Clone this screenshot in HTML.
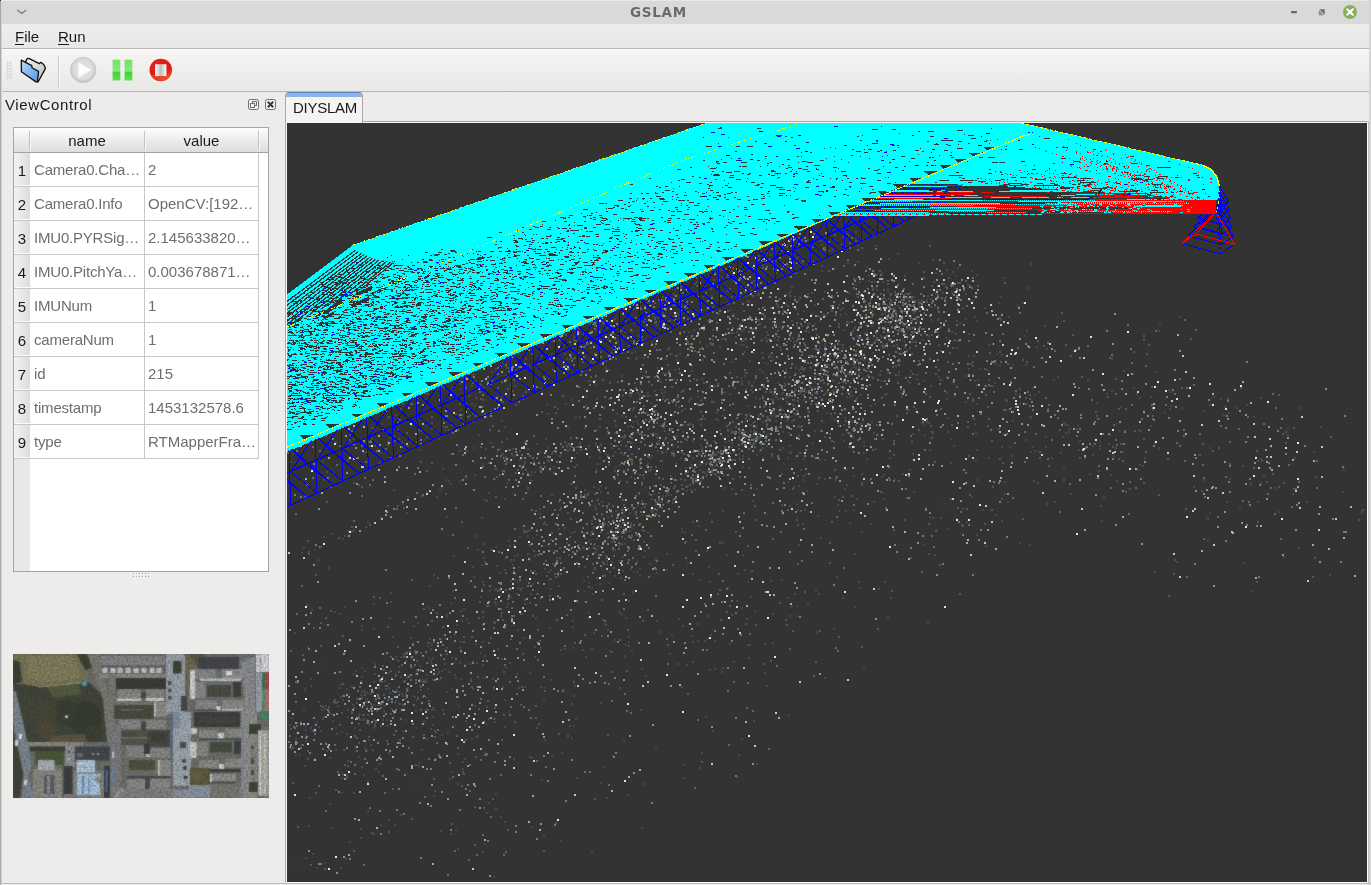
<!DOCTYPE html>
<html lang="en"><head><meta charset="utf-8"><title>GSLAM</title>
<style>
html,body{margin:0;padding:0}
body{width:1371px;height:885px;overflow:hidden;position:relative;background:#edeceb;font-family:"Liberation Sans","DejaVu Sans",sans-serif;font-size:15px;color:#1a1a1a}
.abs{position:absolute}
#titlebar,#title,#menubar,#docktitle,#tbl,#tabtxt{will-change:transform}
#titlebar{left:0;top:0;width:1371px;height:24px;background:#d9d9d9;border-top:1px solid #e9e9e9;box-sizing:border-box}
#title{left:0;width:1317px;top:3px;text-align:center;font-family:"DejaVu Sans","Liberation Sans",sans-serif;font-weight:bold;font-size:13.5px;letter-spacing:.7px;line-height:18px;color:#6a6a6a}
#lborder{left:0;top:1px;width:2px;height:884px;background:linear-gradient(90deg,#a9a9a9 0,#a9a9a9 50%,#d2d2d2 50%)}
#rborder{left:1369px;top:0;width:2px;height:885px;background:#d4d4d4}
#menubar{left:2px;top:24px;width:1367px;height:24px;background:linear-gradient(#efeeed,#e8e7e5);border-bottom:1px solid #b9b8b6}
.menu{top:1px;line-height:24px;height:24px}
.menu u{text-decoration:none;border-bottom:1px solid #1a1a1a;display:inline-block;line-height:15px}
#toolbar{left:2px;top:49px;width:1367px;height:42px;background:linear-gradient(#f6f5f4,#e9e8e6);border-bottom:1px solid #b9b8b6;border-top:1px solid #fbfbfa;box-sizing:content-box;height:41px}
#docktitle{left:5px;top:95px;line-height:20px;letter-spacing:.6px}
#tbl{left:13px;top:127px;width:254px;height:443px;border:1px solid #a5a4a2;background:#fff}
#tbl .hdr{left:0;top:0;width:254px;height:24px;background:linear-gradient(#fdfdfd,#ecebea 55%,#dedddb);border-bottom:1px solid #a5a4a2}
#tbl .hc{top:0;height:24px;line-height:25px;text-align:center}
#tbl .vs{top:3px;width:1px;height:19px;background:#c2c1bf;box-shadow:1px 0 0 #fafafa}
#tbl .rh{left:0;top:25px;width:16px;height:418px;background:#e9e8e6}
.row{left:0;width:244px;height:33px;border-bottom:1px solid #c9c8c6}
.row .n{left:0;top:0;width:16px;height:33px;background:linear-gradient(90deg,#f4f3f2,#dddcda);text-align:center;line-height:36px;color:#1a1a1a;box-shadow:0 -1px 0 #fbfbfb inset}
.row .a{left:20px;top:0;line-height:34px;color:#6e6e6e;white-space:nowrap;letter-spacing:-.2px}
.row .b{left:134px;top:0;line-height:34px;color:#6e6e6e;white-space:nowrap}
#tbl .cs{top:25px;width:1px;height:306px;background:#c9c8c6}
#tab{left:285px;top:92px;width:78px;height:31px;box-sizing:border-box;border:1px solid #a9a8a6;border-top-color:#5584c0;border-bottom:none;border-radius:4px 4px 0 0;background:#f5f4f3;overflow:hidden}
#tab:before{content:"";position:absolute;left:0;top:0;width:80px;height:3.5px;background:#8db4e3}
#tabtxt{left:292.5px;top:98px;line-height:20px;letter-spacing:-.25px}
#pane{left:285px;top:121px;width:1083px;height:762px;border:1px solid #a9a8a6;border-right-color:#fff;border-bottom-color:#fff;box-sizing:border-box;background:#f5f4f3}
#view{left:287px;top:123px;width:1080px;height:759px;background:#333;overflow:hidden}
#thumb{left:13px;top:654px;width:256px;height:144px;overflow:hidden;background:#6b6f68}
svg{display:block}
</style></head><body>
<div id="titlebar" class="abs"></div>
<div id="title" class="abs">GSLAM</div>
<svg class="abs" style="left:0;top:0" width="1371" height="24" viewBox="0 0 1371 24">
<path d="M17.8 10.4 L21.8 13.4 L25.8 10.4" fill="none" stroke="#8c8c8c" stroke-width="1.7" stroke-linecap="round" stroke-linejoin="round"/><rect x="0" y="0" width="1" height="1" fill="#1a1a6e"/>
<rect x="1291" y="11" width="6" height="2.2" rx="0.6" fill="#6b6b6b"/>
<path d="M1319.3 9.2 h5.4 v5.6 z" fill="#6b6b6b"/><path d="M1318.8 10 v5.3 h5.2 z" fill="#8c8c8c"/>
<circle cx="1350" cy="12" r="7" fill="#85b05b"/>
<path d="M1347.2 9.2 L1352.8 14.8 M1352.8 9.2 L1347.2 14.8" stroke="#fff" stroke-width="2" stroke-linecap="round"/>
</svg>
<div id="menubar" class="abs"><span class="abs menu" style="left:13px"><u>F</u>ile</span><span class="abs menu" style="left:56px"><u>R</u>un</span></div>
<div id="toolbar" class="abs"></div>
<svg class="abs" style="left:0;top:49px" width="200" height="42" viewBox="0 49 200 42">
<defs>
<linearGradient id="gfb" x1="0" y1="0" x2="1" y2="1"><stop offset="0" stop-color="#b4dbfa"/><stop offset="1" stop-color="#4f98e4"/></linearGradient>
<linearGradient id="gfg" x1="0" y1="0" x2="1" y2="1"><stop offset="0" stop-color="#f4f4f4"/><stop offset="1" stop-color="#b9b9b9"/></linearGradient>
<radialGradient id="gpl" cx="0.5" cy="0.4" r="0.6"><stop offset="0" stop-color="#e6e6e6"/><stop offset="0.75" stop-color="#d6d6d6"/><stop offset="1" stop-color="#c2c2c2"/></radialGradient>
<linearGradient id="gpa" x1="0" y1="0" x2="0" y2="1"><stop offset="0" stop-color="#6fe466"/><stop offset="0.55" stop-color="#86e97c"/><stop offset="0.6" stop-color="#3fd535"/><stop offset="1" stop-color="#5be350"/></linearGradient>
<linearGradient id="gst" x1="0" y1="0" x2="1" y2="1"><stop offset="0" stop-color="#e52222"/><stop offset="0.6" stop-color="#de1616"/><stop offset="1" stop-color="#f0521e"/></linearGradient>
<linearGradient id="gsq" x1="0" y1="0" x2="1" y2="0"><stop offset="0" stop-color="#fdfdfd"/><stop offset="0.5" stop-color="#bdbdbd"/><stop offset="1" stop-color="#fafafa"/></linearGradient>
</defs>
<g fill="#fdfdfd" stroke="#c9c8c6" stroke-width="0.5">
<rect x="7" y="62" width="1.4" height="1.4"/><rect x="10" y="62" width="1.4" height="1.4"/>
<rect x="7" y="65" width="1.4" height="1.4"/><rect x="10" y="65" width="1.4" height="1.4"/>
<rect x="7" y="68" width="1.4" height="1.4"/><rect x="10" y="68" width="1.4" height="1.4"/>
<rect x="7" y="71" width="1.4" height="1.4"/><rect x="10" y="71" width="1.4" height="1.4"/>
<rect x="7" y="74" width="1.4" height="1.4"/><rect x="10" y="74" width="1.4" height="1.4"/>
<rect x="7" y="77" width="1.4" height="1.4"/><rect x="10" y="77" width="1.4" height="1.4"/>
</g>
<path d="M25.6 61.6 L27.4 58.3 L29.3 58.6 L39.4 63.7 L40.8 62.3 L43.8 64.5 L45.5 68.4 L38.2 81.8 Z" fill="url(#gfg)" stroke="#111" stroke-width="1.3" stroke-linejoin="round"/>
<path d="M21.3 60.2 L31.8 65.6 L32 67.8 L38.6 71.4 L37.4 82 L36 81.9 L21.4 71.8 Z" fill="url(#gfb)" stroke="#111" stroke-width="1.3" stroke-linejoin="round"/>
<rect x="58" y="56" width="1" height="32" fill="#cdccca"/><rect x="59" y="56" width="1" height="32" fill="#f9f9f8"/>
<circle cx="83.2" cy="70" r="12.6" fill="url(#gpl)" stroke="#c4c4c4" stroke-width="1"/>
<circle cx="83.2" cy="70" r="10.2" fill="#dedede" stroke="#cfcfcf" stroke-width="0.8"/>
<path d="M78.3 62.3 L91.3 70 L78.3 77.7 Z" fill="#fcfcfc"/>
<rect x="112.6" y="59.7" width="7.7" height="20.8" fill="url(#gpa)"/>
<rect x="124.6" y="59.7" width="7.7" height="20.8" fill="url(#gpa)"/>
<circle cx="160.8" cy="70" r="11.3" fill="url(#gst)"/>
<path d="M150.5 74 A11.3 11.3 0 0 0 171.5 73 A22 22 0 0 1 150.5 74Z" fill="#f4602a" opacity="0.55"/>
<rect x="155.1" y="64.2" width="11.3" height="11.9" fill="url(#gsq)"/>
</svg>
<div id="docktitle" class="abs">ViewControl</div>
<svg class="abs" style="left:246px;top:97px" width="32" height="14" viewBox="246 97 32 14">
<rect x="248.5" y="99.5" width="10" height="10" rx="1.8" fill="#f4f3f2" stroke="#6e6e6e" stroke-width="1"/>
<rect x="252.5" y="101.5" width="4" height="4" fill="none" stroke="#6e6e6e" stroke-width="1"/>
<rect x="250.5" y="103.5" width="4" height="4" fill="#f4f3f2" stroke="#6e6e6e" stroke-width="1"/>
<rect x="265.5" y="99.5" width="10" height="10" rx="1.8" fill="#f4f3f2" stroke="#6e6e6e" stroke-width="1"/>
<path d="M267.8 101.8 L273.2 107.2 M273.2 101.8 L267.8 107.2" stroke="#3a3a3a" stroke-width="2" />
</svg>
<div id="tbl" class="abs"><div class="abs rh"></div><div class="abs hdr"></div><div class="abs hc" style="left:16px;width:114px">name</div><div class="abs hc" style="left:131px;width:113px">value</div><div class="abs vs" style="left:15px"></div><div class="abs vs" style="left:130px"></div><div class="abs vs" style="left:244px"></div><div class="abs row" style="top:25px"><div class="abs n">1</div><div class="abs a">Camera0.Cha…</div><div class="abs b">2</div></div><div class="abs row" style="top:59px"><div class="abs n">2</div><div class="abs a">Camera0.Info</div><div class="abs b">OpenCV:[192…</div></div><div class="abs row" style="top:93px"><div class="abs n">3</div><div class="abs a">IMU0.PYRSig…</div><div class="abs b">2.145633820…</div></div><div class="abs row" style="top:127px"><div class="abs n">4</div><div class="abs a">IMU0.PitchYa…</div><div class="abs b">0.003678871…</div></div><div class="abs row" style="top:161px"><div class="abs n">5</div><div class="abs a">IMUNum</div><div class="abs b">1</div></div><div class="abs row" style="top:195px"><div class="abs n">6</div><div class="abs a">cameraNum</div><div class="abs b">1</div></div><div class="abs row" style="top:229px"><div class="abs n">7</div><div class="abs a">id</div><div class="abs b">215</div></div><div class="abs row" style="top:263px"><div class="abs n">8</div><div class="abs a">timestamp</div><div class="abs b">1453132578.6</div></div><div class="abs row" style="top:297px"><div class="abs n">9</div><div class="abs a">type</div><div class="abs b">RTMapperFra…</div></div><div class="abs cs" style="left:130px"></div><div class="abs cs" style="left:244px"></div></div>
<svg class="abs" style="left:130px;top:572px" width="24" height="8" viewBox="130 572 24 8"><rect x="133" y="573" width="1" height="1" fill="#a3a2a0"/><rect x="134" y="574" width="1" height="1" fill="#fbfbfa"/><rect x="133" y="576" width="1" height="1" fill="#a3a2a0"/><rect x="134" y="577" width="1" height="1" fill="#fbfbfa"/><rect x="136" y="573" width="1" height="1" fill="#a3a2a0"/><rect x="137" y="574" width="1" height="1" fill="#fbfbfa"/><rect x="136" y="576" width="1" height="1" fill="#a3a2a0"/><rect x="137" y="577" width="1" height="1" fill="#fbfbfa"/><rect x="139" y="573" width="1" height="1" fill="#a3a2a0"/><rect x="140" y="574" width="1" height="1" fill="#fbfbfa"/><rect x="139" y="576" width="1" height="1" fill="#a3a2a0"/><rect x="140" y="577" width="1" height="1" fill="#fbfbfa"/><rect x="142" y="573" width="1" height="1" fill="#a3a2a0"/><rect x="143" y="574" width="1" height="1" fill="#fbfbfa"/><rect x="142" y="576" width="1" height="1" fill="#a3a2a0"/><rect x="143" y="577" width="1" height="1" fill="#fbfbfa"/><rect x="145" y="573" width="1" height="1" fill="#a3a2a0"/><rect x="146" y="574" width="1" height="1" fill="#fbfbfa"/><rect x="145" y="576" width="1" height="1" fill="#a3a2a0"/><rect x="146" y="577" width="1" height="1" fill="#fbfbfa"/><rect x="148" y="573" width="1" height="1" fill="#a3a2a0"/><rect x="149" y="574" width="1" height="1" fill="#fbfbfa"/><rect x="148" y="576" width="1" height="1" fill="#a3a2a0"/><rect x="149" y="577" width="1" height="1" fill="#fbfbfa"/></svg>
<div id="thumb" class="abs"><svg width="256" height="144" viewBox="0 0 256 144"><defs><filter id="af" x="0" y="0" width="100%" height="100%" color-interpolation-filters="sRGB"><feGaussianBlur in="SourceGraphic" stdDeviation="0.8" result="b0"/><feComposite in="SourceGraphic" in2="b0" operator="arithmetic" k1="0" k2="0.5" k3="0.5" k4="0" result="b"/><feTurbulence type="fractalNoise" baseFrequency="0.45" numOctaves="2" seed="5" result="n"/><feColorMatrix in="n" type="matrix" values="0 0 0 0 0  0 0 0 0 0  0 0 0 0 0  0.42 0.42 0 0 -0.33" result="na"/><feFlood flood-color="#1c1e1a"/><feComposite in2="na" operator="in" result="dk"/><feMerge><feMergeNode in="b"/><feMergeNode in="dk"/></feMerge></filter><clipPath id="ac"><rect width="256" height="144"/></clipPath></defs><g clip-path="url(#ac)"><g filter="url(#af)"><rect x="0" y="0" width="256" height="144" fill="#6d6e6a"/><polygon points="0,0 66,0 75,27 69,29 26,33 9,30 0,30" fill="#787556"/><polygon points="14,2 60,2 68,24 30,28 14,24" fill="#827e5e"/><polygon points="0,6 7,8 9,28 0,30" fill="#3b4036"/><polygon points="64,0 76,0 79,14 72,16" fill="#3d4232"/><polygon points="0,30 9,30 26,33 69,29 76,28 92,44 100,88 12,88" fill="#42453a"/><polygon points="34,33 66,30 68,40 40,44" fill="#555c42"/><polygon points="26,32.4 69,28 69,29.2 26,33.6" fill="#9a9a80"/><circle cx="72" cy="64" r="17" fill="#363c30"/><circle cx="52" cy="58" r="12" fill="#3a3e33"/><circle cx="30" cy="60" r="14" fill="#474738"/><circle cx="80" cy="80" r="9" fill="#3b4032"/><circle cx="34" cy="76" r="9" fill="#4e4a3a"/><polygon points="38,82 72,80 74,88 36,88" fill="#5d5644"/><rect x="69.5" y="28" width="4" height="4" fill="#42a6d6"/><rect x="52" y="61.5" width="3" height="2.5" fill="#c8ccd8"/><polygon points="0,36 3,38 11,72 15,92 19,112 15,122 21,144 9,144 11,120 7,100 2,76 0,70" fill="#7c8692"/><polygon points="0,76 6,100 10,120 7,144 0,144" fill="#3f4339"/><rect x="6" y="80" width="3" height="5" fill="#e4e8ec"/><rect x="2" y="86" width="3" height="6" fill="#dfe3e8"/><rect x="11" y="126" width="3" height="5" fill="#d8dce2"/><polygon points="74,0 86,0 90,18 96,44 100,88 94,88 90,46 80,16" fill="#7c7a74"/><rect x="12" y="88" width="60" height="4.5" fill="#8b8b84"/><rect x="70" y="88" width="62" height="4.5" fill="#6d6f6f"/><rect x="17" y="92.5" width="36" height="5" fill="#3b4034"/><rect x="22" y="97" width="29" height="14" fill="#4a5838"/><rect x="20" y="115" width="29" height="29" fill="#8b8982"/><rect x="25" y="106" width="16.5" height="10" fill="#acb2ba"/><rect x="31" y="121" width="10.5" height="19" fill="#5b5f67"/><rect x="34" y="122" width="3" height="17" fill="#8a8e95"/><rect x="52" y="92" width="9.5" height="21" fill="#8c9094"/><rect x="55" y="97" width="2" height="2" fill="#3a3c3e"/><rect x="55" y="104" width="2.5" height="2" fill="#c8d4e8"/><rect x="50.5" y="112" width="9" height="30" fill="#3b3f41"/><rect x="51" y="140" width="9" height="4" fill="#7e8084"/><rect x="62" y="92.5" width="36" height="14" fill="#43474b"/><rect x="79" y="99" width="2" height="2" fill="#a8a8a6"/><rect x="84" y="99" width="2" height="2" fill="#a8a8a6"/><rect x="64" y="99" width="6" height="4" fill="#6e6c66"/><rect x="60" y="117" width="31" height="27" fill="#84847e"/><rect x="63.5" y="106" width="18.5" height="12.5" fill="#b5c9db"/><rect x="63.5" y="112.6" width="18.5" height="1" fill="#8fa3b7"/><rect x="64" y="120" width="23" height="21" fill="#a9c5e3"/><polygon points="69,122 71.5,122 70.5,140 69,140" fill="#6f87a3"/><polygon points="75,122 77,122 76.5,140 75.5,140" fill="#6f87a3"/><polygon points="81,126 85,122 87,126 87,130" fill="#84847e"/><rect x="75" y="120" width="6" height="5" fill="#9eb6d0"/><rect x="91" y="112" width="7" height="32" fill="#3a3e44"/><rect x="92.5" y="116" width="2" height="22" fill="#5a6e90"/><rect x="88" y="2" width="64" height="11" fill="#858587"/><rect x="89.5" y="13.5" width="5" height="5.5" fill="#c6c9cc"/><rect x="97.5" y="13.5" width="5" height="5.5" fill="#c6c9cc"/><rect x="104.5" y="13.5" width="5" height="5.5" fill="#c6c9cc"/><rect x="112.5" y="13.5" width="5" height="5.5" fill="#c6c9cc"/><rect x="120.5" y="13.5" width="5" height="5.5" fill="#c6c9cc"/><rect x="128.5" y="13.5" width="5" height="5.5" fill="#c6c9cc"/><rect x="136.5" y="13.5" width="5" height="5.5" fill="#c6c9cc"/><rect x="143.5" y="13.5" width="5" height="5.5" fill="#c6c9cc"/><rect x="88" y="11.5" width="64" height="2" fill="#5a5c60"/><rect x="88" y="20" width="66" height="4" fill="#8a8a86"/><rect x="103" y="24" width="50" height="11" fill="#393c34"/><rect x="96" y="20" width="6" height="70" fill="#7a7a76"/><rect x="105" y="35" width="23" height="9" fill="#878785"/><rect x="133" y="35" width="18" height="9" fill="#878785"/><rect x="104" y="44.5" width="24" height="2.5" fill="#d2d2d0"/><rect x="133" y="44" width="18" height="3" fill="#d2d2d0"/><rect x="128" y="38" width="5" height="6" fill="#45474a"/><rect x="100" y="48" width="42" height="3" fill="#77776f"/><rect x="101" y="51" width="40" height="14" fill="#484c40"/><rect x="108" y="55" width="22" height="1.5" fill="#6a6a60"/><rect x="100" y="65" width="42" height="2" fill="#74746c"/><rect x="142" y="48" width="12" height="15" fill="#8c8c89"/><rect x="141" y="48" width="1.5" height="15" fill="#dadada"/><rect x="106" y="66" width="22" height="9" fill="#878785"/><rect x="133" y="66" width="20" height="9" fill="#878785"/><rect x="128" y="68" width="5" height="8" fill="#44464a"/><rect x="153" y="0" width="19" height="60" fill="#9aa2ac"/><rect x="160" y="7" width="8.5" height="12.5" fill="#3b4433"/><rect x="155" y="27" width="3.5" height="4" fill="#4a4e52"/><rect x="155" y="35" width="3.5" height="3.5" fill="#4a4e52"/><rect x="155" y="42" width="3.5" height="3.5" fill="#4a4e52"/><rect x="168" y="42" width="6" height="15" fill="#44484c"/><rect x="172" y="6" width="8" height="36" fill="#6a6b59"/><rect x="172" y="0" width="20" height="13" fill="#6e6850"/><polygon points="176,0 192,0 192,8 184,12" fill="#5a5848"/><rect x="157.5" y="58" width="2" height="50" fill="#5a6f8f"/><rect x="160" y="58" width="18" height="74" fill="#9ea6b0"/><rect x="160" y="58" width="7" height="16" fill="#8190a0"/><circle cx="171" cy="107" r="2" fill="#3a3e3a"/><circle cx="172" cy="114" r="2" fill="#3a3e3a"/><circle cx="172.5" cy="123.5" r="2" fill="#3a3e3a"/><rect x="167" y="88" width="6" height="6" fill="#4a4e50"/><rect x="105" y="76" width="30" height="15" fill="#53564e"/><rect x="134" y="76" width="23" height="17" fill="#484a46"/><rect x="110" y="79" width="14" height="6" fill="#47503e"/><rect x="105" y="83" width="29" height="1.5" fill="#74746e"/><rect x="138" y="79" width="16" height="9" fill="#3e4238"/><rect x="113" y="92" width="18" height="11" fill="#858582"/><rect x="137" y="94" width="20" height="10" fill="#878784"/><rect x="131" y="90" width="6" height="10" fill="#3a3c40"/><rect x="133" y="100" width="4" height="4" fill="#c4c4c4"/><rect x="112" y="103" width="34" height="18" fill="#70706c"/><rect x="116" y="106" width="26" height="10" fill="#4a5240"/><rect x="146" y="106" width="12" height="16" fill="#8c8c89"/><rect x="145" y="106" width="1.5" height="16" fill="#d8d8d8"/><rect x="114" y="124" width="18" height="11" fill="#8a8a86"/><rect x="137" y="124" width="20" height="11" fill="#8a8a86"/><rect x="114" y="122" width="43" height="2.5" fill="#44474c"/><rect x="132" y="124" width="5" height="12" fill="#4a4c50"/><rect x="97" y="72" width="11" height="72" fill="#7a7c7e"/><rect x="98.5" y="112" width="2.5" height="18" fill="#6a82a8"/><rect x="99" y="98" width="2" height="6" fill="#d0d4da"/><rect x="100" y="135" width="92" height="9" fill="#7e8084"/><rect x="160" y="136" width="36" height="8" fill="#8c94a0"/><polygon points="100,144 108,134 112,134 104,144" fill="#9a9a98"/><rect x="185" y="3" width="42" height="12" fill="#44464a"/><rect x="226" y="0" width="14" height="15" fill="#6e7076"/><rect x="182" y="15" width="21" height="9.5" fill="#87878a"/><rect x="209" y="15" width="23" height="10" fill="#8e8e8c"/><rect x="213" y="17" width="6" height="4" fill="#e4e4e4"/><rect x="187" y="24.5" width="41" height="2.5" fill="#c4c8cc"/><rect x="177" y="16" width="5" height="29" fill="#d4d4d2"/><rect x="182" y="28" width="10.5" height="16" fill="#8a8a8c"/><rect x="192.5" y="28" width="27" height="17" fill="#6e7276"/><rect x="194" y="31" width="24" height="12" fill="#494d43"/><rect x="220" y="28" width="8" height="15" fill="#3c4038"/><rect x="183" y="46" width="21" height="9.5" fill="#88888a"/><rect x="203" y="52" width="4.5" height="4.5" fill="#d6d6d6"/><rect x="209" y="46" width="22.5" height="9" fill="#8c8c8a"/><rect x="209" y="55" width="22" height="1.5" fill="#d0d0ce"/><rect x="183" y="55.5" width="21" height="1.5" fill="#4a4c50"/><rect x="181" y="58" width="46" height="15" fill="#3c3e40"/><rect x="185" y="62" width="38" height="8" fill="#42463e"/><rect x="186" y="76" width="19" height="8.5" fill="#8a8a86"/><rect x="205" y="79" width="6" height="6" fill="#d2d2d0"/><rect x="212" y="75" width="19" height="8.5" fill="#8a8a86"/><rect x="186" y="84.5" width="45" height="1.5" fill="#44464a"/><rect x="178" y="74" width="6" height="6" fill="#cfcfcd"/><rect x="177" y="88" width="6.5" height="16" fill="#cdcdcb"/><rect x="184" y="88" width="11" height="14" fill="#878786"/><rect x="195.5" y="86" width="26" height="14.5" fill="#70747a"/><rect x="197" y="88" width="22" height="10.5" fill="#464c3e"/><rect x="221" y="87" width="7.5" height="13" fill="#3e4240"/><rect x="186" y="106" width="20" height="8.5" fill="#8a8a88"/><rect x="206" y="110" width="5" height="5" fill="#d4d4d2"/><rect x="212" y="105" width="18.5" height="8.5" fill="#8b8b88"/><rect x="184" y="115" width="48" height="3" fill="#3c3e40"/><rect x="177" y="114" width="20" height="17" fill="#5d583f"/><circle cx="184" cy="122" r="5" fill="#6a6246"/><rect x="198" y="120" width="25" height="7.5" fill="#8f8f8b"/><rect x="197" y="120" width="2" height="8" fill="#dcdcda"/><rect x="198" y="127.5" width="25" height="2" fill="#4c4e4a"/><rect x="196" y="130" width="36" height="14" fill="#7a7872"/><rect x="176" y="131" width="21" height="13" fill="#8a94a4"/><polygon points="228,8 242,2 242,144 228,144 228,60 232,48" fill="#8a8c90"/><rect x="232" y="56" width="12" height="88" fill="#8e8f90"/><rect x="243" y="0" width="13" height="18" fill="#d6d8da"/><rect x="246" y="2" width="3" height="14" fill="#b4b8c0"/><rect x="243" y="18" width="6" height="40" fill="#9ba1a9"/><rect x="249" y="18" width="3.5" height="17" fill="#3f7258"/><rect x="249" y="35" width="3.5" height="22" fill="#5c8c72"/><rect x="252.5" y="18" width="3.5" height="17" fill="#a84a4a"/><rect x="252.5" y="35" width="3.5" height="22" fill="#bf7272"/><rect x="247" y="57" width="9" height="8" fill="#4a8468"/><rect x="236" y="70" width="12" height="10" fill="#3c4434"/><rect x="236" y="128" width="10" height="10" fill="#3f4636"/><rect x="245" y="76" width="11" height="66" fill="#aaaaa4"/><rect x="246.5" y="78" width="1.5" height="62" fill="#deded8"/><rect x="251" y="80" width="2" height="60" fill="#c4c0b0"/><rect x="237" y="86" width="6" height="42" fill="#86867f"/><rect x="238" y="92" width="3" height="3" fill="#4a4c48"/><rect x="238" y="104" width="3" height="6" fill="#4a4c48"/><rect x="238" y="116" width="3" height="5" fill="#4a4c48"/></g></g></svg></div>
<div id="pane" class="abs"></div>
<div id="tab" class="abs"></div><div id="tabtxt" class="abs">DIYSLAM</div>
<div id="view" class="abs"><svg width="1080" height="759" viewBox="287 123 1080 759" shape-rendering="crispEdges">
<rect x="287" y="123" width="1080" height="759" fill="#333"/>
<g fill="none" stroke-width="2"><!-- 7726 pts --><path stroke="#575550" d="M798 238h2M801 240h2M801 241h2M849 243h2M768 244h2M929 246h2M812 247h2M758 260h2M943 263h2M731 264h2M762 268h2M709 271h2M879 271h2M923 272h2M775 273h2M732 276h2M699 277h2M722 277h2M739 278h2M923 278h2M853 279h2M718 280h2M887 281h2M965 281h2M767 283h2M957 283h2M1004 283h2M887 284h2M941 284h2M943 284h2M696 286h2M977 286h2M679 288h2M763 288h2M729 289h2M672 290h2M872 290h2M883 290h2M894 292h2M858 294h2M880 294h2M691 295h2M785 295h2M937 295h2M903 296h2M857 297h2M883 298h2M958 298h2M870 299h2M881 299h2M658 300h2M901 300h2M969 300h2M926 302h2M654 303h2M776 304h2M663 305h2M645 306h2M787 306h2M869 306h2M639 307h2M777 307h2M875 307h2M930 307h2M686 308h2M899 308h2M922 308h2M795 309h2M894 310h2M743 311h2M783 311h2M831 311h2M871 311h2M907 311h2M885 312h2M894 312h2M760 313h2M923 313h2M797 314h2M662 315h2M823 315h2M764 316h2M817 316h2M891 316h2M866 317h2M871 317h2M887 317h2M890 317h2M654 318h2M999 318h2M654 319h2M687 319h2M737 319h2M901 319h2M644 320h2M650 320h2M758 320h2M791 321h2M1063 321h2M643 322h2M919 322h2M906 323h2M759 324h2M889 324h2M757 325h2M703 326h2M858 327h2M854 328h2M887 328h2M939 328h2M727 329h2M743 329h2M781 329h2M894 329h2M900 329h2M907 329h2M914 329h2M921 329h2M948 329h2M751 331h2M777 331h2M805 331h2M852 331h2M898 331h2M625 332h2M936 332h2M875 333h2M679 334h2M767 335h2M816 335h2M931 335h2M1072 335h2M893 336h2M1143 336h2M778 337h2M811 337h2M876 338h2M888 339h2M1190 339h2M761 340h2M822 340h2M876 340h2M954 340h2M1143 340h2M686 341h2M741 341h2M766 341h2M796 341h2M1037 341h2M687 342h2M699 342h2M786 342h2M915 342h2M873 343h2M874 343h2M712 344h2M804 345h2M868 345h2M938 345h2M1065 345h2M869 346h2M881 346h2M893 346h2M1043 346h2M849 347h2M870 347h2M668 348h2M701 348h2M952 348h2M694 351h2M855 351h2M940 351h2M600 352h2M999 352h2M1133 352h2M577 353h2M989 353h2M594 354h2M899 354h2M901 354h2M1146 354h2M540 356h2M824 356h2M811 357h2M812 357h2M574 358h2M661 358h2M762 358h2M1109 358h2M572 359h2M615 359h2M929 359h2M803 360h2M856 360h2M1022 360h2M947 362h2M972 362h2M1000 362h2M1026 362h2M589 363h2M816 363h2M818 363h2M868 363h2M778 364h2M825 365h2M872 365h2M481 367h2M801 367h2M892 367h2M833 368h2M842 368h2M678 369h2M837 369h2M984 369h2M803 370h2M821 370h2M840 370h2M850 370h2M938 370h2M825 371h2M605 372h2M746 373h2M912 374h2M935 374h2M832 375h2M895 375h2M648 377h2M654 377h2M784 377h2M1081 377h2M872 378h2M1115 379h2M602 380h2M665 380h2M696 380h2M970 380h2M809 381h2M487 382h2M501 382h2M617 382h2M734 382h2M952 382h2M472 383h2M634 383h2M703 383h2M823 383h2M838 383h2M845 383h2M897 383h2M741 384h2M763 385h2M442 387h2M577 387h2M817 387h2M840 387h2M956 387h2M1151 387h2M465 388h2M497 388h2M635 388h2M507 389h2M540 389h2M900 389h2M1019 389h2M745 390h2M782 390h2M801 391h2M765 392h2M847 392h2M721 394h2M773 394h2M969 394h2M823 395h2M985 395h2M1278 395h2M522 396h2M562 396h2M775 397h2M929 397h2M881 398h2M1025 398h2M459 399h2M1029 399h2M1227 399h2M821 400h2M671 401h2M678 401h2M763 401h2M502 402h2M923 402h2M402 404h2M459 404h2M810 404h2M515 405h2M656 405h2M792 405h2M798 405h2M913 407h2M987 407h2M633 408h2M832 408h2M940 409h2M1047 409h2M1118 409h2M1125 409h2M936 410h2M1005 410h2M817 411h2M700 412h2M769 412h2M808 412h2M1095 412h2M555 413h2M834 413h2M906 413h2M1143 413h2M484 414h2M784 414h2M794 414h2M830 414h2M788 415h2M475 416h2M702 416h2M1152 416h2M431 417h2M467 417h2M485 417h2M635 417h2M789 417h2M460 418h2M745 418h2M767 418h2M397 419h2M787 419h2M973 419h2M988 419h2M399 420h2M768 420h2M793 420h2M614 421h2M821 421h2M664 422h2M754 422h2M967 422h2M656 423h2M837 423h2M737 424h2M766 424h2M860 424h2M687 425h2M728 425h2M460 426h2M492 426h2M663 426h2M755 426h2M786 426h2M801 426h2M930 426h2M987 426h2M632 427h2M652 427h2M692 427h2M753 427h2M779 427h2M967 427h2M372 428h2M1293 428h2M998 429h2M859 430h2M918 430h2M1059 430h2M1124 431h2M1134 431h2M755 432h2M1285 432h2M730 433h2M743 434h2M1282 434h2M624 435h2M325 436h2M621 437h2M624 437h2M1330 437h2M931 438h2M739 439h2M755 439h2M779 439h2M686 440h2M754 440h2M831 441h2M893 441h2M991 441h2M335 442h2M368 442h2M416 442h2M501 442h2M629 442h2M300 443h2M401 443h2M1285 443h2M568 444h2M595 444h2M658 444h2M741 444h2M753 444h2M1120 444h2M1202 444h2M298 445h2M387 445h2M600 445h2M752 445h2M569 446h2M625 446h2M661 446h2M672 446h2M708 446h2M480 447h2M571 447h2M655 447h2M754 447h2M724 448h2M1115 448h2M1218 448h2M597 449h2M618 449h2M724 449h2M1082 449h2M580 450h2M698 451h2M712 451h2M1212 451h2M1256 451h2M599 452h2M692 452h2M717 452h2M1039 452h2M620 453h2M729 453h2M799 453h2M511 454h2M683 454h2M771 454h2M547 456h2M559 456h2M612 456h2M710 456h2M968 456h2M532 458h2M711 458h2M1039 458h2M1084 458h2M347 460h2M712 460h2M661 461h2M1257 461h2M631 462h2M934 462h2M379 463h2M705 464h2M710 464h2M1229 464h2M544 467h2M650 467h2M655 467h2M539 468h2M1253 468h2M495 469h2M517 470h2M525 470h2M426 471h2M623 471h2M714 474h2M1272 474h2M499 475h2M797 476h2M690 477h2M739 477h2M690 478h2M634 479h2M684 480h2M898 481h2M626 482h2M1266 482h2M572 483h2M670 483h2M861 483h2M1143 483h2M358 485h2M750 485h2M992 487h2M1278 487h2M527 488h2M575 488h2M673 488h2M682 489h2M792 489h2M1201 491h2M1125 492h2M658 493h2M594 494h2M587 495h2M969 495h2M1158 495h2M421 496h2M851 496h2M304 497h2M495 497h2M950 499h2M838 500h2M645 504h2M387 506h2M612 506h2M754 506h2M644 507h2M403 508h2M560 508h2M606 508h2M626 509h2M627 509h2M966 509h2M1185 509h2M656 510h2M787 510h2M991 510h2M1362 510h2M800 511h2M611 516h2M658 516h2M617 517h2M539 518h2M540 518h2M621 519h2M1022 519h2M904 520h2M461 522h2M1257 522h2M369 525h2M797 525h2M961 525h2M962 526h2M602 527h2M617 528h2M610 530h2M893 530h2M527 531h2M591 532h2M551 533h2M636 535h2M569 537h2M621 537h2M338 538h2M772 539h2M604 542h2M684 543h2M719 543h2M829 543h2M621 544h2M595 549h2M491 550h2M533 551h2M695 551h2M308 554h2M587 556h2M1314 558h2M602 562h2M592 564h2M672 565h2M939 565h2M594 568h2M613 568h2M921 572h2M535 574h2M1173 574h2M546 576h2M555 577h2M587 577h2M1312 577h2M550 579h2M411 580h2M1256 582h2M588 587h2M719 590h2M497 591h2M891 591h2M804 592h2M623 594h2M717 594h2M959 594h2M549 596h2M373 597h2M601 600h2M779 603h2M486 606h2M729 606h2M647 610h2M330 611h2M452 611h2M482 612h2M501 613h2M520 614h2M500 616h2M532 616h2M325 618h2M478 618h2M502 620h2M720 620h2M785 620h2M431 621h2M493 622h2M494 623h2M482 625h2M755 625h2M387 627h2M313 628h2M877 629h2M537 630h2M627 630h2M792 631h2M819 631h2M454 634h2M342 636h2M601 636h2M471 637h2M510 639h2M619 640h2M433 642h2M463 642h2M320 646h2M789 649h2M290 651h2M414 651h2M403 654h2M446 654h2M537 660h2M472 662h2M427 663h2M763 664h2M401 665h2M382 666h2M383 670h2M398 672h2M395 676h2M477 677h2M440 678h2M404 681h2M470 681h2M403 682h2M420 687h2M493 687h2M544 691h2M405 694h2M687 694h2M364 695h2M422 697h2M417 698h2M387 700h2M487 701h2M337 702h2M391 702h2M335 703h2M402 705h2M535 706h2M328 707h2M353 708h2M432 708h2M494 708h2M478 709h2M420 710h2M427 710h2M393 713h2M443 714h2M363 715h2M377 720h2M296 723h2M538 724h2M339 725h2M290 729h2M359 730h2M314 731h2M393 735h2M607 735h2M354 736h2M456 736h2M412 737h2M434 737h2M476 737h2M501 740h2M358 743h2M292 748h2M343 750h2M307 751h2M612 756h2M440 758h2M701 762h2M449 763h2M347 766h2M346 776h2M346 778h2M433 779h2M292 783h2M335 790h2M474 807h2M411 819h2M297 827h2M507 830h2M388 832h2M353 851h2M543 851h2M310 865h2M324 869h2"/><path stroke="#4a4946" d="M855 232h2M847 234h2M788 235h2M848 236h2M873 236h2M842 237h2M857 238h2M820 241h2M821 245h2M790 246h2M875 246h2M786 247h2M833 248h2M774 249h2M843 249h2M831 250h2M760 251h2M766 253h2M897 254h2M770 255h2M788 256h2M742 257h2M796 258h2M888 259h2M932 260h2M762 261h2M763 262h2M857 262h2M782 263h2M847 263h2M801 264h2M1030 264h2M762 265h2M821 266h2M787 267h2M786 268h2M957 268h2M946 270h2M731 271h2M761 271h2M821 271h2M971 271h2M741 272h2M952 272h2M935 273h2M868 275h2M872 275h2M690 277h2M695 278h2M882 279h2M713 280h2M936 280h2M753 281h2M868 281h2M892 281h2M696 282h2M874 282h2M882 282h2M933 282h2M694 284h2M684 285h2M704 285h2M855 285h2M967 285h2M680 286h2M754 286h2M969 286h2M791 287h2M675 288h2M710 288h2M872 288h2M963 288h2M1028 288h2M669 289h2M710 289h2M778 289h2M854 289h2M887 289h2M673 290h2M876 290h2M750 291h2M744 292h2M748 292h2M863 292h2M865 292h2M887 292h2M901 292h2M770 293h2M811 293h2M935 293h2M942 293h2M945 293h2M673 294h2M758 294h2M807 294h2M904 294h2M952 294h2M965 294h2M757 295h2M890 295h2M711 296h2M745 296h2M876 296h2M927 296h2M957 296h2M662 297h2M702 297h2M724 297h2M731 297h2M794 297h2M860 297h2M832 298h2M902 298h2M907 298h2M910 298h2M957 298h2M888 299h2M902 299h2M911 299h2M930 299h2M662 300h2M798 300h2M870 300h2M926 300h2M635 301h2M679 301h2M747 301h2M882 301h2M972 301h2M648 302h2M748 302h2M891 302h2M899 302h2M918 302h2M923 302h2M646 303h2M700 303h2M894 303h2M902 303h2M1022 303h2M726 304h2M728 304h2M918 304h2M945 304h2M650 305h2M675 305h2M865 305h2M876 305h2M886 305h2M906 305h2M913 305h2M684 306h2M777 306h2M897 306h2M909 306h2M934 306h2M712 307h2M780 307h2M864 307h2M874 307h2M887 307h2M888 307h2M889 307h2M906 307h2M937 307h2M685 308h2M962 308h2M623 309h2M830 309h2M868 309h2M869 309h2M891 309h2M730 310h2M840 310h2M868 310h2M900 310h2M937 310h2M803 311h2M862 311h2M911 311h2M700 312h2M783 312h2M884 312h2M662 313h2M665 313h2M675 313h2M774 313h2M648 314h2M718 314h2M733 314h2M811 314h2M881 314h2M882 314h2M840 315h2M907 315h2M605 316h2M612 316h2M652 316h2M665 316h2M673 316h2M763 316h2M825 316h2M885 316h2M910 316h2M728 317h2M819 317h2M895 317h2M1008 317h2M1179 317h2M657 318h2M750 318h2M891 318h2M915 318h2M922 318h2M614 319h2M769 319h2M895 319h2M600 320h2M613 320h2M877 320h2M916 320h2M930 320h2M937 320h2M1000 320h2M604 321h2M659 321h2M668 321h2M669 321h2M707 321h2M742 321h2M757 321h2M819 321h2M894 321h2M896 321h2M907 321h2M956 321h2M594 322h2M708 322h2M901 322h2M910 322h2M589 323h2M593 323h2M634 323h2M654 323h2M858 323h2M872 323h2M959 323h2M1159 323h2M602 324h2M677 324h2M889 324h2M656 325h2M782 326h2M783 326h2M796 326h2M801 326h2M846 326h2M1044 326h2M578 327h2M779 327h2M782 327h2M879 327h2M940 327h2M748 328h2M891 328h2M906 328h2M660 329h2M752 329h2M907 329h2M693 330h2M712 330h2M812 330h2M843 330h2M896 330h2M904 330h2M599 331h2M624 331h2M631 331h2M741 331h2M1026 331h2M624 332h2M688 332h2M736 332h2M766 332h2M787 332h2M808 332h2M889 332h2M892 332h2M951 332h2M578 333h2M585 333h2M866 333h2M912 333h2M918 333h2M582 334h2M752 334h2M798 334h2M955 334h2M968 334h2M576 335h2M617 335h2M724 335h2M789 335h2M560 336h2M623 336h2M776 336h2M827 336h2M856 336h2M880 336h2M928 336h2M1023 336h2M573 337h2M735 337h2M789 337h2M883 337h2M884 337h2M690 338h2M765 338h2M860 338h2M881 338h2M907 338h2M946 338h2M614 339h2M721 339h2M573 340h2M599 340h2M642 340h2M686 340h2M725 340h2M743 340h2M824 340h2M922 340h2M927 340h2M592 341h2M742 341h2M760 341h2M790 341h2M821 341h2M874 341h2M892 341h2M903 341h2M569 342h2M651 343h2M709 343h2M909 343h2M687 344h2M689 344h2M824 344h2M711 345h2M740 345h2M743 345h2M834 345h2M841 345h2M842 345h2M896 345h2M584 346h2M597 346h2M628 346h2M853 346h2M859 346h2M779 347h2M805 347h2M870 347h2M1036 347h2M527 348h2M590 348h2M629 348h2M815 348h2M882 348h2M956 348h2M850 349h2M613 350h2M667 350h2M689 350h2M780 350h2M521 351h2M824 351h2M696 352h2M744 352h2M824 352h2M611 353h2M619 353h2M631 353h2M753 353h2M837 353h2M848 353h2M898 353h2M564 354h2M669 354h2M671 354h2M996 354h2M513 355h2M1001 355h2M814 356h2M861 356h2M968 356h2M973 356h2M837 357h2M628 358h2M636 358h2M643 358h2M861 358h2M865 358h2M1111 358h2M525 359h2M553 359h2M569 359h2M611 359h2M635 359h2M828 359h2M860 359h2M1111 359h2M801 360h2M849 360h2M863 360h2M869 360h2M887 360h2M493 361h2M605 361h2M605 361h2M749 361h2M838 361h2M845 361h2M897 361h2M923 361h2M542 362h2M678 362h2M870 362h2M893 362h2M592 363h2M764 363h2M562 364h2M832 364h2M834 365h2M1012 365h2M523 366h2M533 366h2M867 366h2M972 366h2M999 366h2M809 367h2M853 367h2M506 368h2M508 368h2M605 368h2M804 368h2M810 368h2M829 368h2M855 368h2M495 369h2M800 369h2M886 369h2M968 369h2M479 370h2M515 370h2M552 370h2M608 370h2M759 370h2M798 370h2M841 370h2M986 370h2M508 371h2M691 371h2M777 371h2M868 371h2M880 371h2M910 371h2M1123 371h2M491 372h2M640 372h2M762 372h2M855 372h2M898 372h2M1155 372h2M563 373h2M662 373h2M795 373h2M800 373h2M847 373h2M852 373h2M860 373h2M887 373h2M473 374h2M814 374h2M820 374h2M689 375h2M832 375h2M850 375h2M867 375h2M879 375h2M898 375h2M916 375h2M972 375h2M472 376h2M621 376h2M643 376h2M669 376h2M839 376h2M965 376h2M645 377h2M789 377h2M814 377h2M836 377h2M946 377h2M1057 377h2M456 378h2M465 378h2M740 378h2M845 378h2M863 378h2M673 379h2M701 379h2M816 379h2M843 379h2M471 380h2M492 380h2M939 380h2M941 380h2M977 380h2M988 380h2M1087 380h2M474 381h2M588 381h2M907 381h2M974 381h2M1010 381h2M609 382h2M639 382h2M660 382h2M731 382h2M748 382h2M609 383h2M850 383h2M510 384h2M594 384h2M748 384h2M784 384h2M480 385h2M976 385h2M464 386h2M471 386h2M510 386h2M514 386h2M709 386h2M714 386h2M784 386h2M930 386h2M984 386h2M992 386h2M483 387h2M712 387h2M763 387h2M798 387h2M809 387h2M443 388h2M709 388h2M811 388h2M853 388h2M1032 388h2M1133 388h2M755 389h2M451 390h2M640 390h2M750 390h2M769 390h2M1168 390h2M654 391h2M773 391h2M791 391h2M832 391h2M1111 391h2M680 392h2M752 392h2M805 392h2M826 392h2M1038 392h2M1170 392h2M629 393h2M661 393h2M793 393h2M800 393h2M814 393h2M946 393h2M427 394h2M729 394h2M781 394h2M798 394h2M1015 394h2M1106 394h2M1136 394h2M803 395h2M860 395h2M884 395h2M1019 395h2M630 396h2M648 396h2M663 396h2M762 396h2M788 396h2M836 396h2M851 396h2M954 396h2M642 397h2M814 397h2M819 397h2M849 397h2M901 397h2M1150 397h2M1213 397h2M458 398h2M475 398h2M690 398h2M780 398h2M785 398h2M856 398h2M1139 398h2M1260 398h2M522 399h2M596 399h2M608 399h2M662 399h2M675 399h2M759 399h2M770 399h2M777 399h2M821 399h2M830 399h2M946 399h2M482 400h2M667 400h2M689 400h2M701 400h2M922 400h2M700 401h2M772 401h2M812 401h2M855 401h2M1006 401h2M713 402h2M713 402h2M765 402h2M786 402h2M410 404h2M466 404h2M471 404h2M856 404h2M874 404h2M976 404h2M1019 404h2M1246 405h2M474 406h2M585 406h2M653 406h2M759 406h2M838 406h2M1017 406h2M1170 406h2M769 407h2M1224 407h2M780 408h2M822 408h2M1010 408h2M1181 408h2M1236 408h2M1298 408h2M400 409h2M557 409h2M643 409h2M832 409h2M853 409h2M915 409h2M1169 409h2M460 410h2M632 410h2M778 410h2M781 410h2M787 410h2M807 410h2M908 410h2M1152 410h2M642 411h2M655 411h2M681 411h2M772 411h2M773 411h2M773 411h2M797 411h2M1203 411h2M654 412h2M796 412h2M645 413h2M716 413h2M826 413h2M917 413h2M1228 413h2M455 414h2M547 414h2M740 414h2M748 414h2M773 414h2M781 414h2M395 415h2M649 415h2M672 415h2M770 415h2M782 415h2M795 415h2M1223 415h2M482 416h2M621 416h2M660 416h2M722 416h2M746 416h2M758 416h2M441 417h2M766 417h2M767 417h2M852 417h2M1029 417h2M844 418h2M947 418h2M1030 418h2M700 419h2M704 419h2M715 419h2M749 419h2M780 419h2M857 419h2M1098 419h2M698 420h2M717 420h2M849 420h2M501 421h2M636 421h2M649 421h2M769 421h2M775 421h2M786 421h2M1012 421h2M472 422h2M632 422h2M762 422h2M752 423h2M928 423h2M1063 423h2M340 424h2M859 424h2M922 424h2M974 424h2M1116 424h2M700 425h2M780 425h2M843 425h2M848 425h2M855 425h2M1065 425h2M615 426h2M630 426h2M666 426h2M679 426h2M1077 426h2M1150 426h2M444 427h2M567 427h2M599 427h2M755 427h2M766 427h2M849 427h2M1320 427h2M371 428h2M584 428h2M648 428h2M770 428h2M859 428h2M647 429h2M1069 429h2M1076 429h2M448 430h2M719 430h2M730 430h2M845 430h2M1138 430h2M336 431h2M420 431h2M664 431h2M740 431h2M753 431h2M814 431h2M1119 431h2M1140 431h2M387 432h2M671 432h2M744 432h2M947 432h2M1068 432h2M614 433h2M652 433h2M730 433h2M742 433h2M788 433h2M847 433h2M848 433h2M873 433h2M932 433h2M1065 433h2M325 434h2M607 434h2M650 434h2M655 434h2M912 434h2M741 435h2M744 435h2M766 435h2M798 435h2M842 435h2M1109 435h2M1287 435h2M441 436h2M676 436h2M747 436h2M426 437h2M575 437h2M657 437h2M722 437h2M755 437h2M758 437h2M759 437h2M824 437h2M852 437h2M1045 437h2M1062 437h2M389 438h2M623 438h2M656 438h2M674 438h2M699 438h2M745 438h2M759 438h2M371 439h2M398 439h2M438 439h2M545 439h2M597 439h2M753 439h2M882 439h2M302 440h2M664 440h2M739 440h2M1025 440h2M620 441h2M658 441h2M692 441h2M713 441h2M728 441h2M743 441h2M818 441h2M843 441h2M387 442h2M725 442h2M833 442h2M335 443h2M359 443h2M490 443h2M579 443h2M631 443h2M651 443h2M731 443h2M754 443h2M1154 443h2M536 444h2M610 444h2M731 444h2M764 444h2M566 445h2M595 445h2M620 445h2M700 445h2M707 445h2M750 445h2M407 446h2M588 446h2M616 446h2M766 446h2M789 446h2M863 446h2M1099 446h2M566 447h2M576 447h2M667 447h2M848 447h2M849 447h2M1001 447h2M1045 447h2M1270 447h2M346 448h2M611 448h2M762 448h2M782 448h2M852 448h2M1158 448h2M485 449h2M499 449h2M527 449h2M715 449h2M875 449h2M1099 449h2M507 450h2M693 450h2M929 450h2M976 450h2M1078 450h2M459 451h2M466 451h2M519 451h2M567 451h2M572 451h2M603 451h2M673 451h2M1034 451h2M539 452h2M552 452h2M665 452h2M678 452h2M789 452h2M1313 452h2M363 453h2M576 453h2M662 453h2M719 453h2M725 453h2M790 453h2M863 453h2M1060 453h2M450 454h2M502 454h2M738 454h2M912 454h2M517 455h2M623 455h2M700 455h2M756 455h2M1092 455h2M513 456h2M651 456h2M709 456h2M712 456h2M742 456h2M771 456h2M1011 456h2M1113 456h2M348 457h2M505 457h2M544 457h2M589 457h2M648 457h2M720 457h2M812 457h2M1255 457h2M574 458h2M599 458h2M649 458h2M692 458h2M712 458h2M762 458h2M889 458h2M1144 458h2M1294 458h2M301 459h2M707 459h2M716 459h2M742 459h2M803 459h2M866 459h2M1260 459h2M389 460h2M547 460h2M703 460h2M715 460h2M727 460h2M819 460h2M824 460h2M548 461h2M659 461h2M719 461h2M975 461h2M1266 461h2M290 462h2M524 462h2M533 462h2M639 462h2M294 463h2M524 463h2M702 463h2M706 463h2M950 463h2M482 464h2M596 464h2M647 464h2M700 464h2M349 465h2M523 465h2M534 465h2M576 465h2M608 465h2M619 465h2M699 465h2M1139 465h2M714 466h2M1242 466h2M553 467h2M615 467h2M1063 467h2M685 468h2M748 468h2M442 469h2M721 469h2M725 469h2M731 469h2M542 470h2M549 470h2M596 470h2M618 470h2M648 470h2M650 470h2M699 470h2M800 470h2M845 470h2M909 470h2M1137 470h2M644 471h2M1098 471h2M326 472h2M531 472h2M534 472h2M707 472h2M514 473h2M515 473h2M704 473h2M711 473h2M718 473h2M861 474h2M902 474h2M1089 474h2M474 475h2M530 475h2M706 475h2M715 475h2M723 475h2M883 475h2M1110 475h2M670 476h2M803 476h2M1263 476h2M630 477h2M881 477h2M1315 477h2M465 478h2M643 478h2M494 479h2M824 479h2M323 480h2M676 480h2M802 480h2M1202 480h2M531 481h2M619 481h2M700 481h2M1033 481h2M1116 481h2M697 482h2M1037 483h2M1249 483h2M1260 483h2M450 484h2M570 484h2M816 484h2M689 485h2M861 485h2M653 486h2M687 486h2M593 487h2M685 487h2M793 487h2M1193 487h2M724 488h2M1274 488h2M598 489h2M756 489h2M393 490h2M584 490h2M690 490h2M694 490h2M806 491h2M913 492h2M1342 492h2M488 493h2M587 493h2M882 493h2M638 494h2M648 494h2M1004 494h2M1070 494h2M551 495h2M670 495h2M306 497h2M407 497h2M436 497h2M834 497h2M971 497h2M585 498h2M504 499h2M651 499h2M856 499h2M883 499h2M1001 499h2M484 500h2M658 500h2M661 500h2M672 500h2M486 501h2M641 501h2M752 501h2M558 502h2M601 502h2M661 502h2M873 502h2M1054 502h2M1257 502h2M1306 502h2M943 504h2M1046 504h2M637 505h2M655 505h2M781 505h2M837 505h2M594 506h2M1100 506h2M1239 507h2M539 509h2M652 509h2M962 509h2M632 510h2M650 510h2M797 510h2M853 510h2M652 511h2M722 511h2M609 512h2M623 512h2M651 512h2M1361 512h2M406 513h2M629 513h2M709 513h2M634 514h2M636 515h2M641 515h2M995 515h2M623 516h2M929 517h2M380 518h2M481 518h2M932 518h2M940 518h2M956 519h2M1207 519h2M1001 521h2M544 522h2M692 522h2M966 522h2M630 523h2M849 523h2M627 524h2M546 525h2M626 525h2M599 526h2M607 526h2M623 526h2M365 527h2M593 527h2M620 527h2M564 528h2M558 529h2M601 529h2M681 529h2M353 530h2M523 530h2M536 530h2M603 530h2M610 530h2M641 530h2M352 531h2M623 531h2M523 532h2M574 532h2M861 532h2M571 533h2M607 533h2M331 534h2M536 535h2M615 535h2M976 535h2M344 536h2M474 536h2M519 537h2M638 538h2M342 539h2M596 539h2M624 539h2M589 540h2M508 541h2M515 541h2M1207 541h2M611 542h2M643 542h2M719 542h2M984 542h2M566 543h2M1019 543h2M483 544h2M513 545h2M547 545h2M593 545h2M798 545h2M509 546h2M568 546h2M597 546h2M618 546h2M985 546h2M601 547h2M303 548h2M1298 548h2M637 549h2M477 550h2M579 550h2M612 550h2M614 550h2M576 551h2M706 551h2M593 553h2M575 554h2M854 554h2M928 554h2M517 555h2M568 555h2M598 555h2M934 555h2M453 556h2M514 556h2M605 556h2M643 557h2M1283 557h2M483 558h2M559 558h2M559 559h2M510 560h2M513 560h2M529 560h2M606 561h2M618 561h2M484 562h2M611 562h2M636 562h2M1176 562h2M1243 563h2M552 564h2M649 564h2M481 565h2M472 567h2M578 567h2M584 567h2M708 567h2M328 568h2M544 569h2M630 569h2M639 569h2M666 570h2M548 572h2M633 572h2M1154 572h2M499 573h2M515 574h2M737 574h2M433 575h2M604 575h2M1329 575h2M557 576h2M604 576h2M614 576h2M836 577h2M620 578h2M514 580h2M548 580h2M510 581h2M770 581h2M482 582h2M517 582h2M709 582h2M858 582h2M884 582h2M532 584h2M599 584h2M558 586h2M521 588h2M591 588h2M859 588h2M481 589h2M495 589h2M519 589h2M878 589h2M815 590h2M452 591h2M489 591h2M632 592h2M390 593h2M508 594h2M516 594h2M530 594h2M592 594h2M794 594h2M818 594h2M500 595h2M508 596h2M480 597h2M557 597h2M508 598h2M787 598h2M842 598h2M890 598h2M736 601h2M390 602h2M529 603h2M373 604h2M495 604h2M507 604h2M524 604h2M306 605h2M488 606h2M506 607h2M428 608h2M463 609h2M311 610h2M460 611h2M334 612h2M436 613h2M339 614h2M772 614h2M446 616h2M707 616h2M789 616h2M389 618h2M535 618h2M678 619h2M746 619h2M498 620h2M461 621h2M572 621h2M656 621h2M468 623h2M604 624h2M697 624h2M456 625h2M513 625h2M605 625h2M361 626h2M413 626h2M682 626h2M572 627h2M504 628h2M373 629h2M833 629h2M361 630h2M607 630h2M660 632h2M816 632h2M294 633h2M593 633h2M671 635h2M710 635h2M691 636h2M392 637h2M628 637h2M410 638h2M429 639h2M349 641h2M704 641h2M692 642h2M772 643h2M764 644h2M431 645h2M625 645h2M747 645h2M749 645h2M628 646h2M307 647h2M534 647h2M446 648h2M459 648h2M540 648h2M430 649h2M497 649h2M591 649h2M460 652h2M405 654h2M669 654h2M440 656h2M484 656h2M624 656h2M395 657h2M400 657h2M534 657h2M585 657h2M432 658h2M748 658h2M413 659h2M501 659h2M405 661h2M430 661h2M459 662h2M692 662h2M733 662h2M453 663h2M476 663h2M509 663h2M431 664h2M444 664h2M469 664h2M527 664h2M527 664h2M677 664h2M464 665h2M482 665h2M686 665h2M419 666h2M398 667h2M863 667h2M722 668h2M380 669h2M437 669h2M641 669h2M714 669h2M419 670h2M709 670h2M355 671h2M364 671h2M441 671h2M721 672h2M764 673h2M353 674h2M374 674h2M516 674h2M426 675h2M454 675h2M382 677h2M406 678h2M455 678h2M824 678h2M310 679h2M470 679h2M492 679h2M432 680h2M439 680h2M550 680h2M384 681h2M424 681h2M420 682h2M361 683h2M388 684h2M340 685h2M310 686h2M384 686h2M411 686h2M419 686h2M351 687h2M524 687h2M540 687h2M681 687h2M339 688h2M389 688h2M518 688h2M543 688h2M619 688h2M346 689h2M385 689h2M386 689h2M451 689h2M472 689h2M493 689h2M304 690h2M420 690h2M563 690h2M361 692h2M398 692h2M417 692h2M366 693h2M389 693h2M401 693h2M369 694h2M401 694h2M342 696h2M373 696h2M402 696h2M573 696h2M414 697h2M357 698h2M366 699h2M543 699h2M342 700h2M416 700h2M504 700h2M375 701h2M395 701h2M318 702h2M366 702h2M356 703h2M600 703h2M398 704h2M399 704h2M455 704h2M571 704h2M352 705h2M373 705h2M379 705h2M385 705h2M325 706h2M337 706h2M362 706h2M383 706h2M458 706h2M474 706h2M486 707h2M366 708h2M369 709h2M321 710h2M347 710h2M425 710h2M431 710h2M442 710h2M376 711h2M383 711h2M371 712h2M358 716h2M291 718h2M322 719h2M363 719h2M488 719h2M494 719h2M359 720h2M362 720h2M366 720h2M373 720h2M332 721h2M753 721h2M314 724h2M374 724h2M289 725h2M300 725h2M432 725h2M305 726h2M387 726h2M569 726h2M504 727h2M310 728h2M335 728h2M354 728h2M415 728h2M536 728h2M430 729h2M320 731h2M712 731h2M341 732h2M296 733h2M447 733h2M336 734h2M346 734h2M441 735h2M477 736h2M349 738h2M355 738h2M295 739h2M741 739h2M305 741h2M623 741h2M300 745h2M301 745h2M327 745h2M370 745h2M354 747h2M655 747h2M290 749h2M421 750h2M388 753h2M701 753h2M299 755h2M483 755h2M738 755h2M551 756h2M529 757h2M329 758h2M531 758h2M314 759h2M435 759h2M464 759h2M513 759h2M313 760h2M347 761h2M418 763h2M355 764h2M379 764h2M756 764h2M304 766h2M361 767h2M699 768h2M375 769h2M462 769h2M341 773h2M342 775h2M363 775h2M341 778h2M683 778h2M449 779h2M541 780h2M457 784h2M642 784h2M434 791h2M341 793h2M353 793h2M627 795h2M433 796h2M488 803h2M329 804h2M495 809h2M367 811h2M400 815h2M380 825h2M360 829h2M440 831h2M373 834h2M457 849h2M482 852h2M312 854h2M305 858h2M345 859h2M295 864h2M316 868h2M493 877h2"/><path stroke="#8a6f70" d="M653 427h2M616 433h2M576 438h2M696 456h2M704 456h2M503 458h2M624 462h2M621 463h2M635 471h2M702 478h2M649 488h2M473 490h2M596 493h2M631 505h2M573 511h2M536 531h2M541 537h2M568 545h2M638 546h2M563 552h2M501 553h2"/><path stroke="#aca695" d="M780 250h2M745 256h2M880 259h2M768 260h2M878 262h2M729 267h2M714 274h2M743 277h2M749 277h2M858 277h2M747 279h2M879 279h2M881 279h2M921 279h2M815 280h2M904 280h2M972 281h2M877 282h2M699 283h2M962 286h2M669 287h2M668 288h2M680 290h2M902 291h2M936 292h2M975 293h2M828 296h2M698 297h2M956 297h2M975 297h2M956 300h2M810 301h2M847 301h2M629 302h2M674 302h2M883 302h2M899 302h2M711 303h2M792 304h2M747 305h2M805 305h2M891 305h2M928 305h2M944 305h2M649 306h2M629 307h2M806 307h2M636 308h2M644 308h2M832 308h2M914 308h2M661 309h2M664 309h2M877 309h2M914 309h2M922 309h2M680 310h2M764 310h2M865 310h2M926 310h2M991 311h2M778 312h2M856 315h2M605 316h2M823 317h2M868 317h2M901 317h2M916 317h2M597 318h2M747 319h2M879 319h2M921 319h2M648 320h2M674 320h2M854 320h2M882 320h2M899 320h2M1003 322h2M679 323h2M729 323h2M899 323h2M663 325h2M684 325h2M867 326h2M898 327h2M906 327h2M1056 327h2M750 328h2M798 328h2M739 329h2M731 330h2M857 330h2M935 330h2M887 331h2M918 331h2M825 335h2M903 335h2M1177 335h2M561 336h2M696 336h2M772 336h2M630 337h2M627 338h2M884 338h2M802 339h2M823 339h2M824 341h2M928 341h2M590 343h2M685 344h2M783 344h2M580 347h2M772 347h2M797 347h2M1028 347h2M804 350h2M845 351h2M781 354h2M833 354h2M595 355h2M644 355h2M1006 356h2M612 357h2M820 357h2M799 358h2M660 359h2M725 359h2M699 360h2M804 361h2M554 362h2M1045 362h2M775 363h2M784 363h2M845 363h2M690 365h2M567 367h2M483 369h2M823 370h2M657 373h2M778 373h2M814 373h2M836 373h2M703 374h2M988 374h2M968 376h2M799 377h2M641 378h2M856 378h2M636 379h2M814 379h2M817 379h2M840 379h2M449 380h2M844 380h2M504 381h2M888 381h2M733 382h2M1242 382h2M487 384h2M489 385h2M794 385h2M978 385h2M664 387h2M900 387h2M1034 387h2M478 389h2M636 390h2M784 390h2M837 390h2M1103 390h2M1234 390h2M774 392h2M855 392h2M923 392h2M981 392h2M705 393h2M809 393h2M1024 393h2M776 394h2M833 394h2M1125 394h2M794 395h2M745 398h2M767 399h2M406 400h2M439 400h2M618 400h2M673 400h2M614 403h2M1250 403h2M765 404h2M789 404h2M1023 404h2M1153 404h2M653 406h2M654 406h2M479 407h2M852 407h2M690 409h2M1057 411h2M465 412h2M871 412h2M980 412h2M651 414h2M797 414h2M972 416h2M484 417h2M660 417h2M781 417h2M787 417h2M837 417h2M1050 417h2M724 418h2M664 419h2M1002 419h2M746 421h2M854 421h2M1179 421h2M738 424h2M879 425h2M1041 425h2M565 426h2M839 426h2M640 427h2M788 428h2M869 428h2M860 429h2M383 430h2M669 430h2M691 431h2M672 432h2M857 432h2M861 432h2M686 433h2M826 433h2M1185 434h2M881 435h2M378 436h2M682 436h2M673 437h2M743 437h2M765 437h2M581 439h2M596 439h2M748 440h2M755 441h2M618 442h2M850 443h2M553 444h2M768 444h2M1082 444h2M671 445h2M1063 445h2M1270 446h2M400 447h2M465 447h2M580 447h2M728 447h2M1137 447h2M521 448h2M604 448h2M464 449h2M598 450h2M362 451h2M378 451h2M1109 451h2M677 452h2M464 453h2M702 453h2M644 455h2M708 455h2M1084 456h2M1266 457h2M328 458h2M520 458h2M1026 458h2M510 460h2M1292 460h2M627 461h2M1313 461h2M608 462h2M727 462h2M533 464h2M887 466h2M1278 466h2M522 467h2M647 467h2M1010 467h2M406 468h2M1106 468h2M922 469h2M1106 469h2M1135 469h2M396 470h2M1271 470h2M617 471h2M419 472h2M720 472h2M739 472h2M687 476h2M1046 476h2M613 477h2M789 479h2M1079 480h2M989 481h2M518 482h2M871 483h2M441 486h2M1297 487h2M1211 488h2M321 493h2M620 494h2M803 494h2M567 497h2M619 497h2M407 500h2M625 500h2M801 501h2M550 503h2M806 505h2M406 507h2M641 508h2M574 509h2M663 511h2M534 514h2M738 517h2M1122 517h2M556 518h2M616 521h2M533 524h2M610 524h2M785 524h2M355 527h2M625 529h2M1084 530h2M1232 533h2M638 534h2M612 535h2M1343 538h2M637 540h2M966 543h2M538 544h2M615 545h2M811 545h2M1312 545h2M564 547h2M757 547h2M601 548h2M995 549h2M568 550h2M832 550h2M1201 551h2M698 555h2M690 563h2M621 565h2M606 569h2M663 570h2M513 573h2M618 573h2M1354 576h2M489 578h2M1255 578h2M512 579h2M500 589h2M765 592h2M618 601h2M724 602h2M487 603h2M712 604h2M746 606h2M522 608h2M452 611h2M430 613h2M436 617h2M370 618h2M511 621h2M689 624h2M504 625h2M503 627h2M483 629h2M561 631h2M529 636h2M529 638h2M338 644h2M685 648h2M315 651h2M350 661h2M313 662h2M404 663h2M451 664h2M542 665h2M407 684h2M479 687h2M407 702h2M352 710h2M528 710h2M565 712h2M371 714h2M455 717h2M351 718h2M355 719h2M356 719h2M469 727h2M542 734h2M328 745h2M289 747h2M480 749h2M547 753h2M446 756h2M378 758h2M314 760h2M411 766h2M422 767h2M411 768h2M639 770h2M628 777h2M473 784h2M466 795h2M532 796h2M528 822h2M484 840h2M348 855h2M432 864h2"/><path stroke="#9db0c2" d="M789 262h2M832 269h2M951 284h2M747 285h2M814 290h2M959 290h2M956 291h2M762 293h2M770 293h2M784 296h2M804 296h2M830 297h2M935 299h2M652 301h2M775 301h2M957 304h2M865 307h2M885 308h2M700 310h2M787 310h2M906 313h2M930 315h2M992 315h2M663 316h2M675 316h2M865 318h2M820 319h2M881 319h2M650 321h2M911 321h2M774 322h2M863 322h2M860 324h2M774 325h2M895 327h2M897 327h2M755 328h2M928 329h2M697 333h2M916 333h2M577 334h2M610 335h2M861 340h2M598 341h2M949 341h2M817 342h2M925 344h2M992 344h2M886 346h2M546 349h2M727 349h2M860 353h2M936 353h2M876 358h2M549 359h2M581 359h2M826 361h2M563 362h2M833 362h2M490 366h2M563 367h2M554 371h2M849 372h2M688 376h2M802 376h2M909 377h2M466 379h2M485 379h2M818 379h2M827 380h2M796 381h2M796 383h2M732 384h2M696 385h2M766 389h2M983 389h2M630 390h2M798 391h2M782 393h2M786 394h2M1212 394h2M1188 396h2M682 398h2M500 400h2M873 400h2M829 401h2M805 402h2M769 404h2M788 404h2M572 405h2M1059 406h2M816 407h2M793 409h2M769 410h2M1011 412h2M589 413h2M957 416h2M651 419h2M854 422h2M1139 422h2M624 423h2M422 424h2M353 426h2M1043 426h2M363 427h2M348 429h2M704 430h2M455 431h2M999 432h2M693 433h2M415 434h2M760 435h2M808 436h2M734 438h2M742 438h2M674 439h2M731 440h2M388 443h2M406 444h2M525 444h2M649 446h2M555 448h2M573 450h2M694 451h2M709 451h2M537 454h2M832 458h2M685 459h2M686 460h2M762 460h2M720 466h2M791 469h2M378 470h2M1001 471h2M645 472h2M709 472h2M625 474h2M1321 477h2M1000 478h2M305 479h2M920 479h2M1054 481h2M384 482h2M573 482h2M634 483h2M729 483h2M963 484h2M681 485h2M512 487h2M580 492h2M575 495h2M575 498h2M414 499h2M779 501h2M570 503h2M659 505h2M498 507h2M1319 507h2M1350 507h2M415 509h2M444 509h2M609 510h2M886 510h2M810 512h2M864 516h2M543 517h2M667 517h2M381 519h2M739 522h2M613 523h2M661 526h2M1260 526h2M597 527h2M892 527h2M601 530h2M904 532h2M607 538h2M566 539h2M800 540h2M967 540h2M514 541h2M555 544h2M574 547h2M586 549h2M1328 549h2M737 552h2M586 559h2M908 559h2M620 563h2M546 565h2M778 568h2M525 570h2M566 572h2M532 573h2M462 574h2M448 576h2M625 577h2M751 579h2M500 583h2M612 589h2M455 590h2M595 592h2M773 595h2M541 597h2M422 604h2M790 604h2M476 612h2M651 616h2M561 618h2M523 630h2M449 632h2M455 632h2M511 636h2M349 640h2M475 641h2M440 642h2M648 643h2M437 646h2M493 651h2M406 657h2M435 665h2M386 667h2M743 668h2M380 669h2M417 670h2M433 670h2M422 671h2M385 673h2M416 674h2M356 676h2M295 677h2M436 679h2M360 683h2M679 685h2M410 686h2M456 690h2M456 692h2M482 693h2M396 697h2M511 699h2M368 702h2M363 703h2M445 703h2M361 707h2M469 709h2M403 710h2M394 712h2M425 712h2M292 714h2M327 715h2M468 716h2M778 718h2M745 722h2M303 724h2M307 724h2M297 733h2M463 742h2M497 744h2M327 747h2M356 747h2M392 757h2M338 775h2M458 775h2M385 779h2M611 791h2M359 792h2M427 804h2M358 820h2M376 828h2M539 830h2"/><path stroke="#c9c4b4" d="M792 237h2M792 240h2M788 241h2M784 244h2M784 245h2M787 252h2M763 259h2M753 266h2M790 268h2M777 270h2M931 273h2M739 274h2M891 274h2M695 276h2M873 276h2M943 280h2M827 284h2M876 286h2M764 288h2M686 289h2M777 289h2M745 290h2M831 290h2M754 291h2M844 291h2M868 293h2M946 293h2M896 297h2M760 298h2M950 298h2M862 299h2M879 299h2M968 299h2M681 300h2M845 301h2M912 302h2M668 303h2M894 303h2M751 305h2M958 305h2M990 305h2M794 307h2M875 307h2M906 307h2M637 308h2M772 308h2M883 308h2M973 308h2M908 309h2M916 309h2M884 310h2M888 311h2M906 312h2M759 313h2M773 313h2M870 313h2M920 315h2M899 316h2M905 316h2M909 316h2M787 317h2M755 319h2M774 319h2M744 320h2M881 320h2M868 321h2M870 321h2M880 322h2M860 323h2M870 323h2M1007 323h2M943 325h2M1000 325h2M662 327h2M896 327h2M664 328h2M701 328h2M703 328h2M716 328h2M878 328h2M914 329h2M787 331h2M876 331h2M832 332h2M963 332h2M722 335h2M866 335h2M859 336h2M904 337h2M559 338h2M811 338h2M812 338h2M815 338h2M676 339h2M740 339h2M712 340h2M770 341h2M835 341h2M857 341h2M867 342h2M891 342h2M574 344h2M636 344h2M831 344h2M1049 344h2M1002 345h2M923 347h2M616 349h2M825 349h2M850 349h2M899 349h2M649 351h2M751 352h2M976 352h2M582 353h2M834 353h2M835 354h2M924 354h2M1010 354h2M1014 354h2M855 355h2M1182 356h2M1049 357h2M553 358h2M791 358h2M864 358h2M1083 358h2M816 360h2M890 360h2M854 362h2M758 363h2M892 363h2M689 364h2M862 365h2M868 366h2M844 370h2M606 371h2M1185 372h2M784 373h2M819 374h2M779 375h2M1127 375h2M827 378h2M805 379h2M680 380h2M853 380h2M1174 380h2M797 382h2M854 382h2M1003 384h2M553 385h2M761 385h2M806 385h2M711 386h2M831 386h2M830 387h2M800 388h2M814 389h2M865 389h2M924 389h2M586 391h2M745 392h2M791 392h2M836 392h2M1137 392h2M625 393h2M505 394h2M541 394h2M830 394h2M450 395h2M618 395h2M835 396h2M744 397h2M641 398h2M1171 401h2M923 402h2M596 403h2M694 404h2M498 405h2M595 406h2M839 406h2M817 407h2M906 407h2M1017 407h2M503 408h2M628 410h2M935 411h2M705 412h2M790 412h2M916 412h2M453 413h2M623 413h2M665 413h2M848 413h2M729 415h2M752 417h2M852 417h2M1301 417h2M757 419h2M653 421h2M837 421h2M1218 421h2M643 423h2M1253 424h2M1201 425h2M865 426h2M999 426h2M912 427h2M689 429h2M761 429h2M619 430h2M716 432h2M631 434h2M743 435h2M744 435h2M1004 435h2M755 436h2M850 436h2M1254 437h2M610 438h2M641 438h2M796 438h2M1269 439h2M741 440h2M744 442h2M760 442h2M662 443h2M571 444h2M849 444h2M1068 445h2M300 446h2M744 446h2M523 447h2M716 447h2M1321 447h2M521 448h2M523 448h2M733 450h2M866 450h2M1082 450h2M505 451h2M545 451h2M681 451h2M705 451h2M1114 452h2M1296 452h2M727 453h2M804 453h2M1112 453h2M1167 453h2M648 455h2M918 455h2M1041 455h2M1270 457h2M349 458h2M711 458h2M972 458h2M353 459h2M355 459h2M965 459h2M551 460h2M729 460h2M913 460h2M742 462h2M627 463h2M361 467h2M362 467h2M480 468h2M844 468h2M1258 468h2M561 471h2M766 471h2M721 473h2M502 474h2M555 474h2M908 474h2M905 475h2M1097 476h2M1193 476h2M863 479h2M529 483h2M720 486h2M973 486h2M659 489h2M429 491h2M1295 491h2M1042 493h2M1222 493h2M426 494h2M1207 498h2M952 499h2M657 504h2M985 506h2M564 507h2M624 508h2M1299 508h2M791 509h2M1081 509h2M1194 509h2M385 511h2M578 511h2M1192 511h2M643 512h2M652 515h2M627 518h2M646 519h2M1335 519h2M580 520h2M622 520h2M991 522h2M374 523h2M617 526h2M627 527h2M1318 530h2M610 532h2M1231 532h2M583 536h2M682 539h2M585 543h2M984 543h2M1213 545h2M288 553h2M1173 554h2M970 555h2M303 558h2M522 560h2M464 562h2M574 564h2M578 564h2M734 566h2M560 570h2M618 570h2M1179 577h2M1307 581h2M762 582h2M454 584h2M512 584h2M873 589h2M769 595h2M625 600h2M574 601h2M524 611h2M508 612h2M303 628h2M723 628h2M494 633h2M497 633h2M739 633h2M378 637h2M446 639h2M538 644h2M334 646h2M435 650h2M344 651h2M464 653h2M640 660h2M432 666h2M574 668h2M430 672h2M595 673h2M847 680h2M647 682h2M799 682h2M369 686h2M577 686h2M642 686h2M375 688h2M386 704h2M495 705h2M374 709h2M775 713h2M457 715h2M562 722h2M382 724h2M394 725h2M314 730h2M350 737h2M445 743h2M754 746h2M298 749h2M533 761h2M711 764h2M513 768h2M344 775h2M574 795h2M472 869h2"/><path stroke="#928d7e" d="M825 233h2M823 249h2M747 257h2M789 259h2M784 265h2M752 268h2M736 269h2M765 269h2M869 269h2M936 269h2M740 271h2M939 271h2M893 276h2M744 279h2M859 279h2M738 280h2M891 280h2M735 283h2M814 283h2M954 284h2M756 285h2M871 286h2M951 286h2M765 288h2M977 290h2M858 292h2M827 293h2M750 294h2M900 294h2M872 295h2M837 296h2M860 296h2M877 297h2M905 297h2M936 298h2M944 301h2M858 302h2M842 303h2M889 303h2M634 304h2M817 304h2M894 304h2M906 304h2M633 305h2M636 305h2M921 305h2M832 306h2M872 306h2M872 307h2M1018 308h2M879 309h2M855 310h2M912 310h2M863 311h2M893 311h2M623 312h2M784 312h2M652 313h2M622 314h2M1114 314h2M925 315h2M1001 315h2M892 316h2M905 316h2M729 319h2M801 319h2M886 319h2M834 320h2M585 321h2M606 321h2M711 321h2M709 322h2M755 322h2M890 322h2M594 323h2M872 323h2M910 323h2M915 323h2M940 323h2M646 325h2M610 326h2M613 326h2M787 326h2M896 326h2M745 327h2M775 327h2M789 328h2M894 328h2M667 329h2M716 330h2M568 331h2M902 331h2M902 331h2M591 332h2M892 332h2M903 332h2M934 332h2M790 333h2M827 335h2M850 335h2M913 336h2M559 337h2M753 337h2M906 337h2M693 339h2M784 339h2M866 339h2M867 339h2M1019 339h2M717 340h2M896 340h2M637 341h2M893 341h2M753 343h2M799 343h2M919 343h2M862 344h2M866 344h2M944 344h2M1112 344h2M651 345h2M679 345h2M858 345h2M871 345h2M905 345h2M876 346h2M947 346h2M593 347h2M690 347h2M834 347h2M571 348h2M834 348h2M1078 348h2M786 349h2M1051 349h2M528 350h2M875 350h2M878 350h2M691 351h2M1179 351h2M824 354h2M829 354h2M569 355h2M699 355h2M843 358h2M609 359h2M878 359h2M922 360h2M853 361h2M713 362h2M804 362h2M840 362h2M602 364h2M817 364h2M990 364h2M816 365h2M824 365h2M831 365h2M1010 368h2M955 369h2M887 370h2M1092 370h2M581 371h2M824 371h2M870 372h2M563 373h2M770 374h2M823 374h2M854 374h2M585 375h2M835 375h2M836 375h2M803 376h2M657 377h2M953 380h2M657 381h2M798 381h2M640 382h2M808 382h2M675 383h2M857 383h2M1010 383h2M628 384h2M732 384h2M886 384h2M1073 384h2M1145 384h2M862 385h2M1101 385h2M533 386h2M732 386h2M835 387h2M849 387h2M1074 387h2M801 388h2M861 388h2M804 389h2M1325 389h2M619 390h2M811 390h2M426 392h2M641 392h2M816 392h2M903 392h2M630 393h2M782 393h2M964 393h2M902 394h2M513 395h2M747 395h2M786 395h2M1019 397h2M496 398h2M704 398h2M867 398h2M967 398h2M723 400h2M828 400h2M854 401h2M765 402h2M417 403h2M668 403h2M991 403h2M422 405h2M653 405h2M700 405h2M883 405h2M621 406h2M681 406h2M1032 406h2M754 407h2M408 408h2M1062 409h2M1065 409h2M639 410h2M779 410h2M652 411h2M771 411h2M1239 411h2M642 412h2M979 412h2M1143 412h2M638 413h2M657 414h2M944 414h2M654 415h2M750 416h2M807 416h2M1147 416h2M785 417h2M858 419h2M1227 419h2M654 420h2M767 420h2M808 420h2M562 422h2M1119 422h2M808 423h2M856 423h2M848 424h2M1021 424h2M1093 424h2M680 425h2M869 425h2M1061 425h2M753 426h2M861 426h2M786 427h2M771 428h2M769 429h2M742 430h2M1148 430h2M775 431h2M1077 432h2M741 433h2M848 433h2M1018 435h2M345 436h2M647 436h2M760 436h2M687 437h2M756 439h2M875 439h2M768 440h2M526 441h2M929 443h2M762 444h2M806 446h2M745 447h2M870 447h2M701 449h2M1265 450h2M696 451h2M726 453h2M735 455h2M496 456h2M729 457h2M1107 459h2M728 460h2M835 461h2M713 462h2M1144 462h2M719 463h2M1011 463h2M1254 463h2M1192 464h2M941 466h2M640 468h2M1269 468h2M549 469h2M708 469h2M717 472h2M721 472h2M346 473h2M634 473h2M680 474h2M637 478h2M719 479h2M839 481h2M999 481h2M744 484h2M1122 484h2M432 485h2M761 485h2M666 488h2M959 488h2M1215 488h2M901 489h2M1206 490h2M667 491h2M1195 491h2M802 493h2M1203 494h2M753 495h2M583 497h2M661 499h2M1266 499h2M547 501h2M668 501h2M581 503h2M588 503h2M637 503h2M1298 503h2M566 506h2M610 511h2M674 512h2M1224 512h2M385 515h2M648 516h2M390 517h2M696 521h2M576 522h2M1241 523h2M557 525h2M1115 525h2M642 527h2M773 527h2M1217 527h2M980 530h2M987 530h2M348 536h2M616 538h2M616 539h2M604 541h2M917 543h2M531 544h2M602 544h2M646 545h2M639 547h2M578 548h2M548 551h2M543 552h2M624 555h2M1282 555h2M1319 562h2M596 563h2M555 564h2M313 565h2M547 565h2M513 568h2M652 569h2M557 574h2M936 575h2M317 582h2M543 584h2M796 588h2M509 589h2M481 591h2M602 591h2M731 595h2M500 601h2M488 602h2M498 609h2M546 610h2M305 615h2M694 616h2M511 619h2M497 620h2M691 629h2M542 636h2M437 643h2M363 646h2M480 647h2M409 648h2M343 654h2M422 656h2M517 658h2M392 659h2M303 660h2M339 672h2M470 673h2M433 674h2M578 675h2M486 677h2M297 681h2M495 681h2M288 686h2M353 688h2M501 689h2M522 690h2M371 692h2M294 694h2M346 695h2M348 697h2M378 698h2M359 699h2M348 701h2M561 702h2M344 704h2M404 704h2M429 706h2M378 709h2M401 710h2M288 711h2M495 712h2M474 714h2M325 717h2M356 718h2M466 718h2M568 720h2M390 721h2M371 722h2M295 723h2M351 723h2M478 727h2M711 727h2M405 731h2M431 736h2M543 737h2M423 738h2M363 741h2M364 741h2M295 742h2M295 744h2M290 745h2M396 747h2M330 751h2M294 752h2M439 757h2M376 760h2M504 765h2M344 779h2M431 785h2M474 786h2M308 851h2M489 876h2"/><path stroke="#424850" d="M825 235h2M855 238h2M789 240h2M807 240h2M857 246h2M825 248h2M828 251h2M758 256h2M813 262h2M918 263h2M783 266h2M866 267h2M720 270h2M714 273h2M796 273h2M881 273h2M976 275h2M904 276h2M955 276h2M1003 278h2M855 279h2M859 282h2M680 288h2M790 291h2M697 292h2M824 292h2M951 292h2M789 293h2M848 293h2M909 293h2M942 293h2M889 294h2M748 295h2M883 296h2M973 296h2M799 297h2M808 297h2M860 297h2M913 297h2M1000 297h2M800 298h2M805 298h2M904 298h2M885 300h2M917 300h2M921 300h2M914 301h2M920 302h2M998 303h2M785 304h2M906 304h2M814 305h2M838 305h2M852 305h2M921 305h2M681 306h2M1017 306h2M763 307h2M792 307h2M842 308h2M893 308h2M984 308h2M633 309h2M894 309h2M719 311h2M902 311h2M895 312h2M706 313h2M889 313h2M913 313h2M646 314h2M677 314h2M845 314h2M820 317h2M974 317h2M602 318h2M715 318h2M734 318h2M764 318h2M662 319h2M763 319h2M912 319h2M938 319h2M965 319h2M604 320h2M625 321h2M976 321h2M781 322h2M848 322h2M886 322h2M848 323h2M589 324h2M807 324h2M809 324h2M814 324h2M895 324h2M574 325h2M865 325h2M871 326h2M577 327h2M884 327h2M606 328h2M743 328h2M578 329h2M622 329h2M753 329h2M909 329h2M755 330h2M1158 331h2M732 333h2M887 333h2M753 334h2M905 334h2M637 336h2M686 337h2M857 337h2M608 338h2M774 338h2M792 338h2M857 338h2M712 340h2M777 340h2M617 341h2M953 341h2M793 342h2M836 342h2M912 342h2M882 344h2M991 344h2M832 345h2M988 345h2M706 346h2M654 347h2M719 347h2M885 347h2M819 348h2M842 348h2M1046 349h2M634 352h2M518 353h2M761 353h2M839 353h2M872 353h2M551 354h2M679 354h2M551 355h2M769 355h2M827 355h2M923 356h2M685 357h2M771 357h2M821 357h2M566 359h2M665 359h2M865 359h2M676 360h2M702 360h2M772 360h2M590 361h2M899 361h2M594 362h2M731 362h2M767 364h2M995 364h2M813 365h2M827 365h2M1025 365h2M656 368h2M795 368h2M785 369h2M863 369h2M979 369h2M674 370h2M838 371h2M841 371h2M668 372h2M814 372h2M744 373h2M786 373h2M848 374h2M857 374h2M505 376h2M744 376h2M909 376h2M871 377h2M938 377h2M810 379h2M916 379h2M833 380h2M1053 380h2M475 381h2M591 381h2M741 381h2M832 381h2M881 381h2M923 381h2M753 382h2M802 382h2M809 382h2M814 382h2M777 383h2M909 383h2M994 383h2M459 384h2M479 384h2M732 387h2M734 388h2M844 388h2M460 389h2M584 389h2M794 389h2M661 390h2M683 390h2M775 390h2M795 390h2M835 390h2M682 391h2M701 391h2M664 392h2M724 392h2M850 392h2M426 393h2M637 393h2M647 393h2M723 393h2M782 393h2M900 393h2M824 394h2M886 394h2M622 395h2M628 395h2M639 395h2M1034 395h2M468 396h2M622 396h2M646 396h2M501 397h2M585 397h2M697 397h2M788 397h2M846 397h2M755 398h2M810 398h2M1220 399h2M483 400h2M571 400h2M623 400h2M665 400h2M803 400h2M688 402h2M965 402h2M650 403h2M787 403h2M1096 403h2M565 404h2M822 404h2M1026 404h2M546 405h2M653 405h2M793 405h2M1209 405h2M747 406h2M870 406h2M678 407h2M763 407h2M795 407h2M1120 407h2M684 409h2M772 409h2M653 410h2M782 410h2M795 410h2M641 412h2M792 412h2M770 413h2M1164 413h2M472 414h2M616 414h2M779 414h2M365 415h2M634 416h2M771 416h2M575 417h2M579 417h2M1253 417h2M387 418h2M831 418h2M649 420h2M834 420h2M651 421h2M745 421h2M791 421h2M851 422h2M871 422h2M877 422h2M431 423h2M381 424h2M637 424h2M1064 424h2M411 425h2M451 425h2M662 425h2M750 425h2M1067 425h2M798 426h2M442 427h2M504 427h2M627 427h2M796 427h2M663 428h2M727 429h2M1287 429h2M445 430h2M596 430h2M776 430h2M354 431h2M623 431h2M670 431h2M739 431h2M750 431h2M682 432h2M782 432h2M738 433h2M975 433h2M641 434h2M668 434h2M767 434h2M851 434h2M896 434h2M1003 434h2M478 435h2M924 435h2M727 436h2M751 436h2M755 436h2M755 436h2M353 439h2M369 439h2M506 439h2M701 439h2M757 439h2M950 439h2M614 440h2M671 440h2M752 440h2M747 441h2M911 441h2M1079 441h2M350 442h2M863 442h2M911 442h2M1099 442h2M656 443h2M812 443h2M579 444h2M600 444h2M1108 444h2M374 446h2M672 446h2M953 446h2M1092 446h2M731 447h2M1009 447h2M1032 447h2M473 448h2M547 448h2M701 448h2M1209 448h2M512 449h2M569 449h2M419 450h2M566 450h2M628 450h2M701 450h2M657 451h2M759 451h2M614 452h2M702 452h2M1030 452h2M1122 452h2M380 453h2M661 453h2M704 453h2M292 454h2M551 454h2M605 454h2M714 454h2M607 455h2M671 455h2M713 455h2M719 457h2M504 458h2M680 458h2M787 458h2M988 458h2M1051 458h2M519 460h2M733 460h2M322 461h2M347 461h2M715 461h2M507 462h2M699 462h2M599 464h2M639 464h2M675 464h2M695 464h2M715 464h2M783 464h2M336 465h2M690 465h2M733 465h2M1142 466h2M691 467h2M694 467h2M717 467h2M742 467h2M712 468h2M568 469h2M627 469h2M1343 470h2M501 471h2M614 471h2M648 471h2M704 472h2M503 473h2M616 473h2M805 474h2M695 476h2M705 476h2M853 476h2M1316 477h2M700 479h2M894 479h2M1229 479h2M445 480h2M529 480h2M699 480h2M835 480h2M869 480h2M976 480h2M448 481h2M459 481h2M787 482h2M1004 482h2M506 483h2M1260 484h2M846 485h2M1250 485h2M600 486h2M798 486h2M441 488h2M644 488h2M731 489h2M844 489h2M439 490h2M675 491h2M686 491h2M426 492h2M600 492h2M666 493h2M653 494h2M1292 494h2M667 495h2M662 496h2M665 496h2M1103 497h2M623 500h2M676 502h2M1007 502h2M1226 502h2M672 503h2M402 504h2M640 504h2M796 504h2M789 506h2M631 507h2M641 508h2M661 508h2M393 509h2M394 509h2M610 509h2M623 509h2M625 509h2M559 510h2M804 510h2M982 510h2M615 511h2M838 511h2M845 511h2M1278 512h2M611 513h2M1209 513h2M539 514h2M782 514h2M601 515h2M817 516h2M446 517h2M607 517h2M603 518h2M1206 518h2M591 521h2M603 521h2M1101 521h2M367 522h2M599 524h2M614 524h2M802 524h2M870 524h2M607 525h2M698 526h2M593 528h2M631 528h2M947 529h2M529 530h2M936 530h2M347 531h2M351 531h2M618 531h2M623 531h2M629 531h2M526 532h2M681 532h2M587 533h2M647 533h2M684 533h2M561 534h2M590 535h2M527 536h2M323 537h2M532 538h2M820 538h2M550 540h2M612 541h2M587 542h2M722 543h2M619 544h2M624 544h2M578 545h2M923 545h2M1029 545h2M495 547h2M582 547h2M628 549h2M314 550h2M644 551h2M595 552h2M301 553h2M575 553h2M666 554h2M600 555h2M726 555h2M742 555h2M534 556h2M622 557h2M318 560h2M687 563h2M606 564h2M512 565h2M496 566h2M518 567h2M504 570h2M550 570h2M593 570h2M744 570h2M513 571h2M534 571h2M622 571h2M636 572h2M558 573h2M656 573h2M692 574h2M639 576h2M473 577h2M699 580h2M781 580h2M583 581h2M747 582h2M588 583h2M608 583h2M429 586h2M517 588h2M727 588h2M511 589h2M550 589h2M494 590h2M520 590h2M1251 591h2M583 592h2M536 594h2M750 597h2M509 598h2M700 598h2M628 601h2M494 602h2M450 603h2M807 604h2M796 606h2M344 607h2M791 607h2M854 607h2M741 608h2M754 611h2M618 612h2M588 613h2M521 614h2M620 614h2M731 615h2M796 616h2M482 617h2M887 617h2M587 618h2M625 618h2M466 619h2M417 623h2M513 623h2M927 623h2M549 628h2M517 630h2M450 637h2M523 638h2M440 639h2M707 639h2M614 640h2M697 641h2M714 641h2M460 642h2M482 642h2M628 642h2M427 643h2M429 643h2M475 644h2M729 644h2M427 646h2M572 648h2M564 649h2M444 650h2M560 650h2M582 650h2M609 651h2M631 651h2M405 652h2M480 653h2M403 655h2M423 657h2M410 658h2M428 658h2M451 658h2M396 660h2M398 661h2M459 663h2M319 664h2M374 664h2M411 667h2M361 668h2M505 668h2M431 669h2M444 669h2M416 671h2M419 671h2M338 672h2M438 672h2M448 672h2M388 673h2M529 673h2M395 674h2M437 674h2M415 675h2M407 676h2M645 676h2M361 677h2M400 677h2M483 678h2M393 679h2M425 679h2M460 679h2M422 680h2M360 681h2M420 681h2M373 682h2M426 682h2M574 686h2M766 686h2M502 687h2M305 688h2M407 688h2M427 689h2M396 690h2M363 691h2M407 691h2M364 692h2M446 692h2M485 693h2M360 695h2M376 695h2M412 696h2M340 697h2M425 697h2M357 699h2M389 699h2M394 703h2M377 705h2M360 707h2M324 709h2M391 709h2M432 709h2M303 710h2M434 710h2M640 710h2M351 711h2M415 711h2M508 712h2M330 714h2M359 714h2M788 715h2M323 717h2M347 717h2M432 717h2M705 717h2M575 719h2M373 720h2M382 720h2M386 720h2M405 720h2M423 721h2M465 721h2M316 722h2M375 722h2M494 722h2M412 723h2M411 724h2M485 724h2M368 725h2M474 726h2M573 726h2M318 727h2M373 728h2M305 730h2M312 731h2M402 731h2M434 731h2M435 733h2M336 734h2M305 736h2M301 737h2M571 738h2M426 739h2M471 739h2M368 740h2M544 740h2M377 743h2M288 747h2M355 748h2M364 748h2M335 750h2M366 750h2M326 751h2M484 753h2M561 753h2M457 754h2M295 755h2M358 757h2M462 762h2M683 765h2M418 766h2M603 767h2M378 772h2M451 772h2M576 778h2M600 783h2M415 784h2M495 794h2M309 798h2M606 798h2M486 813h2M500 817h2M388 820h2M504 822h2M394 825h2M308 826h2M531 827h2M331 828h2M641 828h2M455 830h2M450 834h2M543 836h2M360 838h2M560 841h2M349 842h2M484 844h2M591 852h2M324 863h2M340 868h2"/><path stroke="#67645c" d="M813 234h2M794 239h2M828 242h2M823 248h2M756 249h2M875 249h2M824 250h2M754 252h2M847 260h2M802 261h2M764 262h2M771 262h2M786 264h2M843 266h2M725 269h2M873 274h2M941 274h2M727 275h2M727 278h2M972 278h2M751 283h2M912 284h2M897 285h2M950 285h2M666 286h2M765 286h2M896 287h2M853 288h2M903 289h2M939 290h2M963 290h2M705 293h2M836 293h2M858 293h2M856 294h2M958 294h2M883 295h2M898 297h2M899 297h2M668 298h2M941 298h2M645 299h2M779 299h2M822 299h2M958 299h2M863 300h2M903 300h2M864 301h2M913 301h2M674 302h2M686 302h2M898 302h2M914 302h2M733 303h2M869 303h2M905 303h2M905 303h2M931 303h2M742 304h2M882 304h2M673 305h2M686 305h2M878 305h2M934 305h2M830 306h2M852 306h2M860 306h2M966 306h2M653 307h2M919 307h2M762 308h2M837 308h2M937 308h2M758 309h2M665 310h2M924 310h2M719 311h2M900 311h2M914 311h2M644 312h2M712 312h2M646 313h2M827 313h2M892 313h2M1019 313h2M762 314h2M782 314h2M782 314h2M871 314h2M865 315h2M872 315h2M916 317h2M918 317h2M635 318h2M886 318h2M891 318h2M899 318h2M750 319h2M805 320h2M1184 320h2M945 321h2M591 322h2M602 322h2M655 322h2M772 322h2M851 322h2M888 322h2M796 323h2M902 323h2M594 324h2M800 324h2M739 325h2M775 325h2M903 325h2M956 325h2M1127 325h2M764 327h2M891 327h2M906 327h2M919 327h2M772 328h2M575 329h2M699 329h2M737 329h2M883 329h2M923 329h2M630 330h2M703 330h2M1155 331h2M670 332h2M883 332h2M911 332h2M914 332h2M599 333h2M1002 334h2M910 335h2M920 335h2M691 336h2M886 336h2M937 336h2M797 339h2M544 340h2M890 340h2M899 340h2M575 341h2M633 341h2M968 341h2M999 341h2M586 342h2M633 343h2M1047 343h2M586 344h2M711 344h2M837 344h2M794 345h2M915 346h2M1087 346h2M807 348h2M1017 348h2M699 349h2M656 350h2M1075 350h2M513 352h2M627 352h2M801 352h2M895 352h2M713 353h2M771 353h2M742 354h2M899 354h2M853 355h2M1111 355h2M787 356h2M858 356h2M570 357h2M583 357h2M600 357h2M647 357h2M815 357h2M882 357h2M894 357h2M850 358h2M851 358h2M801 359h2M853 359h2M871 359h2M822 360h2M937 360h2M571 361h2M494 362h2M837 362h2M869 362h2M502 363h2M1131 363h2M723 364h2M967 364h2M505 365h2M814 365h2M871 365h2M917 365h2M1145 366h2M825 367h2M935 367h2M1033 367h2M497 368h2M560 368h2M790 368h2M867 368h2M567 369h2M589 370h2M863 370h2M576 371h2M782 371h2M865 371h2M509 372h2M827 372h2M668 373h2M679 373h2M925 373h2M778 374h2M824 374h2M580 375h2M543 377h2M905 378h2M853 379h2M822 380h2M969 380h2M491 381h2M594 381h2M689 381h2M820 381h2M884 381h2M735 382h2M794 382h2M801 383h2M939 384h2M869 385h2M988 385h2M1193 385h2M717 386h2M728 386h2M751 386h2M985 386h2M763 387h2M880 387h2M774 389h2M623 390h2M801 390h2M903 390h2M799 391h2M803 391h2M1015 391h2M479 392h2M793 392h2M631 393h2M816 393h2M833 393h2M1115 394h2M1174 394h2M655 395h2M811 395h2M791 396h2M604 397h2M604 397h2M797 398h2M978 398h2M424 400h2M721 400h2M518 402h2M636 402h2M672 402h2M721 403h2M411 404h2M696 404h2M732 404h2M815 404h2M1024 404h2M894 405h2M1151 405h2M1165 405h2M1029 406h2M593 408h2M1275 408h2M586 409h2M1003 410h2M1032 410h2M864 411h2M490 412h2M738 414h2M779 414h2M839 414h2M936 415h2M762 416h2M784 417h2M799 417h2M1247 417h2M1057 418h2M701 419h2M759 419h2M1097 419h2M1141 419h2M1152 419h2M766 420h2M862 420h2M922 422h2M957 423h2M891 424h2M1263 424h2M867 425h2M1280 428h2M852 429h2M397 430h2M457 430h2M498 431h2M820 431h2M821 431h2M637 432h2M732 432h2M763 432h2M1024 432h2M743 433h2M754 433h2M848 433h2M639 434h2M758 434h2M972 434h2M1199 434h2M644 435h2M743 436h2M910 436h2M1076 436h2M749 437h2M859 438h2M859 439h2M874 439h2M775 440h2M857 440h2M1051 440h2M1115 440h2M765 441h2M627 442h2M640 442h2M677 442h2M1229 442h2M749 443h2M1176 443h2M560 444h2M656 444h2M710 445h2M738 445h2M1116 445h2M339 446h2M1179 446h2M401 447h2M573 448h2M1085 448h2M728 449h2M760 450h2M924 450h2M376 451h2M720 451h2M889 451h2M555 452h2M853 452h2M1120 452h2M1145 452h2M287 453h2M673 454h2M720 454h2M521 455h2M711 455h2M500 456h2M777 456h2M547 457h2M777 457h2M390 458h2M532 458h2M536 458h2M1047 459h2M639 460h2M684 460h2M713 460h2M1184 461h2M1316 461h2M365 462h2M710 462h2M1024 462h2M543 463h2M505 464h2M716 465h2M1202 465h2M646 466h2M1098 466h2M627 470h2M503 471h2M711 471h2M595 472h2M965 473h2M522 474h2M655 474h2M692 475h2M465 476h2M574 476h2M484 477h2M364 478h2M691 478h2M1203 478h2M870 479h2M372 480h2M508 480h2M889 480h2M692 481h2M893 481h2M1298 482h2M641 483h2M692 483h2M1069 484h2M369 485h2M505 487h2M649 487h2M1110 488h2M1135 488h2M1295 489h2M416 493h2M607 493h2M735 494h2M361 496h2M540 496h2M1012 498h2M658 500h2M591 501h2M1242 501h2M655 502h2M772 503h2M811 503h2M853 505h2M1291 507h2M455 508h2M885 508h2M396 509h2M654 509h2M621 510h2M635 512h2M640 512h2M960 512h2M1059 512h2M743 513h2M596 514h2M655 514h2M1128 514h2M1274 514h2M557 515h2M658 516h2M650 517h2M836 517h2M1217 517h2M353 521h2M608 522h2M555 524h2M586 524h2M633 525h2M638 525h2M968 525h2M582 528h2M803 529h2M625 531h2M780 532h2M623 533h2M452 535h2M931 536h2M608 537h2M628 537h2M607 538h2M616 539h2M1280 539h2M574 542h2M614 542h2M618 543h2M933 547h2M612 548h2M556 551h2M627 551h2M498 552h2M572 552h2M602 552h2M541 554h2M598 555h2M606 558h2M632 558h2M628 560h2M556 561h2M576 563h2M631 567h2M843 568h2M592 573h2M602 576h2M448 578h2M624 580h2M499 583h2M528 583h2M489 586h2M527 586h2M726 589h2M499 590h2M655 596h2M507 599h2M549 600h2M552 600h2M731 601h2M512 602h2M704 604h2M319 608h2M500 609h2M623 609h2M735 613h2M511 616h2M604 621h2M403 622h2M737 629h2M463 637h2M439 639h2M412 644h2M442 645h2M835 648h2M706 650h2M837 651h2M409 652h2M455 659h2M426 663h2M667 664h2M410 665h2M414 665h2M504 665h2M776 666h2M408 677h2M543 677h2M415 680h2M419 680h2M295 682h2M423 682h2M509 682h2M733 682h2M747 683h2M386 686h2M359 687h2M398 687h2M392 691h2M406 691h2M562 691h2M372 692h2M395 692h2M516 694h2M624 694h2M377 695h2M398 695h2M457 697h2M611 701h2M333 702h2M370 704h2M626 711h2M752 711h2M328 712h2M630 713h2M375 721h2M412 724h2M474 725h2M296 726h2M293 727h2M294 728h2M395 731h2M289 736h2M387 744h2M302 745h2M334 745h2M300 748h2M322 749h2M365 751h2M497 753h2M486 754h2M438 755h2M536 761h2M350 762h2M354 765h2M469 765h2M396 769h2M584 772h2M382 776h2M608 785h2M318 786h2M469 791h2M424 797h2M490 817h2M482 835h2M454 851h2M476 855h2M468 860h2M363 865h2"/><path stroke="#7b776b" d="M804 238h2M791 239h2M768 244h2M790 246h2M771 249h2M779 258h2M939 260h2M953 261h2M796 262h2M796 263h2M854 265h2M959 265h2M783 266h2M773 269h2M781 269h2M747 270h2M865 271h2M872 271h2M740 278h2M862 279h2M737 280h2M961 280h2M854 281h2M893 281h2M680 283h2M712 284h2M852 284h2M741 286h2M876 286h2M665 287h2M923 287h2M969 287h2M716 288h2M956 289h2M954 292h2M873 294h2M883 295h2M895 295h2M953 295h2M675 296h2M720 296h2M956 296h2M775 297h2M646 299h2M646 299h2M660 300h2M960 300h2M673 301h2M679 301h2M707 301h2M777 301h2M932 301h2M944 301h2M691 302h2M796 302h2M863 302h2M902 303h2M878 304h2M884 304h2M902 304h2M921 304h2M902 305h2M909 305h2M869 306h2M647 307h2M653 307h2M861 307h2M888 307h2M906 308h2M645 309h2M889 309h2M957 310h2M835 312h2M943 312h2M778 313h2M895 314h2M859 315h2M604 316h2M648 316h2M891 316h2M929 316h2M749 317h2M755 318h2M913 319h2M914 319h2M709 320h2M742 320h2M871 322h2M900 322h2M592 324h2M616 324h2M878 324h2M904 324h2M595 326h2M812 326h2M829 326h2M782 327h2M807 327h2M860 327h2M806 328h2M878 328h2M913 328h2M815 329h2M884 329h2M918 329h2M812 330h2M901 331h2M1106 331h2M598 332h2M612 332h2M875 332h2M590 333h2M679 333h2M985 333h2M725 334h2M775 334h2M897 334h2M833 335h2M798 336h2M873 336h2M818 337h2M614 338h2M709 339h2M911 339h2M609 341h2M642 343h2M735 343h2M818 343h2M564 344h2M655 344h2M691 344h2M929 344h2M1025 344h2M776 345h2M884 346h2M692 348h2M897 348h2M687 349h2M1078 349h2M527 350h2M817 350h2M853 350h2M841 351h2M818 352h2M903 353h2M863 355h2M609 356h2M666 356h2M703 356h2M811 356h2M834 356h2M893 356h2M512 357h2M776 357h2M845 357h2M836 358h2M844 358h2M1041 358h2M1079 358h2M829 360h2M840 361h2M897 361h2M994 361h2M991 362h2M993 362h2M1246 362h2M538 363h2M958 363h2M500 366h2M529 366h2M815 366h2M512 367h2M520 367h2M836 367h2M834 368h2M1174 370h2M841 371h2M840 372h2M948 372h2M774 373h2M843 373h2M889 373h2M467 374h2M468 374h2M664 375h2M827 376h2M858 376h2M473 377h2M647 377h2M724 377h2M731 378h2M766 378h2M947 378h2M519 379h2M544 379h2M861 379h2M505 380h2M671 380h2M715 380h2M1121 381h2M788 384h2M817 384h2M827 384h2M779 385h2M536 387h2M842 387h2M452 388h2M862 388h2M721 389h2M759 389h2M814 389h2M1088 389h2M1121 389h2M827 390h2M1172 390h2M791 391h2M702 392h2M721 392h2M829 393h2M482 395h2M550 395h2M789 395h2M905 395h2M643 396h2M1166 397h2M809 398h2M656 400h2M828 400h2M1208 400h2M1227 401h2M805 402h2M831 402h2M1031 402h2M772 403h2M698 405h2M481 407h2M759 407h2M1015 407h2M1152 408h2M852 409h2M1009 409h2M612 410h2M765 411h2M653 412h2M674 412h2M855 412h2M1012 412h2M459 415h2M785 415h2M490 416h2M777 416h2M1226 416h2M657 418h2M551 419h2M656 419h2M769 420h2M675 421h2M684 422h2M443 423h2M729 423h2M942 425h2M775 427h2M787 427h2M848 427h2M940 427h2M557 428h2M606 428h2M853 428h2M1225 428h2M767 429h2M489 430h2M801 430h2M846 430h2M594 431h2M1177 431h2M1277 431h2M641 432h2M735 432h2M1124 432h2M632 433h2M734 434h2M778 434h2M1102 434h2M1108 434h2M790 435h2M798 439h2M348 440h2M370 441h2M1245 442h2M420 444h2M1089 444h2M1123 444h2M456 445h2M651 445h2M744 445h2M710 446h2M1153 446h2M1304 446h2M771 447h2M1086 447h2M833 448h2M515 449h2M726 450h2M821 450h2M296 451h2M701 451h2M723 451h2M725 452h2M560 453h2M712 453h2M722 453h2M858 453h2M452 454h2M817 454h2M1285 454h2M709 455h2M627 456h2M547 457h2M549 457h2M357 458h2M815 458h2M1195 458h2M491 459h2M629 459h2M640 459h2M778 459h2M1112 459h2M472 461h2M504 461h2M570 461h2M603 461h2M723 461h2M719 462h2M530 463h2M538 463h2M1268 463h2M623 464h2M455 465h2M932 465h2M519 466h2M1229 466h2M888 467h2M1342 467h2M417 468h2M567 468h2M760 468h2M692 471h2M793 473h2M808 474h2M727 475h2M908 476h2M702 477h2M767 477h2M327 478h2M829 478h2M1097 478h2M671 479h2M1140 479h2M1249 479h2M674 480h2M998 483h2M1259 485h2M517 486h2M663 487h2M702 487h2M750 488h2M783 488h2M776 489h2M1122 491h2M1229 492h2M525 493h2M514 495h2M580 497h2M658 497h2M674 499h2M559 500h2M402 502h2M999 502h2M563 503h2M867 504h2M589 505h2M784 505h2M1296 505h2M678 507h2M633 508h2M668 509h2M781 511h2M795 512h2M552 514h2M646 516h2M654 516h2M594 519h2M1332 519h2M598 520h2M658 522h2M958 522h2M602 523h2M615 525h2M630 525h2M1246 525h2M523 526h2M766 526h2M1256 526h2M980 530h2M1345 532h2M586 533h2M635 533h2M650 536h2M739 536h2M978 540h2M552 541h2M1225 541h2M548 544h2M555 544h2M607 544h2M894 545h2M541 546h2M577 546h2M319 547h2M627 547h2M571 548h2M910 548h2M789 552h2M896 552h2M600 555h2M506 557h2M621 561h2M656 561h2M1340 562h2M486 564h2M635 564h2M942 564h2M554 566h2M654 568h2M385 570h2M972 575h2M1258 577h2M470 581h2M498 583h2M537 583h2M833 585h2M530 586h2M474 587h2M577 591h2M710 597h2M495 599h2M585 602h2M721 602h2M386 603h2M439 605h2M535 605h2M511 608h2M432 610h2M449 613h2M462 616h2M415 617h2M799 617h2M308 624h2M427 625h2M319 628h2M595 630h2M472 631h2M722 634h2M740 635h2M454 641h2M417 642h2M617 642h2M579 643h2M638 643h2M684 643h2M412 645h2M445 651h2M416 652h2M386 653h2M440 655h2M411 657h2M486 661h2M464 666h2M374 667h2M301 672h2M379 680h2M434 680h2M380 681h2M517 681h2M297 682h2M468 684h2M462 686h2M557 691h2M343 696h2M423 696h2M382 702h2M428 704h2M363 705h2M471 705h2M371 707h2M366 709h2M370 709h2M371 711h2M392 711h2M385 714h2M452 717h2M313 718h2M392 718h2M483 722h2M300 723h2M452 727h2M306 737h2M313 740h2M377 743h2M399 743h2M346 748h2M485 755h2M543 756h2M494 762h2M404 775h2M530 775h2M735 776h2M467 785h2M465 789h2M479 799h2M651 803h2M396 810h2M459 810h2M403 814h2M515 826h2M515 832h2M380 834h2M318 864h2"/><path stroke="#7f91a3" d="M799 234h2M782 245h2M813 264h2M846 276h2M936 280h2M963 288h2M855 289h2M864 291h2M740 293h2M897 294h2M806 297h2M903 297h2M909 297h2M923 302h2M781 307h2M707 308h2M879 308h2M820 312h2M654 313h2M995 315h2M693 316h2M815 316h2M887 316h2M683 318h2M901 318h2M751 320h2M898 320h2M690 321h2M783 322h2M698 324h2M943 324h2M846 325h2M662 326h2M882 328h2M902 329h2M577 332h2M589 333h2M728 333h2M697 335h2M991 335h2M750 339h2M788 339h2M769 340h2M878 340h2M959 340h2M909 342h2M542 343h2M615 343h2M815 346h2M614 347h2M824 349h2M837 349h2M799 350h2M832 350h2M923 350h2M904 352h2M649 354h2M687 355h2M823 355h2M844 355h2M788 359h2M887 359h2M711 360h2M913 361h2M1005 362h2M859 363h2M524 364h2M831 364h2M826 367h2M661 368h2M841 368h2M511 370h2M858 370h2M501 372h2M669 374h2M1131 374h2M968 375h2M669 376h2M845 376h2M972 376h2M457 378h2M725 378h2M1014 378h2M1193 378h2M669 380h2M792 380h2M621 381h2M843 381h2M461 382h2M706 382h2M810 383h2M861 385h2M576 386h2M791 386h2M818 387h2M689 389h2M774 389h2M817 389h2M611 390h2M606 391h2M738 393h2M954 394h2M656 395h2M804 397h2M610 398h2M815 398h2M782 399h2M832 400h2M646 401h2M811 401h2M633 402h2M639 403h2M601 407h2M1175 407h2M587 408h2M807 408h2M773 409h2M832 409h2M445 411h2M791 411h2M481 412h2M677 413h2M536 415h2M657 415h2M737 415h2M1245 415h2M445 416h2M1106 416h2M804 417h2M642 421h2M879 422h2M780 423h2M887 423h2M867 424h2M1027 425h2M793 426h2M1268 427h2M669 429h2M775 429h2M1073 429h2M327 430h2M771 430h2M854 430h2M882 430h2M608 433h2M770 434h2M749 435h2M807 435h2M393 437h2M748 437h2M765 438h2M1162 438h2M1287 438h2M363 441h2M742 442h2M706 443h2M353 444h2M481 444h2M379 445h2M613 446h2M650 446h2M745 446h2M751 447h2M853 447h2M355 448h2M723 451h2M544 453h2M1194 455h2M688 456h2M480 458h2M817 458h2M506 459h2M717 459h2M1224 462h2M1266 462h2M628 465h2M711 465h2M928 465h2M605 467h2M558 468h2M729 468h2M852 468h2M713 470h2M715 470h2M715 470h2M697 476h2M779 476h2M384 477h2M744 477h2M520 478h2M886 480h2M965 483h2M356 484h2M465 484h2M1245 484h2M306 485h2M655 486h2M1212 487h2M652 491h2M877 491h2M349 493h2M1007 494h2M1095 495h2M575 497h2M634 498h2M841 501h2M960 501h2M642 504h2M318 509h2M386 512h2M606 512h2M782 513h2M1318 514h2M619 521h2M562 525h2M602 525h2M761 525h2M531 528h2M615 528h2M540 530h2M623 530h2M1295 530h2M359 531h2M615 532h2M622 532h2M917 533h2M559 534h2M592 534h2M615 538h2M555 539h2M543 541h2M1141 544h2M709 547h2M566 549h2M638 549h2M598 558h2M528 559h2M556 563h2M769 568h2M519 577h2M628 578h2M794 583h2M1213 586h2M508 596h2M526 599h2M355 601h2M705 606h2M700 612h2M598 614h2M639 617h2M362 619h2M875 619h2M483 624h2M289 630h2M610 632h2M433 640h2M673 642h2M537 643h2M683 653h2M382 654h2M504 659h2M413 660h2M317 673h2M334 673h2M697 674h2M819 674h2M378 676h2M623 680h2M418 681h2M594 682h2M422 685h2M670 686h2M477 687h2M553 689h2M371 690h2M477 690h2M462 691h2M464 695h2M406 696h2M388 697h2M394 697h2M456 697h2M402 700h2M381 702h2M479 703h2M376 709h2M368 711h2M336 714h2M333 715h2M490 718h2M300 724h2M390 724h2M422 724h2M652 725h2M629 736h2M301 737h2M373 740h2M397 743h2M320 744h2M446 744h2M402 746h2M385 750h2M473 750h2M380 759h2M434 760h2M504 761h2M366 763h2M752 764h2M467 766h2M553 769h2M633 773h2M447 799h2M479 808h2M354 819h2M540 824h2M343 857h2M336 873h2"/><path stroke="#596674" d="M851 238h2M849 248h2M857 250h2M775 260h2M766 267h2M833 269h2M738 272h2M875 275h2M880 275h2M695 278h2M774 283h2M937 286h2M744 288h2M946 288h2M971 288h2M867 289h2M654 293h2M682 293h2M907 294h2M920 294h2M896 295h2M831 296h2M937 298h2M641 299h2M845 299h2M908 301h2M639 302h2M868 304h2M889 304h2M675 305h2M913 305h2M640 309h2M880 310h2M904 311h2M687 312h2M938 312h2M653 313h2M986 313h2M835 314h2M601 316h2M884 322h2M604 323h2M739 327h2M594 329h2M1195 330h2M620 331h2M926 335h2M712 336h2M859 337h2M852 338h2M867 338h2M745 339h2M799 339h2M889 339h2M559 340h2M888 340h2M838 341h2M569 342h2M676 343h2M886 344h2M783 345h2M583 347h2M815 349h2M659 350h2M1054 351h2M801 355h2M675 356h2M704 357h2M851 359h2M770 361h2M846 362h2M807 363h2M810 363h2M791 364h2M853 364h2M952 364h2M573 365h2M642 365h2M898 365h2M841 366h2M518 367h2M824 367h2M744 370h2M645 372h2M785 372h2M497 374h2M819 375h2M825 375h2M595 376h2M755 376h2M1041 377h2M755 378h2M905 378h2M1179 379h2M458 380h2M877 380h2M648 382h2M953 382h2M640 384h2M918 384h2M589 385h2M808 385h2M578 387h2M1078 388h2M1186 388h2M721 390h2M697 391h2M808 391h2M944 391h2M525 392h2M770 392h2M993 392h2M1027 392h2M424 393h2M841 394h2M925 394h2M1272 394h2M677 395h2M415 396h2M677 397h2M762 398h2M814 398h2M1045 398h2M494 399h2M639 399h2M1091 400h2M578 401h2M664 401h2M677 402h2M818 404h2M860 404h2M729 405h2M816 405h2M820 405h2M1048 405h2M1131 405h2M497 408h2M629 409h2M717 410h2M490 413h2M644 413h2M980 414h2M461 415h2M745 415h2M1054 415h2M736 418h2M862 419h2M765 421h2M648 422h2M463 424h2M1113 425h2M1220 426h2M780 427h2M1079 429h2M1238 429h2M990 430h2M1183 430h2M351 431h2M777 431h2M452 433h2M735 433h2M1006 434h2M1035 434h2M876 435h2M533 436h2M641 436h2M1183 436h2M629 437h2M756 437h2M764 438h2M756 440h2M614 441h2M680 442h2M706 442h2M667 443h2M1014 443h2M893 444h2M1094 444h2M361 446h2M312 447h2M492 447h2M562 447h2M578 447h2M385 449h2M385 449h2M497 450h2M509 450h2M319 451h2M555 451h2M366 452h2M462 455h2M529 456h2M647 456h2M710 457h2M720 457h2M729 458h2M722 461h2M556 462h2M718 462h2M721 463h2M336 465h2M1288 465h2M482 467h2M521 468h2M693 470h2M540 472h2M694 472h2M685 473h2M414 474h2M617 475h2M718 477h2M836 477h2M1225 477h2M312 478h2M658 478h2M888 478h2M493 479h2M614 479h2M515 480h2M1129 482h2M783 483h2M330 487h2M707 487h2M1270 488h2M1316 488h2M668 489h2M905 489h2M691 492h2M638 493h2M1267 494h2M422 495h2M650 495h2M635 496h2M1204 497h2M667 502h2M1248 502h2M662 505h2M602 506h2M606 506h2M582 513h2M295 514h2M593 517h2M612 521h2M602 527h2M514 529h2M705 530h2M612 532h2M621 533h2M628 536h2M631 536h2M630 538h2M1203 539h2M590 544h2M593 548h2M648 548h2M576 551h2M482 552h2M539 554h2M606 557h2M685 558h2M801 561h2M560 563h2M627 563h2M563 568h2M563 568h2M655 569h2M648 577h2M1186 577h2M519 580h2M722 581h2M301 586h2M532 590h2M454 598h2M540 598h2M511 608h2M296 614h2M513 616h2M749 634h2M666 639h2M488 643h2M519 643h2M564 646h2M516 649h2M425 652h2M406 653h2M443 659h2M410 667h2M813 676h2M410 680h2M415 683h2M608 684h2M378 685h2M406 689h2M357 691h2M727 691h2M384 698h2M356 699h2M375 699h2M480 699h2M295 702h2M380 704h2M413 705h2M510 707h2M523 707h2M380 708h2M746 708h2M528 710h2M509 715h2M358 718h2M530 718h2M400 719h2M697 720h2M366 723h2M437 730h2M314 734h2M436 743h2M728 745h2M408 748h2M328 749h2M768 749h2M356 751h2M364 759h2M428 759h2M480 760h2M545 767h2M398 770h2M337 772h2M589 772h2M354 774h2M500 775h2M452 777h2M694 788h2M384 793h2M369 808h2M325 811h2M505 852h2M503 855h2M447 875h2"/><path stroke="#e6e3d9" d="M810 232h2M812 237h2M841 251h2M837 257h2M755 258h2M766 261h2M747 263h2M791 263h2M733 273h2M871 274h2M758 278h2M895 278h2M967 278h2M843 282h2M952 283h2M675 285h2M938 286h2M895 287h2M933 290h2M955 292h2M861 295h2M958 295h2M862 296h2M871 297h2M855 302h2M783 303h2M858 303h2M875 303h2M971 303h2M1024 303h2M921 307h2M771 308h2M832 308h2M625 309h2M670 309h2M878 309h2M904 309h2M922 309h2M853 310h2M724 312h2M958 312h2M674 313h2M789 313h2M857 313h2M692 314h2M948 315h2M810 316h2M861 318h2M884 318h2M601 319h2M761 319h2M719 320h2M806 320h2M599 321h2M611 321h2M895 321h2M907 321h2M870 323h2M878 323h2M920 323h2M663 324h2M908 325h2M741 326h2M790 328h2M937 329h2M642 330h2M887 330h2M800 332h2M924 332h2M1127 332h2M752 333h2M870 333h2M888 336h2M605 337h2M612 337h2M912 337h2M936 337h2M1090 337h2M1035 338h2M685 339h2M812 339h2M656 341h2M600 342h2M948 343h2M641 345h2M558 347h2M869 348h2M623 350h2M731 350h2M753 350h2M832 350h2M1011 350h2M860 351h2M1074 351h2M615 352h2M859 352h2M883 352h2M942 352h2M817 353h2M1015 353h2M860 354h2M849 355h2M904 355h2M909 355h2M827 356h2M837 356h2M874 356h2M808 357h2M592 359h2M827 359h2M850 359h2M869 359h2M870 360h2M802 361h2M933 361h2M1060 361h2M677 363h2M858 364h2M515 365h2M779 365h2M815 365h2M821 366h2M874 367h2M926 367h2M565 369h2M640 369h2M661 369h2M658 371h2M684 371h2M852 372h2M1102 374h2M681 375h2M516 376h2M524 378h2M809 378h2M866 380h2M829 381h2M593 382h2M1157 382h2M544 383h2M809 383h2M1209 384h2M1009 385h2M767 386h2M1240 386h2M1154 387h2M1189 388h2M528 389h2M711 390h2M755 390h2M847 390h2M632 391h2M1165 391h2M829 395h2M1072 395h2M582 397h2M616 397h2M617 397h2M1176 399h2M659 400h2M938 401h2M1015 401h2M894 402h2M1267 402h2M818 403h2M827 403h2M914 403h2M937 403h2M822 404h2M857 404h2M1015 404h2M609 405h2M1212 405h2M389 406h2M798 406h2M824 406h2M1041 406h2M832 407h2M720 408h2M1153 408h2M640 409h2M651 409h2M1225 409h2M649 410h2M1017 410h2M482 411h2M787 411h2M770 413h2M859 414h2M864 414h2M1018 414h2M1036 414h2M670 415h2M650 417h2M781 417h2M922 419h2M629 420h2M902 420h2M924 420h2M848 422h2M410 424h2M669 424h2M646 425h2M745 426h2M956 428h2M831 429h2M1112 430h2M1008 431h2M516 434h2M755 434h2M1100 434h2M618 436h2M701 436h2M714 436h2M762 436h2M724 439h2M635 440h2M1095 440h2M780 441h2M819 441h2M1155 442h2M747 443h2M1297 443h2M296 444h2M334 444h2M371 446h2M597 447h2M630 447h2M745 447h2M852 447h2M660 448h2M715 448h2M1285 448h2M1083 449h2M725 450h2M732 450h2M603 451h2M689 452h2M586 454h2M728 456h2M571 458h2M608 458h2M722 458h2M1255 458h2M918 459h2M701 462h2M734 464h2M694 465h2M721 465h2M513 466h2M728 466h2M882 467h2M602 469h2M1129 469h2M311 471h2M656 471h2M685 471h2M518 473h2M876 475h2M1253 476h2M697 477h2M792 478h2M1297 479h2M697 480h2M599 482h2M952 482h2M675 502h2M979 505h2M651 508h2M625 510h2M860 513h2M1186 517h2M1281 519h2M956 520h2M968 520h2M624 525h2M600 527h2M1245 527h2M596 528h2M349 532h2M617 532h2M1076 534h2M549 535h2M598 536h2M613 536h2M528 542h2M323 544h2M514 547h2M889 547h2M707 548h2M640 549h2M507 550h2M493 551h2M608 559h2M610 565h2M600 566h2M682 575h2M599 578h2M529 579h2M512 588h2M635 591h2M502 592h2M767 592h2M844 592h2M710 595h2M726 596h2M498 597h2M700 598h2M552 599h2M463 600h2M524 600h2M686 600h2M305 607h2M682 607h2M736 607h2M944 607h2M519 612h2M441 617h2M589 617h2M728 618h2M767 618h2M456 621h2M513 623h2M447 626h2M709 638h2M449 652h2M538 652h2M409 654h2M494 655h2M774 657h2M404 675h2M666 675h2M381 679h2M391 679h2M377 685h2M496 689h2M374 696h2M305 699h2M378 703h2M627 704h2M359 705h2M486 711h2M682 712h2M411 713h2M422 714h2M473 719h2M377 720h2M411 721h2M482 723h2M466 730h2M513 735h2M748 736h2M461 740h2M307 744h2M324 755h2M348 772h2M624 781h2M367 784h2M294 795h2M557 820h2M335 857h2M328 869h2"/><path stroke="#4c5661" d="M834 235h2M855 241h2M840 245h2M861 248h2M732 268h2M828 271h2M793 273h2M948 278h2M733 281h2M871 282h2M959 283h2M931 286h2M952 286h2M667 287h2M945 287h2M854 289h2M936 290h2M727 291h2M890 294h2M901 294h2M752 296h2M789 296h2M739 297h2M911 297h2M945 297h2M944 299h2M890 300h2M889 303h2M919 303h2M902 304h2M907 305h2M911 306h2M770 308h2M892 309h2M662 310h2M925 310h2M727 311h2M919 311h2M1061 313h2M888 314h2M835 315h2M896 316h2M600 318h2M910 318h2M892 320h2M911 321h2M846 322h2M716 323h2M607 324h2M838 324h2M594 326h2M838 327h2M732 328h2M909 328h2M912 328h2M898 330h2M917 330h2M683 332h2M748 332h2M731 333h2M924 333h2M864 334h2M565 335h2M641 337h2M566 339h2M724 339h2M858 339h2M957 341h2M803 343h2M829 343h2M587 344h2M799 345h2M869 345h2M1148 345h2M746 347h2M824 347h2M830 347h2M864 347h2M883 347h2M904 347h2M909 348h2M814 349h2M900 349h2M906 351h2M621 353h2M949 353h2M531 354h2M855 354h2M911 354h2M888 355h2M676 356h2M808 356h2M809 356h2M1070 356h2M768 357h2M627 358h2M856 361h2M918 361h2M582 362h2M602 362h2M854 364h2M858 364h2M970 364h2M1007 364h2M667 365h2M843 365h2M565 366h2M895 366h2M821 368h2M858 368h2M802 369h2M668 371h2M826 371h2M565 372h2M729 373h2M514 374h2M665 374h2M817 374h2M844 374h2M590 377h2M736 377h2M821 377h2M658 379h2M693 379h2M888 379h2M513 380h2M676 380h2M842 382h2M717 384h2M477 385h2M651 385h2M990 386h2M671 387h2M820 388h2M1181 388h2M1240 388h2M804 389h2M842 389h2M855 389h2M511 391h2M682 391h2M525 392h2M803 395h2M1029 395h2M1107 397h2M480 399h2M666 399h2M829 399h2M972 399h2M772 400h2M792 400h2M793 400h2M855 400h2M1005 400h2M797 401h2M972 401h2M675 402h2M711 402h2M675 405h2M643 406h2M764 406h2M436 407h2M554 407h2M603 408h2M723 410h2M681 411h2M541 412h2M469 416h2M775 416h2M896 416h2M1096 416h2M388 417h2M625 417h2M775 417h2M599 419h2M653 420h2M767 420h2M769 421h2M845 421h2M732 422h2M926 422h2M689 424h2M692 425h2M766 425h2M876 425h2M951 425h2M660 426h2M726 426h2M838 426h2M446 427h2M735 427h2M799 427h2M338 428h2M431 428h2M670 429h2M418 430h2M489 430h2M607 431h2M727 431h2M931 432h2M406 433h2M655 434h2M829 434h2M849 435h2M652 436h2M738 437h2M797 437h2M570 438h2M631 438h2M643 439h2M684 439h2M1143 439h2M753 440h2M394 441h2M524 442h2M564 442h2M753 443h2M760 444h2M369 446h2M615 446h2M598 447h2M677 447h2M724 447h2M1112 447h2M738 449h2M748 449h2M779 450h2M872 450h2M707 451h2M661 452h2M681 452h2M733 452h2M631 454h2M698 454h2M715 455h2M893 455h2M1199 455h2M673 456h2M1079 458h2M739 459h2M748 459h2M999 459h2M1118 459h2M1167 459h2M720 460h2M731 460h2M734 460h2M548 461h2M714 461h2M1122 461h2M1261 461h2M420 462h2M431 463h2M488 463h2M1002 463h2M710 466h2M1048 466h2M540 467h2M574 467h2M639 467h2M696 467h2M834 470h2M632 471h2M687 472h2M702 472h2M553 473h2M781 474h2M639 475h2M642 475h2M496 477h2M818 478h2M835 478h2M662 479h2M680 479h2M695 479h2M732 479h2M1063 480h2M353 483h2M1283 483h2M641 485h2M660 485h2M681 485h2M674 486h2M361 487h2M686 487h2M605 488h2M681 489h2M1129 489h2M1293 489h2M741 490h2M676 492h2M880 492h2M445 494h2M580 495h2M584 495h2M842 497h2M906 498h2M522 499h2M658 499h2M578 500h2M597 500h2M622 500h2M326 502h2M658 503h2M598 504h2M608 504h2M623 505h2M397 506h2M957 508h2M595 509h2M535 511h2M567 513h2M601 514h2M620 518h2M570 519h2M620 519h2M755 520h2M796 520h2M1358 520h2M711 522h2M831 522h2M543 524h2M591 524h2M604 524h2M618 524h2M928 524h2M984 524h2M630 525h2M351 527h2M618 531h2M643 531h2M935 531h2M524 532h2M600 532h2M735 532h2M583 534h2M617 537h2M584 538h2M633 540h2M307 541h2M685 542h2M594 544h2M529 545h2M747 546h2M320 547h2M467 548h2M559 548h2M583 548h2M588 548h2M554 551h2M308 552h2M527 554h2M537 555h2M505 558h2M556 558h2M910 558h2M655 560h2M1174 560h2M545 561h2M829 563h2M603 564h2M797 564h2M530 571h2M751 571h2M609 572h2M505 573h2M554 574h2M560 574h2M718 574h2M315 575h2M437 578h2M596 578h2M483 585h2M505 590h2M537 594h2M1168 596h2M509 597h2M379 598h2M524 600h2M479 602h2M423 609h2M726 612h2M566 615h2M556 620h2M602 620h2M642 621h2M320 623h2M745 624h2M786 625h2M505 626h2M442 627h2M493 628h2M584 635h2M463 637h2M838 637h2M490 638h2M445 639h2M539 641h2M574 643h2M667 645h2M397 647h2M861 647h2M611 652h2M420 653h2M522 654h2M302 655h2M390 657h2M403 657h2M416 661h2M770 661h2M815 662h2M390 671h2M626 671h2M503 672h2M611 672h2M391 678h2M381 682h2M573 682h2M342 684h2M471 687h2M521 687h2M378 688h2M383 695h2M377 697h2M378 697h2M361 698h2M356 699h2M404 699h2M334 700h2M428 701h2M365 702h2M520 705h2M320 706h2M322 707h2M341 713h2M351 713h2M390 714h2M362 715h2M367 715h2M503 715h2M535 718h2M493 719h2M367 721h2M514 722h2M368 723h2M358 724h2M339 725h2M374 726h2M380 726h2M434 731h2M558 734h2M423 735h2M567 736h2M368 737h2M356 738h2M399 740h2M465 740h2M386 741h2M296 743h2M457 748h2M372 750h2M309 753h2M379 756h2M475 757h2M307 759h2M344 765h2M415 765h2M462 772h2M463 774h2M736 777h2M367 782h2M461 786h2M392 789h2M315 793h2M492 799h2M594 799h2M483 808h2M555 823h2M451 824h2M371 833h2M474 845h2"/><path stroke="#697a8b" d="M805 241h2M798 244h2M762 259h2M760 261h2M739 271h2M804 274h2M790 277h2M811 280h2M760 283h2M677 288h2M686 291h2M846 292h2M931 295h2M923 296h2M769 297h2M937 297h2M665 298h2M711 298h2M673 299h2M665 300h2M794 300h2M895 300h2M648 301h2M665 301h2M833 302h2M904 304h2M664 305h2M913 306h2M684 307h2M901 312h2M716 313h2M786 313h2M891 315h2M732 316h2M727 317h2M860 317h2M889 318h2M699 319h2M749 319h2M881 319h2M997 319h2M896 321h2M804 322h2M792 325h2M963 325h2M898 327h2M858 328h2M948 331h2M612 333h2M850 333h2M562 334h2M738 335h2M789 335h2M973 335h2M715 337h2M853 339h2M553 341h2M880 342h2M856 344h2M785 345h2M1027 346h2M793 347h2M618 348h2M806 348h2M615 349h2M702 349h2M1130 349h2M799 351h2M698 352h2M608 356h2M657 358h2M735 359h2M898 360h2M877 361h2M986 361h2M602 362h2M858 363h2M847 364h2M919 364h2M511 368h2M814 370h2M833 374h2M851 374h2M794 375h2M656 376h2M487 377h2M868 377h2M998 378h2M481 381h2M767 381h2M847 381h2M737 382h2M781 386h2M866 386h2M781 388h2M821 391h2M808 393h2M789 394h2M848 394h2M867 395h2M794 396h2M1013 398h2M821 400h2M702 404h2M583 407h2M468 408h2M860 408h2M494 409h2M844 409h2M906 409h2M841 410h2M385 411h2M1047 411h2M641 413h2M760 414h2M840 414h2M599 415h2M647 415h2M1080 415h2M446 416h2M1344 416h2M584 417h2M1080 418h2M1168 418h2M656 419h2M926 419h2M1281 419h2M1153 420h2M741 422h2M1006 422h2M1094 422h2M397 423h2M653 423h2M663 424h2M662 426h2M738 429h2M790 429h2M455 430h2M677 430h2M868 430h2M853 431h2M616 432h2M720 434h2M753 434h2M350 435h2M629 436h2M746 436h2M1247 437h2M829 438h2M332 439h2M693 439h2M420 440h2M704 440h2M751 440h2M370 442h2M715 443h2M759 443h2M705 447h2M638 449h2M564 450h2M805 450h2M554 451h2M741 451h2M752 451h2M515 452h2M826 452h2M624 453h2M527 454h2M721 454h2M687 455h2M399 456h2M701 456h2M796 456h2M804 456h2M811 456h2M607 457h2M635 457h2M484 458h2M524 458h2M717 459h2M640 463h2M313 464h2M709 464h2M494 466h2M398 467h2M805 469h2M963 470h2M623 472h2M710 475h2M769 478h2M462 480h2M695 481h2M993 482h2M1228 482h2M699 483h2M677 491h2M294 495h2M300 497h2M675 497h2M908 498h2M569 502h2M1249 505h2M543 507h2M659 507h2M393 509h2M925 509h2M925 510h2M621 513h2M764 513h2M929 513h2M618 514h2M551 515h2M616 518h2M636 518h2M603 519h2M623 523h2M629 527h2M742 528h2M441 529h2M581 532h2M1343 532h2M962 535h2M922 536h2M1006 537h2M611 538h2M613 539h2M315 545h2M628 548h2M538 551h2M811 552h2M553 553h2M571 557h2M582 557h2M752 562h2M485 564h2M543 564h2M1194 564h2M600 566h2M500 584h2M518 595h2M557 596h2M534 598h2M559 598h2M576 601h2M570 610h2M310 613h2M351 622h2M327 625h2M714 631h2M444 635h2M607 636h2M580 641h2M731 641h2M506 646h2M308 649h2M702 650h2M460 651h2M415 653h2M605 656h2M497 658h2M523 660h2M482 661h2M472 663h2M727 668h2M420 670h2M410 675h2M600 676h2M515 677h2M614 678h2M497 679h2M582 679h2M589 683h2M604 683h2M394 692h2M406 697h2M384 698h2M391 699h2M391 702h2M421 703h2M371 708h2M327 710h2M395 710h2M463 714h2M383 716h2M426 718h2M735 718h2M367 721h2M315 725h2M331 729h2M471 730h2M313 731h2M305 738h2M402 738h2M488 740h2M288 742h2M296 743h2M325 744h2M389 751h2M309 753h2M411 753h2M615 753h2M509 757h2M613 757h2M571 760h2M426 769h2M430 769h2M489 779h2M547 781h2M398 789h2M338 792h2M441 792h2M565 801h2M419 803h2M430 806h2M379 811h2M554 825h2M450 830h2M536 839h2M487 841h2M420 858h2M349 859h2M320 864h2"/><path stroke="#6e5a5a" d="M645 420h2M682 425h2M671 429h2M665 438h2M644 445h2M701 451h2M671 453h2M631 460h2M719 461h2M631 464h2M540 471h2M708 471h2M711 471h2M527 474h2M692 479h2M667 492h2M581 497h2M654 500h2M531 510h2M554 510h2M622 523h2M639 524h2M691 535h2M695 540h2M618 549h2M613 556h2"/><path stroke="#a78a8a" d="M653 420h2M585 426h2M652 435h2M667 449h2M573 450h2M516 455h2M709 459h2M718 459h2M689 468h2M527 475h2M618 483h2M665 491h2M563 494h2M682 494h2M579 521h2M613 537h2M602 543h2M574 554h2M592 554h2"/><path stroke="#c09c9b" d="M551 423h2M676 423h2M637 430h2M659 438h2M663 445h2M585 449h2M714 460h2M559 462h2M490 463h2M675 466h2M542 469h2M633 470h2M697 475h2M670 479h2M699 484h2M572 498h2M617 507h2M617 515h2M599 521h2M627 523h2M639 536h2"/></g>
<polygon fill="#0ff" points="287,294.5 353,245 706,123 1021,123 1203,165 1211,169.5 1216.5,176 1219.5,186 1219.5,200 1180,199.5 1100,192 1000,186 930,183.5 906,184 760,249 600,317.7 450,381.9 287,452"/>
<clipPath id="cfan"><polygon points="287,296 351,248.5 374,259 396,263 362,289 330,305 287,326"/></clipPath>
<g clip-path="url(#cfan)"><path d="M257.3 323.6L377.7 233.6M258.9 326.3L379.3 235.8M260.8 329.5L381.2 238.4M262.2 332L382.7 240.3M263.9 334.7L384.3 242.6M265.7 337.7L386.1 244.9M266.9 339.9L387.4 246.7M268.5 342.6L388.9 248.8M270.2 345.4L390.6 251M271.8 348.1L392.2 253.2M273.6 351.1L394.1 255.7M275.3 354L395.8 258M276.8 356.5L397.2 259.9M278.2 358.9L398.6 261.8M279.8 361.6L400.2 263.9M281.5 364.5L401.9 266.3M283.4 367.6L403.8 268.8M284.8 370.1L405.3 270.8M286.4 372.7L406.8 272.8M287.9 375.3L408.3 274.9M289.8 378.4L410.3 277.5" stroke="#333" stroke-width="1.25" fill="none"/></g>
<path d="M322 313L342 297.5L342.5 303L326 314.5Z M355 293L372 286L372 290L358 295.5Z M350 305L369 296.5L368 301L352 307Z M323 317.5L334 311.5L334 314.5L325 319Z M288 326 L306 313 L300 321Z" fill="#333"/>
<path d="M426 344h3M388 372h1M291 382h1M288 396h3M373 374h4M350 311h4M340 366h1M431 311h3M340 383h3M337 314h2M397 275h1M514 276h3M348 282h2M709 186h1M350 347h2M572 288h2M501 310h5M437 306h2M365 300h4M288 388h4M362 377h2M294 376h2M471 345h4M323 371h3M333 394h1M420 310h2M403 287h3M474 309h5M437 275h3M415 297h3M320 401h3M435 318h2M314 359h3M671 215h4M310 346h5M442 351h4M559 269h4M660 199h5M346 328h3M392 362h2M303 419h4M499 232h3M544 270h2M374 314h1M416 367h2M341 386h4M322 384h3M314 321h1M532 286h3M386 372h3M672 199h1M348 345h1M407 310h4M421 320h4M444 325h3M482 307h2M335 307h1M427 275h3M374 383h2M316 325h4M306 366h5M424 317h3M288 323h5M643 199h1M525 239h2M391 290h2M677 211h5M508 253h2M422 270h1M596 244h2M403 361h2M421 375h2M788 165h2M459 344h1M556 289h1M637 198h1M412 364h2M472 272h3M819 215h1M364 328h2M458 354h4M329 381h2M622 262h2M418 316h1M350 307h3M423 261h4M537 288h5M524 234h1M319 315h1M433 352h3M298 345h5M629 253h2M294 325h5M322 397h3M380 350h3M398 282h1M691 260h2M575 264h2M350 361h5M361 349h1M481 265h1M332 294h2M304 361h1M340 374h2M438 329h4M288 323h4M669 232h2M379 292h1M372 343h3M288 400h2M314 385h5M495 244h2M509 327h2M471 263h3M603 218h3M333 323h5M476 317h1M305 356h2M390 374h1M694 205h5M416 363h1M384 371h2M340 277h5M324 349h1M395 311h2M423 271h3M433 341h2M319 324h3M291 340h1M310 292h5M535 253h3M375 317h5M553 255h5M468 268h3M340 281h1M522 239h1M395 306h4M593 244h2M339 272h1M430 285h1M590 260h2M399 298h1M441 343h1M582 274h2M861 178h5M288 398h4M391 320h1M514 335h2M872 189h2M367 289h1M336 284h2M364 367h4M303 412h4M490 319h4M650 210h2M441 327h3M362 376h2M328 399h3M329 402h3M340 395h4M548 304h5M490 322h5M385 336h1M540 308h1M390 372h3M345 363h1M549 264h1M569 260h2M331 365h2M522 265h3M662 192h2M355 373h2M510 324h3M452 330h1M376 394h2M642 211h1M394 354h1M546 238h2M391 269h4M631 240h1M596 268h2M312 354h1M362 272h2M456 311h2M370 287h3M482 302h2M336 301h2M289 388h2M312 394h3M331 277h3M381 381h5M593 257h2M354 385h1M297 368h1M340 332h1M290 375h2M292 368h2M382 278h3M467 310h3M505 285h3M454 339h5M289 391h3M589 272h3M321 382h2M557 270h1M455 325h1M344 325h1M342 314h2M512 287h4M934 144h5M382 322h2M342 390h3M299 311h4M371 380h3M325 304h5M564 256h5M290 399h1M316 387h1M656 186h2M336 333h3M336 413h1M569 269h4M357 392h2M323 330h5M650 210h4M429 266h5M433 331h1M334 382h1M468 313h1M351 280h4M408 302h3M319 311h4M469 271h2M328 359h2M385 329h1M340 391h2M517 258h1M384 308h1M301 376h5M366 361h5M370 303h2M358 287h2M299 384h4M392 356h4M725 242h5M399 295h2M603 203h1M307 356h1M372 339h3M411 315h2M369 345h1M358 287h1M418 278h3M538 271h3M486 327h4M354 330h5M389 331h5M471 319h1M439 360h2M321 323h3M649 246h2M403 291h1M295 319h2M391 348h2M480 308h2M589 231h4M437 328h1M382 268h1M367 294h1M402 270h2M392 297h3M582 236h3M468 260h2M337 297h1M359 321h2M355 308h2M387 321h1M723 216h1M483 260h1M289 329h3M730 223h1M368 306h3M326 342h3M395 339h2M292 322h2M390 324h1M374 321h3M640 220h5M605 293h1M323 402h1M448 280h2M319 290h1M668 210h2M736 244h1M308 295h3M400 294h2M360 282h2M670 251h1M301 397h2M433 343h2M358 366h1M366 312h1M349 347h2M417 281h1M482 256h1M601 217h2M442 343h2M383 277h5M335 407h2M392 283h5M471 287h1M468 317h3M450 290h1M484 295h5M331 390h1M348 374h3M330 368h1M534 251h2M364 396h4M303 391h1M311 354h3M358 377h2M329 389h4M680 225h1M574 247h2M310 370h4M308 353h2M628 248h3M396 281h3M445 321h5M450 344h5M450 293h1M366 285h2M313 314h3M411 332h3M409 285h3M469 278h3M520 312h3M503 292h4M533 315h2M405 346h2M498 318h1M363 325h4M792 214h2M399 319h1M692 176h2M318 368h1M490 297h1M374 376h3M336 314h1M357 373h1M303 372h2M747 178h1M320 346h3M343 335h3M345 315h3M494 321h1M462 320h2M337 389h3M673 228h1M540 294h1M640 209h1M323 294h5M432 315h3M442 297h2M436 311h1M388 284h2M293 406h2M509 276h2M328 325h3M807 181h2M406 276h1M348 382h1M379 268h3M507 248h1M335 401h1M463 256h1M304 410h1M453 303h1M291 340h3M374 274h3M571 259h4M643 263h2M334 410h1M531 258h1M379 311h3M335 352h2M534 317h4M689 219h3M390 362h1M603 274h1M617 227h2M455 357h5M335 400h2M469 289h2M481 258h3M498 307h1M711 257h1M407 266h2M633 221h1M590 218h2M289 406h3M355 342h2M453 318h1M434 268h3M513 338h3M296 311h2M305 398h2M446 338h1M356 375h1M430 334h1M444 268h1M447 349h2M392 328h2M321 356h3M421 317h4M429 316h2M308 329h1M582 297h4M506 282h3M407 287h3M340 380h2M739 166h2M296 374h2M355 381h1M310 331h5M379 384h5M322 310h5M695 191h2M421 378h1M470 282h3M472 249h1M308 329h1M487 330h2M499 301h2M410 327h2M425 289h3M335 323h1M298 398h1M836 178h2M711 228h2M467 346h2M292 308h1M751 154h2M734 228h4M453 283h2M339 303h2M310 334h3M666 256h1M390 289h3M419 302h1M454 260h2M369 316h2M352 342h5M365 301h1M591 300h2M470 284h3M325 398h2M512 274h1M319 415h2M365 378h1M363 330h2M345 336h4M391 379h2M446 352h2M468 306h5M362 337h3M333 298h2M388 376h4M717 195h4M304 377h2M407 360h2M385 301h2M424 338h1M549 255h5M304 401h5M325 395h3M558 289h2M663 247h2M345 348h2M369 270h1M585 277h1M343 303h2M375 344h2M297 398h5M685 233h5M384 269h1M291 406h5M473 253h1M724 180h1M356 392h3M625 243h1M480 289h2M688 207h2M420 351h5M330 367h5M473 306h1M454 325h2M524 252h2M477 333h5M447 352h2M299 342h1M473 350h5M394 327h2M486 342h3M429 259h3M422 284h2M341 340h1M301 402h3M356 345h3M462 278h2M448 266h1M364 362h4M699 211h4M369 376h3M751 204h3M339 316h2M296 411h4M574 262h5M303 392h2M572 289h3M477 344h1M316 334h2M349 323h5M303 364h4M353 381h1M523 278h1M532 264h3M460 293h1M635 230h5M456 336h1M581 213h1M653 202h2M473 270h2M609 238h3M412 327h3M371 339h1M338 377h2M605 203h2M305 381h1M676 199h1M356 370h3M381 299h2M467 291h1M672 242h3M299 418h4M379 350h2M442 261h2M289 314h2M363 387h3M518 327h2M358 377h2M290 398h2M377 346h1M301 334h2M414 300h1M380 375h4M557 281h3M592 268h1M383 342h2M350 345h5M766 229h1M290 347h2M657 259h3M604 279h2M394 302h4M411 272h4M532 240h2M416 333h3M469 300h4M835 171h1M779 195h4M349 300h4M304 318h3M679 245h2M630 242h2M464 315h1M355 297h1M543 317h1M505 251h3M365 390h3M581 292h2M388 386h3M407 356h2M540 318h1M361 347h1M608 261h1M404 286h2M579 284h1M450 286h5M439 326h3M380 357h2M652 257h2M346 353h1M324 403h1M394 283h2M353 306h4M792 218h3M335 314h2M438 252h4M428 289h5M308 360h3M641 267h4M295 371h3M466 263h2M537 299h2M460 328h1M322 400h2M460 278h1M477 310h4M437 308h2M474 314h1M363 299h2M417 268h5M458 267h4M422 359h5M353 329h3M338 295h5M305 393h5M310 333h2M415 355h2M343 362h1M374 341h1M378 328h5M401 311h2M399 358h3M291 424h1M306 403h1M499 251h3M632 280h1M599 215h3M582 281h1M329 360h3M355 395h5M365 271h3M395 360h3M669 238h1M457 310h4M578 255h1M676 235h2M387 323h3M503 260h2M298 401h1M560 264h4M480 255h1M358 336h2M493 316h4M395 373h1M396 279h1M569 252h5M526 260h1M367 359h1M529 294h2M288 408h1M610 264h1M355 294h5M421 328h1M460 336h2M370 363h2M651 228h1M455 299h2M404 376h4M345 279h3M312 381h2M533 226h2M681 262h2M341 386h1M546 258h1M481 276h5M301 364h2M504 262h2M462 264h3M364 327h2M295 357h1M412 265h3M347 285h2M480 300h2M342 336h1M446 314h1M287 429h5M491 264h3M289 313h2M374 349h2M340 337h2M682 200h3M687 209h2M404 303h2M533 277h2M327 367h2M396 317h1M365 332h5M623 218h4M623 233h1M296 303h2M348 345h3M310 314h1M399 354h3M443 359h3M469 309h2M355 343h2M410 286h2M347 371h1M506 273h5M403 331h3M546 266h3M287 359h2M421 280h2M442 344h4M415 298h1M379 394h3M342 364h2M408 329h5M305 403h2M594 285h3M636 227h2M533 298h2M483 317h3M359 352h1M424 278h2M384 327h1M318 370h2M449 311h1M558 309h1M471 290h2M673 253h2M609 229h1M289 412h3M392 376h1M478 288h3M291 354h1M346 345h4M369 332h2M366 277h1M466 317h5M338 333h1M604 229h5M317 343h2M554 252h2M391 301h5M297 374h4M599 267h1M712 231h2M709 195h2M467 341h1M441 275h2M327 409h1M576 300h5M561 298h1M356 318h5M315 363h2M530 324h2M399 331h3M415 280h3M379 289h1M353 392h2M941 140h3M361 315h1M391 263h3M577 225h2M396 381h3M378 381h2M340 300h5M325 310h1M339 395h1M330 303h1M392 304h2M465 268h2M372 299h2M358 385h3M334 386h2M313 338h3M363 340h2M455 332h2M505 288h2M345 343h1M384 285h1M329 352h3M356 352h3M449 272h3M457 359h3M363 386h1M523 276h4M711 174h1M360 360h2M398 383h1M379 369h4M968 143h2M647 206h2M382 308h1M474 337h1M418 276h3M381 323h3M288 366h1M488 278h2M646 263h2M550 304h4M511 319h1M287 321h1M372 302h2M416 287h3M606 286h2M728 183h1M325 381h1M620 218h1M457 362h2M463 349h1M404 290h4M469 330h1M434 331h5M476 259h5M429 368h2M509 267h3M331 398h3M355 340h2M487 314h2M385 309h1M330 367h2M457 266h3M435 320h2M314 379h2M736 216h3M553 254h3M292 368h2M624 271h3M444 270h3M656 230h1M473 287h1M459 312h1M316 297h1M504 314h2M394 307h2M577 267h5M578 279h3M377 267h2M554 298h1M527 282h1M307 412h1M488 343h2M448 319h3M450 250h5M292 360h3M394 334h3M513 235h2M327 369h2M528 287h1M323 396h1M298 350h2M465 345h2M493 295h2M373 292h3M403 356h1M335 402h3M522 227h2M445 306h5M311 390h2M339 335h5M769 213h2M618 220h1M604 229h1M515 241h3M500 241h2M552 302h1M317 379h2M303 324h1M388 385h2M497 314h1M695 252h4M496 294h2M335 387h1M402 344h1M347 392h3M371 304h2M301 375h1M405 325h2M396 318h2M430 309h2M416 362h4M336 318h4M332 360h5M484 323h3M462 255h1M341 367h2M509 270h2M321 375h2M318 373h2M402 279h3M396 322h3M515 329h2M350 302h5M294 327h3M369 311h3M337 329h2M297 411h1M369 356h1M542 264h2M552 288h5M426 305h5M597 255h2M418 279h3M768 220h2M355 405h2M730 175h4M464 301h3M343 312h5M357 304h3M558 228h2M371 320h1M289 364h2M302 360h2M531 283h2M450 259h1M338 330h1M334 300h5M343 389h1M307 387h2M490 316h3M547 236h1M368 395h1M291 322h1M328 321h2M568 231h1M513 321h4M436 274h2M555 323h2M339 321h2M452 321h2M516 249h1M612 231h3M337 377h4M616 238h2M331 386h5M480 296h2M330 384h2M394 328h5M363 384h4M470 317h2M335 378h1M341 278h1M313 396h2M331 363h2M313 376h2M615 280h3M299 393h1M355 387h1M375 345h2M455 330h2M382 319h3M330 302h2M540 226h3M506 303h2M877 173h1M513 252h1M293 405h1M366 277h1M734 246h3M373 321h2M431 322h1M361 392h4M304 408h2M368 370h4M487 278h2M493 266h1M360 276h2M477 273h2M289 377h1M314 359h3M864 149h1M355 301h1M404 329h1M411 307h1M303 340h2M305 352h1M669 239h5M545 242h3M395 320h4M321 363h2M380 307h3M493 325h5M565 257h4M346 325h4M302 331h1M382 366h1M472 285h3M610 250h3M498 272h2M449 298h5M300 390h2M395 307h1M352 317h1M569 215h4M583 209h5M681 203h1M546 262h3M425 334h4M424 356h2M377 381h1M424 348h2M659 209h2M487 257h3M761 194h3M437 325h2M303 303h3M790 195h1M591 301h4M345 296h3M512 303h4M367 336h3M559 253h1M418 345h2M293 392h1M313 358h3M365 344h2M438 308h2M363 350h3M615 255h1M631 221h5M348 399h1M428 268h2M665 186h3M602 253h1M310 345h3M597 303h2M470 295h5M397 356h2M351 313h3M291 387h2M350 376h3M410 269h4M678 200h3M801 200h5M678 238h2M443 324h1M365 343h2M327 325h1M346 380h4M549 260h5M324 329h4M384 314h5M723 162h4M317 389h2M296 413h4M374 325h3M300 349h3M311 401h2M636 235h3M344 282h1M403 309h2M398 351h2M370 293h4M541 268h3M343 328h1M299 331h1M456 350h1M543 261h2M330 395h2M420 299h5M322 305h4M393 274h3M724 197h2M653 268h4M578 261h2M508 251h1M292 354h2M504 270h4M432 310h5M324 365h4M365 361h1M402 259h1M289 340h2M476 337h1M496 345h2M397 296h3M302 337h2M409 368h1M616 247h2M703 254h1M295 325h2M315 393h1M466 295h1M661 247h2M326 319h2M650 198h2M448 253h2M547 275h1M327 317h1M746 181h1M322 372h5M577 242h2M736 179h5M421 288h1M656 196h5M323 373h2M314 330h1M357 348h5M542 243h2M362 336h1M829 206h3M470 250h2M515 252h1M393 276h1M377 368h1M765 210h5M569 228h2M292 354h5M381 274h3M359 375h4M307 345h1M420 362h3M451 355h2M399 336h1M318 329h1M663 249h2M495 278h1M397 368h3M348 352h5M415 364h2M456 265h5M313 305h1M424 326h1M298 331h2M338 339h5M293 312h1M406 295h2M334 298h3M752 228h3M724 227h2M457 320h2M569 268h1M517 289h3M298 426h2M541 262h2M402 323h4M483 245h1M584 291h1M428 308h1M601 245h2M526 241h5M570 255h2M306 381h1M300 353h2M314 379h3M345 382h4M329 354h3M456 337h5M389 325h2M341 294h4M439 296h3M442 326h5M292 363h3M415 336h1M651 269h1M304 340h1M357 335h2M443 283h1M345 395h4M351 329h3M326 378h1M460 320h2M326 399h5M681 250h2M358 364h5M340 330h4M374 348h2M288 365h3M359 358h2M435 324h3M585 217h1M382 353h5M370 314h1M292 402h3M322 397h2M370 378h2M594 289h2M495 278h3M491 292h5M460 343h1M398 287h3M375 272h3M320 325h3M399 298h1M686 205h2M310 333h1M320 322h4M753 234h4M358 312h2M330 287h2M355 327h1M624 257h2M383 391h3M849 182h3M310 285h2M289 406h1M304 314h1M372 344h1M369 279h1M300 408h5M362 375h5M304 342h2M298 335h5M508 273h2M596 224h5M535 265h1M347 334h3M307 319h3M433 352h2M346 324h3M431 313h2M459 269h4M386 323h3M462 282h1M694 232h1M298 418h2M307 355h3M454 320h5M288 351h1M518 299h1M367 298h1M294 335h3M958 144h1M647 260h3M541 255h5M505 320h2M419 364h5M344 395h2M289 357h1M411 262h1M303 424h4M353 282h1M535 317h2M290 338h1M533 316h3M346 388h3M412 304h3M638 228h4M371 370h2M506 337h1M350 321h1M703 160h2M606 219h2M315 335h4M316 383h3M495 304h1M449 333h1M312 372h5M406 341h1M501 325h4M480 317h2M416 305h4M322 373h5M417 272h3M519 274h1M655 246h3M456 349h3M446 292h3M425 315h1M601 287h4M568 244h1M533 240h1M627 256h5M323 292h1M365 383h2M586 231h2M382 322h3M501 309h1M424 338h3M402 313h2M521 316h1M292 340h2M400 367h2M301 398h2M428 286h1M370 383h4M435 266h1M341 365h1M442 322h4M329 402h4M399 367h2M445 290h3M438 292h2M529 269h2M287 353h2M738 206h1M437 263h1M391 285h2M297 340h1M634 217h4M697 215h1M612 233h1M404 282h2M389 266h1M513 291h2M579 247h1M404 323h1M338 277h2M410 348h3M478 251h3M757 184h3M448 294h3M450 301h1M539 281h1M363 333h2M398 275h2M325 391h3M357 326h5M639 225h3M359 346h5M504 283h2M361 356h1M431 301h3M293 368h2M355 308h2M496 293h1M374 346h3M708 166h1M427 284h2M378 357h1M774 223h1M548 258h2M328 342h1M308 379h1M461 311h4M322 366h2M408 329h3M458 340h1M300 391h1M339 365h3M331 277h2M425 252h3M713 175h3M803 169h5M828 205h2M356 380h4M742 166h4M383 336h2M630 184h3M324 387h5M834 196h2M357 326h5M288 342h1M291 333h3M628 271h5M359 407h1M549 253h2M832 186h3M321 316h5M482 332h1M503 272h5M425 319h2M371 389h1M710 244h2M548 270h3M573 233h2M476 264h2M329 402h2M327 368h1M497 279h2M334 370h4M779 166h1M619 266h2M359 385h2M359 264h2M329 343h4M361 387h2M301 340h1M608 208h5M358 336h2M442 310h2M455 291h1M439 365h1M495 263h1M444 334h1M485 326h2M476 303h3M391 280h3M749 173h2M556 298h2M365 335h2M289 368h1M413 341h1M395 356h5M606 287h2M709 248h1M310 319h1M476 341h1M441 259h3M435 291h1M345 384h3M396 268h3M502 330h4M370 376h5M555 272h3M588 273h1M335 314h3M470 269h4M397 272h1M335 305h2M462 358h2M361 345h1M325 330h3M355 351h2M435 254h5M390 361h1M455 274h3M467 273h1M722 171h2M526 296h4M295 323h2M373 308h2M335 377h1M363 324h4M390 338h3M517 271h4M432 362h2M496 313h1M327 313h2M498 334h5M346 352h3M712 171h2M486 270h2M355 383h4M431 372h4M674 263h2M551 308h1M416 295h1M417 358h1M522 232h2M314 307h4M493 274h1M298 367h1M711 244h1M816 168h1M696 238h5M512 314h2M628 268h5M677 218h3M535 269h1M341 314h1M538 310h1M459 310h3M692 247h3M337 402h3M405 289h2M570 248h2M708 206h1M332 285h1M327 297h2M483 301h4M365 315h4M438 325h2M731 192h2M342 398h3M468 349h1M402 290h1M456 287h4M401 325h2M420 292h1M768 174h2M649 178h2M322 312h5M514 300h2M452 316h1M527 321h1M322 394h1M781 187h2M534 249h2M326 366h5M636 274h3M306 386h1M570 307h3M353 338h2M595 257h5M469 293h4M403 365h1M479 259h1M322 334h1M697 226h2M374 359h1M536 317h2M390 310h4M339 308h1M361 293h1M414 298h2M382 276h1M364 301h2M588 284h1M556 239h3M315 406h1M429 267h3M625 209h2M360 335h3M454 309h3M459 293h1M392 364h1M288 313h1M515 291h5M653 263h1M481 317h2M680 242h3M671 257h3M385 378h2M466 355h3M359 294h1M291 371h1M726 225h2M430 279h3M361 330h1M382 344h1M513 251h2M411 335h4M314 397h2M486 339h1M786 168h2M878 173h3M336 367h2M869 193h2M425 327h3M402 292h1M319 298h1M515 308h3M321 323h2M508 294h2M338 370h2M451 310h3M383 345h3M450 368h2M504 276h1M437 268h1M601 265h2M331 351h2M393 341h4M321 357h1M296 402h1M307 413h5M339 395h3M422 355h3M615 229h5M492 308h3M510 268h2M395 298h4M405 331h4M318 346h1M560 233h1M454 354h1M490 256h2M455 312h4M462 306h1M744 209h4M295 297h4M323 368h2M524 263h3M345 323h1M347 298h4M399 379h3M483 281h2M288 332h5M526 276h2M426 363h1M328 386h5M445 300h3M417 308h3M459 273h5M322 385h4M665 190h5M321 284h4M446 278h1M391 367h2M361 368h2M359 278h5M369 391h2M336 371h2M409 312h3M346 309h5M394 303h1M372 297h1M304 403h1M398 331h2M288 398h5M398 284h1M299 336h3M337 389h5M630 193h2M548 286h2M331 308h3M758 219h5M391 384h3M318 367h4M305 329h3M326 360h4M290 417h4M342 379h2M645 252h5M503 278h4M334 407h3M444 254h3M392 314h2M353 287h3M397 356h5M440 368h2M299 347h4M311 389h3M464 267h1M363 361h5M431 280h1M300 330h4M335 308h1M304 349h2M299 343h1M486 350h2M697 224h2M330 407h2M289 326h1M392 310h2M335 351h4M555 303h1M417 273h2M450 289h3M358 321h4M417 262h2M294 370h5M543 288h5M316 345h1M679 186h1M438 312h2M638 218h5M383 284h1M567 293h1M593 255h1M671 182h1M717 251h5M288 421h3M559 239h4M433 295h4M301 367h4M582 235h3M341 330h1M530 303h1M411 334h3M485 339h5M388 383h3M557 273h4M393 266h2M400 298h4M334 387h4M822 176h2M439 266h2M584 216h1M313 309h4M478 257h3M585 272h2M323 346h5M298 362h1M320 361h3M339 381h2M287 424h1M300 332h2M360 321h1M469 343h2M295 385h3M771 218h5M527 307h3M332 306h4M327 400h3M412 300h1M626 238h1M523 261h3M308 342h2M402 310h1M313 410h1M668 220h2M408 334h1M515 336h4M445 264h2M648 229h2M455 334h1M566 311h2M396 332h1M514 255h4M564 221h3M326 362h2M415 320h2M403 293h2M368 328h2M414 285h3M787 159h3M288 365h5M322 292h2M426 324h1M792 169h1M499 266h1M338 344h3M350 354h3M416 314h1M336 395h5M404 293h2M431 360h2M363 393h3M343 340h3M661 217h1M483 315h3M399 277h1M434 312h1M699 177h2M405 294h5M449 307h3M305 331h5M400 324h2M338 349h1M554 300h3M401 371h2M490 299h3M380 330h3M302 391h1M321 351h5M305 353h5M347 295h5M363 392h2M351 389h2M868 168h2M377 316h1M708 188h2M370 379h1M429 273h1M595 234h4M346 359h1M340 359h1M558 272h1M587 249h2M532 332h1M546 286h2M462 309h2M374 371h5M474 316h3M462 325h1M294 316h5M492 271h2M604 288h2M591 262h4M294 334h1M318 319h1M381 261h3M521 337h3M568 230h1M656 242h2M429 331h2M404 302h2M400 281h2M347 294h1M399 328h5M472 293h3M627 282h3M448 288h1M375 297h3M550 278h4M877 151h3M557 237h2M410 302h5M297 391h1M342 373h1M448 337h4M399 327h2M495 310h2M455 296h3M648 252h2M408 305h2M478 287h2M667 220h4M405 294h1M745 166h2M491 301h3M375 291h3M364 282h1M517 323h2M406 322h5M328 363h2M482 319h5M340 350h2M295 414h3M513 309h3M289 318h4M295 310h1M395 335h2M382 375h3M366 353h3M368 305h1M384 320h2M372 292h4M351 288h3M368 297h1M449 300h1M439 260h1M309 325h1M396 325h4M421 269h2M340 320h2M323 369h5M362 299h3M308 297h3M433 345h2M518 303h4M345 360h5M355 273h2M339 302h2M328 379h1M526 272h2M440 329h3M299 421h2M468 321h1M663 244h5M469 317h1M301 313h2M299 316h1M488 288h1M288 429h2M556 298h2M391 353h2M310 340h3M319 366h2M308 412h3M412 356h4M347 393h3M479 299h5M368 268h2M400 348h4M685 192h1M514 254h1M499 263h4M648 236h2M498 248h1M427 346h4M663 201h5M529 258h5M520 314h1M687 182h4M392 354h5M335 401h2M461 347h3M377 290h4M449 333h2M451 348h4M294 369h2M453 257h2M384 373h5M375 353h5M604 285h1M516 246h2M617 206h1M527 269h3M918 154h1M652 237h3M353 329h2M498 307h2M325 351h1M304 421h1M628 219h1M578 225h5M380 308h2M472 263h3M353 404h3M313 347h1M359 310h2M341 292h5M562 247h1M533 291h2M503 319h1M300 365h2M287 347h2M459 283h2M565 298h2M500 337h4M339 374h5M313 401h4M684 214h5M345 379h2M609 241h2M349 367h4M372 313h4M380 388h5M300 340h2M402 343h1M577 283h1M371 368h3M457 280h2M348 330h2M325 319h1M356 312h2M725 185h3M404 332h1M662 204h1M769 196h1M909 161h1M538 259h2M541 238h3M311 387h2M539 273h2M400 333h3M367 341h3M500 303h1M381 287h3M343 326h1M424 363h2M304 346h4M344 387h2M375 334h1M761 183h3M288 330h1M690 222h2M713 192h1M336 367h5M763 196h2M612 228h2M497 316h3M356 290h2M314 322h2M310 362h3M778 177h2M620 281h2M512 284h2M495 267h2M483 297h4M395 314h2M377 364h2M551 288h2M295 340h2M499 302h3M399 307h4M540 306h2M448 348h5M473 339h1M319 381h3M413 281h2M357 387h2M324 362h2M496 333h5M322 342h1M314 354h5M317 383h3M353 334h2M401 336h1M480 276h2M289 342h1M358 387h2M343 325h1M365 353h5M497 331h2M301 347h1M344 361h4M760 187h3M795 188h1M664 221h2M342 352h2M434 255h2M313 393h3M553 311h4M574 246h1M728 219h1M537 249h5M732 221h3M364 354h1M348 398h2M293 403h1M476 300h3M357 294h2M405 281h4M660 257h3M702 241h1M391 281h5M394 326h2M402 355h4M292 342h4M430 255h2M368 346h5M411 353h4M614 235h5M582 281h1M361 332h3M347 272h4M332 298h2M337 297h2M452 274h5M340 373h1M584 227h3M497 310h4M491 251h3M450 250h5M341 288h2M348 357h3M292 395h3M360 354h2M292 385h3M326 401h1M456 266h5M343 335h3M414 362h3M605 224h5M562 228h5M323 303h1M642 198h3M546 238h2M497 257h1M440 340h1M357 319h5M422 371h1M370 286h1M563 240h2M331 337h1M636 244h1M406 377h5M365 381h1M342 283h5M364 384h4M617 239h2M366 292h2M292 413h3M385 296h3M391 291h2M477 282h1M553 305h4M308 316h3M722 187h1M544 293h1M565 281h1M420 326h4M523 313h2M677 169h4M571 248h1M784 205h1M408 345h2M357 348h1M309 362h1M331 335h2M391 255h1M450 352h5M325 413h5M324 374h1M345 309h3M487 270h1M409 336h5M659 198h5M384 289h5M438 339h1M324 302h2M396 332h3M510 287h5M498 291h5M296 340h2M602 223h2M533 264h2M313 318h5M435 273h5M540 281h1M368 314h2M440 286h4M568 236h1M428 271h1M438 341h1M593 277h5M350 287h2M430 360h5M326 404h2M398 358h3M315 316h2M318 320h1M320 382h1M288 413h3M429 301h2M426 338h1M535 248h1M601 299h1M379 389h5M477 267h3M468 305h3M446 334h3M571 268h5M417 269h2M423 339h3M434 293h2M304 409h1M643 256h1M322 377h3M500 259h2M327 363h2M479 264h2M404 353h3M394 277h4M378 351h3M291 320h2M420 371h2M336 394h1M358 328h2M365 379h1M339 314h1M311 310h3M399 270h3M707 222h3M518 304h2M823 192h1M588 265h5M560 217h4M389 373h5M341 296h2M312 374h1M344 372h4M317 413h2M852 149h2M297 324h2M413 328h3M346 355h1M593 219h3M592 264h3M317 326h1M312 424h3M394 265h1M400 344h1M630 205h1M544 252h1M368 299h1M406 338h2M377 364h4M407 319h2M671 211h4M846 176h1M392 375h2M392 345h2M787 211h3M330 289h1M421 321h5M392 330h5M411 307h2M645 275h1M379 345h2M404 344h3M298 399h1M438 365h3M428 312h1M315 351h2M620 269h1M330 323h4M555 305h2M690 230h2M295 330h2M291 344h3M464 318h2M641 193h2M375 381h1M321 374h2M349 347h5M480 335h1M672 246h5M610 269h3M326 351h1M356 291h2M349 377h5M300 354h3M374 327h5M830 187h5M458 272h1M371 278h1M518 238h5M491 264h5M430 315h3M558 314h2M502 258h4M459 294h2M421 270h3M309 345h3M288 350h2M455 265h2M344 328h1M293 341h1M294 408h1M361 302h5M389 283h2M335 384h4M293 343h3M584 221h2M757 160h3M352 358h2M467 312h2M505 313h1M431 354h1M347 332h3M294 317h1M744 207h3M469 286h2M503 282h1M371 305h3M328 395h3M293 301h5M546 273h3M344 321h1M336 391h1M349 338h2M630 276h3M486 324h1M541 323h1M468 272h1M300 301h1M301 377h3M428 305h2M619 257h2M477 258h5M420 357h5M479 272h1M807 171h3M353 314h3M353 322h2M842 180h1M306 347h1M324 323h5M533 267h2M325 322h3M290 384h5M408 269h2M626 289h2M728 222h2M381 267h1M915 150h4M351 268h3M369 384h1M365 318h2M452 282h2M311 339h1M404 355h3M289 327h2M329 321h5M295 423h1M387 394h1M292 314h1M647 218h2M345 379h4M436 345h3M401 356h2M296 370h1M477 254h2M336 283h3M318 314h2M528 273h2M396 290h1M428 292h4M344 331h1M340 351h1M481 303h2M524 245h2M446 344h3M287 314h1M525 235h1M322 290h5M339 351h1M731 248h1M911 158h4M602 252h5M363 336h2M308 325h2M342 343h2M663 247h2M337 410h3M340 302h3M348 383h1M446 326h1M376 301h3M731 223h1M423 323h3M457 323h5M493 298h3M453 276h1M338 340h1M471 333h4M419 312h1M294 422h3M334 398h2M378 380h2M716 250h4M316 411h2M734 197h2M470 295h2M426 310h2M323 398h2M617 206h2M342 327h1M423 282h3M561 291h2M654 207h1M337 381h4M483 334h2M545 313h3M360 365h1M498 270h1M417 305h1M372 318h2M287 376h5M710 217h1M355 387h2M377 265h5M308 374h2M428 361h2M515 325h3M340 369h3M946 144h2M594 250h3M807 166h1M618 200h5M397 326h2M364 277h1M360 395h3M681 205h1M476 281h2M648 274h1M402 369h3M402 278h4M383 377h2M400 345h2M482 311h2M361 396h2M417 324h1M365 359h2M603 250h2M392 348h2M439 341h5M373 345h2M513 240h4M538 253h1M601 268h1M490 260h5M605 269h2M365 355h2M402 303h4M524 259h3M292 424h1M477 261h5M332 279h2M559 252h1M339 397h4M359 287h4M448 290h3M338 280h2M447 323h4M723 249h3M668 238h2M315 299h4M616 273h1M405 297h5M603 286h3M559 279h3M309 398h2M309 387h5M359 355h2M501 320h5M345 309h1M371 318h3M287 403h3M767 163h2M378 357h5M950 155h2M323 388h3M451 327h2M524 277h2M489 307h2M316 315h1M562 280h5M533 320h1M352 393h5M633 288h1M322 351h3M404 303h2M329 374h1M376 296h3M377 377h3M631 212h3M593 249h1M680 200h3M424 326h3M532 261h2M313 398h2M787 212h2M353 312h1M430 272h1M550 242h2M381 288h5M336 276h3M634 255h2M371 299h1M462 328h2M381 286h3M358 304h4M343 306h1M305 398h5M340 381h3M332 323h1M539 246h2M422 286h1M382 299h3M301 317h1M700 241h1M748 216h3M344 289h2M313 318h1M470 259h5M480 271h1M410 348h1M332 338h5M288 384h3M314 340h4M518 246h1M299 340h5M376 281h3M549 278h4M354 372h1M400 353h4M288 355h4M552 253h1M573 248h1M501 282h3M404 301h2M424 314h3M667 222h4M375 319h3M287 422h1M348 273h1M465 322h3M389 353h1M448 316h3M373 297h4M454 286h3M339 290h1M348 389h1M326 399h3M412 281h1M335 346h3M599 296h2M360 265h2M300 399h4M318 303h2M507 310h4M610 268h1M441 306h3M357 330h1M404 341h1M403 301h2M293 303h3M422 273h3M326 397h5M660 187h1M384 316h3M600 217h2M555 312h1M514 238h1M335 356h4M450 267h1M507 309h3M417 298h1M430 301h1M337 284h2M435 276h4M324 303h1M338 371h5M583 216h3M323 340h2M766 223h1M398 278h3M353 340h2M354 367h3M301 302h1M877 180h4M338 405h2M574 256h1M513 298h2M626 287h2M517 293h2M695 260h2M675 230h4M491 314h1M378 289h1M376 287h5M655 193h3M496 336h1M644 259h2M658 241h5M739 223h3M562 279h3M326 372h1M552 285h3M487 330h2M387 367h4M310 347h2M373 395h2M331 405h1M373 317h1M396 292h1M367 367h4M384 384h2M505 285h1M406 375h2M391 332h3M681 248h2M420 292h4M555 281h2M338 342h4M551 314h3M323 371h2M360 282h3M934 160h2M336 370h3M354 296h3M733 209h2M806 182h5M299 392h1M452 274h5M460 334h1M371 335h4M292 326h2M300 300h2M482 349h2M307 377h1M367 314h1M381 304h1M428 360h1M338 307h4M414 289h3M342 291h3M343 349h1M292 427h2M621 251h3M318 341h1M652 220h2M560 306h3M343 374h3M493 328h5M314 328h2M469 284h2M304 411h2M797 156h2M605 263h2M402 306h4M364 311h4M396 291h1M448 257h3M345 341h2M426 292h2M368 385h1M676 194h2M625 234h2M323 313h3M740 235h5M514 252h3M406 288h2M547 265h3M581 229h1M294 353h2M459 280h2M354 398h2M341 378h5M395 325h4M513 317h2M555 242h2M342 406h1M297 413h1M295 367h2M303 368h3M412 354h3M406 312h4M341 374h1M550 235h2M395 286h1M410 271h3M446 268h5M466 303h2M337 338h2M433 291h2M451 251h5M398 265h4M367 365h2M794 217h5M311 366h2M476 289h3M624 236h1M516 299h3M425 282h5M614 205h5M457 277h2M318 319h1M464 304h2M389 282h2M421 298h1M377 379h2M350 342h4M289 407h1M562 250h1M604 250h4M366 354h5M306 380h1M761 198h4M430 315h1M611 289h3M379 319h3M311 419h5M545 249h3M590 281h4M488 273h5M294 326h1M565 305h5M851 155h2M361 329h1M446 320h5M326 319h1M394 303h3M323 337h2M520 294h3M359 382h3M299 408h3M598 277h5M402 297h4M350 394h1M646 193h3M387 320h3M347 307h1M392 282h3M493 323h1M547 229h4M574 230h5M424 329h1M533 234h1M493 311h2M587 215h1M423 262h5M409 357h2M422 278h1M390 329h1M413 316h1M449 348h5M647 201h1M702 212h2M620 254h1M289 395h3M373 310h1M343 283h2M334 358h2M568 254h1M322 341h2M352 298h2M375 304h2M407 367h5M472 313h2M487 331h4M362 375h1M610 221h1M522 251h1M293 413h2M297 375h3M467 263h1M721 159h1M617 271h2M339 354h2M363 376h1M570 272h4M442 322h2M298 395h3M574 222h1M704 240h2M580 279h2M497 326h5M532 295h1M430 304h1M431 331h1M586 236h4M554 293h4M356 360h2M582 252h4M425 276h4M327 394h1M568 217h2M479 317h2M567 272h4M293 319h1M341 282h5M307 402h2M393 359h4M447 285h1M337 369h1M400 265h3M431 296h2M726 199h1M338 352h4M414 316h2M317 406h3M330 298h2M411 290h3M509 283h5M405 347h2M409 306h5M291 318h2M309 372h3M387 276h3M364 305h4M362 356h5M335 288h2M658 254h5M311 400h5M305 376h3M396 286h2M497 294h1M430 292h2M438 283h3M455 317h1M296 309h2M518 337h1M372 357h3M350 340h2M304 309h4M319 339h1M422 292h2M306 335h5M465 361h2M327 343h3M560 305h2M527 322h2M324 354h1M374 316h1M644 203h2M400 290h1M499 323h2M493 272h3M340 387h1M287 408h2M302 416h2M484 292h2M385 270h3M374 379h3M290 370h3M544 286h2M288 386h4M486 269h2M326 327h2M464 332h2M542 221h4M341 408h2M356 383h1M356 301h2M617 273h3M465 307h2M421 292h3M562 238h3M556 306h3M567 288h3M316 387h3M290 365h1M308 400h5M334 291h1M510 291h3M615 231h5M377 338h1M486 260h2M642 230h2M509 322h1M427 314h1M358 372h1M385 324h1M287 378h2M491 296h2M337 402h5M474 286h2M329 292h3M504 266h2M640 234h2M333 362h2M487 323h2M418 302h5M288 354h1M333 401h1M323 326h1M392 305h1M368 304h2M416 349h1M411 287h3M354 350h3M379 387h2M289 411h2M388 333h1M497 295h1M312 385h1M596 288h4M340 373h2M344 349h3M297 320h4M326 359h1M445 297h4M402 293h1M406 327h2M673 191h1M620 200h1M365 328h4M449 366h1M346 366h1M359 311h1M292 418h1M322 283h1M366 282h2M296 390h4M399 279h4M376 282h2M678 180h2M361 396h3M361 306h1M362 285h1M340 364h1M650 277h1M447 368h4M332 386h2M632 201h3M468 293h5M529 267h1M374 341h3M414 343h2M347 362h1M748 200h2M376 327h2M344 291h3M297 378h2M353 340h1M538 317h1M523 327h2M296 341h3M514 298h2M353 325h3M307 371h2M296 332h2M399 265h1M347 287h1M305 378h2M707 184h2M539 249h1M313 300h2M337 367h2M570 273h3M315 392h2M599 203h5M325 334h3M288 349h3M561 279h5M502 329h4M295 309h1M759 175h3M441 249h2M314 329h4M320 282h3M307 366h2M326 323h5M368 396h3M320 323h1M729 212h2M535 267h2M411 358h3M362 340h5M642 262h2M338 276h2M355 312h1M427 367h2M422 351h1M296 377h5M320 343h3M294 384h2M512 314h5M330 393h5M294 378h4M377 289h4M307 358h2M336 363h5M292 416h5M314 307h1M318 333h1M386 369h1M474 339h2M461 312h4M363 390h3M312 390h1M395 295h3M357 300h1M311 394h1M355 344h5M531 238h2M714 174h5M477 280h2M536 259h4M587 306h2M595 293h4M606 208h1M450 295h4M333 288h2M363 306h1M693 265h2M416 306h1M310 367h3M332 406h4M482 272h1M516 291h4M492 347h1M407 271h2M767 165h1M532 293h2M339 400h4M384 291h1M613 214h4M351 386h2M329 348h5M377 335h4M521 262h5M596 267h5M571 305h5M329 316h5M450 300h4M348 329h4M288 314h1M603 243h1M658 265h2M339 282h3M574 290h1M700 196h5M376 369h4M396 299h3M634 223h2M455 339h2M476 325h5M542 274h1M726 234h1M336 387h3M424 269h1M397 295h2M343 361h5M365 262h3M341 391h2M637 252h1M478 331h1M363 342h2M287 360h1M635 224h5M403 292h1M370 263h2M889 162h2M290 312h3M327 287h5M579 248h2M376 281h5M300 332h1M318 350h1M313 379h1M408 267h2M683 219h2M303 338h1M289 312h1M316 307h2M353 338h2M321 338h2M456 359h3M330 289h4M647 244h2M697 260h2M571 296h1M362 387h4M376 357h3M448 342h1M370 354h4M417 303h4M338 405h2M385 287h3M311 327h1M329 341h4M383 364h3M425 325h1M334 342h2M303 336h2M318 330h3M469 262h2M365 352h3M592 287h3M556 278h2M322 361h3M550 260h3M307 395h3M327 340h5M755 185h4M368 395h2M695 250h1M320 342h2M398 278h1M384 317h4M455 340h2M304 329h3M444 329h5M624 271h2M724 194h2M442 344h4M632 283h3M287 365h1M404 268h3M332 409h2M305 361h1M292 363h3M322 315h3M750 233h3M352 340h2M450 344h1M292 335h4M568 242h1M368 296h1M334 318h2M385 305h2M580 240h3M447 343h2M433 325h1M650 228h5M856 178h2M439 303h2M642 218h4M343 364h1M430 309h2M441 277h3M400 306h3M340 323h3M391 325h5M302 407h2M295 320h2M330 382h1M352 294h1M446 288h2M309 332h3M449 298h4M404 349h2M306 351h1M464 270h3M314 348h3M886 151h1M421 363h2M422 350h2M308 387h4M417 358h1M423 272h1M315 397h1M439 296h1M323 286h3M396 307h4M360 294h1M696 226h1M690 167h2M410 268h2M307 346h3M334 311h2M340 317h1M511 298h1M661 266h4M642 209h1M402 345h3M423 291h1M747 196h2M635 264h3M350 324h1M366 272h2M415 333h2M528 248h4M413 329h4M447 269h5M687 200h2M329 348h3M563 241h3M433 321h1M628 206h2M341 315h1M292 393h4M304 312h4M440 301h1M435 296h3M546 308h2M375 352h3M348 334h2M395 367h1M675 207h3M699 183h3M307 369h2M355 370h2M329 377h2M377 364h5M335 407h2M430 266h1M642 275h5M366 286h2M368 353h3M295 381h3M371 340h1M506 320h1M660 230h3M411 328h5M400 367h3M490 290h2M496 296h2M306 311h1M688 229h1M294 344h1M324 398h1M294 344h1M360 309h2M390 316h2M303 293h2M782 189h3M617 275h2M291 394h1M355 353h2M843 194h3M293 319h1M302 339h1M614 255h3M434 280h2M406 372h3M394 377h3M561 285h1M498 247h4M332 298h3M365 304h4M314 416h4M512 277h2M424 335h2M462 355h1M387 373h2M419 319h2M409 320h1M340 337h5M548 265h4M363 299h3M514 242h4M455 312h3M554 277h3M628 202h2M310 404h1M301 370h2M594 264h1M542 224h1M590 280h2M612 266h2M486 340h5M342 392h4M311 384h1M414 299h2M385 266h3M383 328h1M347 350h1M316 389h4M307 393h1M633 275h5M421 361h3M372 272h4M455 275h1M324 349h3M361 337h4M505 288h1M455 324h1M320 337h1M480 285h3M480 266h3M432 283h4M597 279h1M554 281h4M409 381h5M330 374h1M677 218h3M433 346h2M505 297h4M418 272h2M316 395h2M584 265h5M738 232h3M351 284h1M434 352h2M304 399h3M452 294h3M541 320h3M315 350h3M492 331h2M596 212h1M647 254h5M560 250h2M323 332h3M519 317h1M314 367h2M414 343h2M456 332h2M310 332h1M383 379h4M304 331h2M428 274h1M316 311h2M637 257h2M310 337h2M436 294h2M452 350h2M468 310h3M322 326h3M511 297h2M314 365h2M409 289h4M304 392h2M329 326h1M444 312h1M425 289h2M363 279h5M567 247h1M499 339h1M525 289h1M314 306h2M463 290h2M365 357h1M446 326h4M387 342h2M383 361h2M407 377h3M292 365h2M460 308h5M367 362h5M325 324h3M629 198h3M319 393h2M459 315h1M421 316h1M673 188h1M365 302h2M437 364h4M476 272h4M377 347h2M387 313h3M433 342h3M386 270h2M464 336h1M621 208h3M410 349h2M495 278h2M613 276h1M776 221h4M454 270h1M516 323h3M552 273h1M397 341h4M320 407h3M375 370h2M632 219h3M408 377h3M627 252h2M517 230h2M484 315h3M338 364h3M652 223h3M425 286h5M334 314h2M469 292h2M318 298h4M659 267h2M310 350h4M392 261h1M395 284h1M416 342h2M585 252h1M369 360h1M540 319h1M335 341h1M434 278h2M331 322h4M641 218h3M719 196h2M531 242h3M372 377h2M648 234h5M313 293h1M320 354h2M388 320h4M713 197h4M346 387h3M350 285h2M558 259h1M365 295h5M309 299h2M331 282h5M379 285h1M323 301h2M727 193h4M448 262h4M327 305h2M434 285h2M445 332h1M419 296h3M323 312h1M467 253h1M394 288h1M314 342h3M770 162h2M288 417h5M315 353h2M355 366h2M343 387h3M442 337h2M441 330h3M354 295h1M526 241h2M396 346h1M704 211h4M355 275h2M406 307h2M402 374h1M432 327h4M514 318h1M301 404h2M327 416h1M318 348h2M507 255h1M532 240h3M339 401h2M423 303h1M335 311h1M370 330h3M404 364h2M485 266h2M499 307h5M390 368h3M728 187h4M397 316h4M507 308h5M472 270h1M490 251h2M497 284h1M413 287h2M331 362h3M352 406h3M345 339h1M385 339h5M453 326h4M409 356h1M639 217h3M357 297h4M420 305h1M353 370h3M409 373h3M448 332h3M371 364h4M324 315h1M358 316h1M540 326h2M411 297h3M381 290h2M519 285h2M350 347h2M380 350h2M507 271h1M709 218h4M358 327h1M473 253h1M383 339h3M350 277h4M442 282h5M435 368h1M388 280h2M563 218h3M878 169h2M389 268h3M355 398h5M559 302h1M364 378h3M525 316h1M423 355h5M348 315h3M422 288h1M522 334h3M405 318h2M295 324h3M287 343h5M345 372h2M452 314h2M309 411h5M600 221h1M421 288h1M551 253h1M347 360h3M340 299h1M627 218h5M290 412h5M835 148h1M688 243h4M636 200h1M318 323h3M594 289h3M726 199h3M587 251h1M347 350h1M325 417h2M654 258h1M404 351h3M406 320h4M496 241h1M394 298h2M317 344h1M388 270h1M451 336h1M436 255h2M567 270h1M308 401h1M375 268h1M399 367h1M354 334h1M367 295h5M580 274h1M549 275h1M717 242h2M501 310h4M370 358h2M421 317h5M350 391h1M509 319h2M416 304h5M414 315h2M346 270h3M518 274h1M427 348h2M471 348h1M386 327h3M439 281h1M402 340h5M515 245h2M383 312h3M300 348h5M328 343h2M655 192h1M331 393h1M396 318h2M519 273h2M764 219h4M389 358h1M386 338h3M567 245h2M370 315h1M456 344h5M361 340h1M481 257h4M379 348h1M383 331h1M465 297h4M335 384h1M410 349h2M686 182h3M305 335h1M502 337h3M377 388h3M356 358h3M306 324h2M358 372h1M490 283h4M329 352h5M423 360h5M327 369h4M474 328h1M490 311h2M385 393h4M515 331h1M392 374h4M469 318h1M448 280h1M322 343h2M459 273h2M387 330h3M360 315h3M368 356h3M572 230h3M319 342h1M671 249h4M484 333h3M494 269h1M454 317h2M374 330h2M602 218h5M556 249h1M349 333h4M560 276h1M297 343h1M391 371h1M320 305h3M623 220h1M841 171h5M485 321h5M409 347h3M346 327h5M317 314h4M393 365h4M359 347h1M515 328h2M295 395h4M631 261h3M698 192h1M594 260h5M418 323h2M292 376h3M513 256h4M561 259h2M296 393h1M344 352h3M340 289h2M434 275h1M433 275h2M308 409h3M487 237h5M341 349h1M598 258h3M657 256h2M341 399h1M480 305h1M802 201h4M584 221h1M318 300h2M591 287h4M465 286h2M453 336h2M600 280h2M802 161h5M460 302h2M300 373h1M598 301h3M299 369h2M405 298h3M371 333h2M836 179h1M444 348h2M467 343h2M434 318h4M387 338h3M428 362h1M371 311h3M313 418h2M418 352h1M325 403h1M333 395h5M327 408h3M593 285h3M423 318h2M445 318h5M324 287h1M407 331h4M445 259h1M379 316h2M539 285h3M434 343h2M358 309h2M299 406h3M307 316h2M371 374h1M793 187h1M299 382h1M372 349h5M677 197h2M384 327h3M457 332h1M531 262h2M598 286h1M310 374h1M343 400h1M535 227h4M349 357h3M300 412h3M380 333h2M288 325h2M445 342h2M388 391h5M353 276h2M323 395h1M570 230h5M321 406h2M461 279h2M610 287h3M345 295h2M524 295h3M569 299h4M356 290h2M681 179h4M316 347h4M549 302h2M357 384h1M296 325h3M373 341h4M363 362h1M371 323h2M287 372h2M696 222h2M372 350h2M424 277h4M288 313h5M346 288h3M388 368h1M387 302h3M346 323h1M352 364h1M548 254h5M322 408h4M384 328h4M586 289h4M387 357h1M432 368h1M342 287h2M339 334h1M847 178h2M463 305h3M491 347h3M522 279h2M445 352h4M557 241h3M635 231h3M374 296h2M354 347h1M443 305h1M302 326h1M352 370h4M479 329h5M438 280h1M763 221h2M365 376h2M292 412h1M353 378h3M470 352h2M393 357h1M616 247h3M337 377h1M566 257h1M327 305h2M300 327h3M342 378h3M426 281h3M603 288h2M836 190h1M368 298h3M338 317h5M309 415h2M431 278h3M322 361h2M501 269h3M367 302h2M294 398h1M344 280h2M584 228h3M290 369h5M370 326h2M429 329h1M362 285h1M345 310h2M340 366h3M363 391h5M317 315h2M489 288h1M397 305h1M300 347h1M470 276h1M460 352h5M904 166h2M319 370h2M378 344h5M322 321h1M312 346h5M376 318h2M719 215h2M420 299h5M610 257h1M423 349h3M295 389h3M646 278h4M462 338h3M318 312h2M375 324h2M352 319h2M457 284h3M317 395h1M437 356h1M406 345h1M641 211h3M745 215h1M352 322h4M370 344h1M340 405h2M353 295h2M452 307h2M360 374h1M392 362h2M509 321h1M641 281h4M352 268h3M538 303h3M585 269h1M788 167h4M771 175h4M830 147h1M363 395h1M561 316h3M503 308h2M383 378h1M301 323h1M460 295h1M347 344h1M527 328h2M540 296h3M779 189h4M582 271h4M352 291h1M364 287h2M405 284h5M348 292h3M509 270h3M362 376h2M301 336h1M356 330h3M351 390h5M848 162h1M538 242h1M596 259h2M640 243h2M321 308h2M380 372h3M360 369h1M771 171h5M453 292h3M372 301h2M310 362h1M585 243h4M293 349h1M317 317h1M410 342h4M502 339h2M469 332h2M495 244h2M461 301h1M702 193h3M668 218h4M289 366h1M387 257h1M430 289h2M307 326h4M430 326h1M583 262h5M565 217h1M847 195h2M406 306h2M510 319h2M336 348h3M856 151h5M355 309h1M396 310h1M539 255h2M364 386h2M491 344h1M310 317h1M359 317h1M306 412h2M808 180h2M689 202h5M410 340h3M810 152h2M662 241h2M289 356h3M647 242h1M589 215h3M481 331h5M405 306h3M493 309h1M549 227h1M342 337h2M830 178h1M409 344h2M475 295h1M435 291h1M439 345h1M438 365h1M722 210h4M399 376h5M332 373h3M316 306h3M357 289h2M482 346h3M304 399h2M391 296h3M479 333h4M367 284h5M371 360h3M470 308h2M508 257h3M419 348h1M415 293h1M500 304h1M399 355h2M495 308h4M373 310h2M468 260h2M375 373h1M352 296h2M334 400h3M389 298h5M692 233h3M361 350h3M339 329h1M372 278h5M454 266h1M294 389h1M551 247h3M420 276h2M504 327h3M505 342h1M651 240h2M762 204h3M341 397h1M386 345h2M425 342h5M377 325h1M442 322h4M355 290h1M430 324h5M399 276h3M358 386h5M292 401h1M473 283h3M287 378h1M528 294h1M344 310h2M676 251h2M570 251h2M387 334h2M655 269h1M702 223h3M462 293h2M424 265h1M317 323h4M348 387h1M472 306h2M339 335h2M374 320h1M288 389h1M302 309h2M601 220h5M346 318h2M336 362h5M504 257h1M493 309h1M358 282h2M527 255h2M358 399h4M511 279h3M319 409h2M449 364h3M452 267h2M710 190h1M361 375h1M798 162h1M403 362h2M379 336h1M414 328h3M435 286h1M666 272h3M352 386h1M422 316h5M380 277h2M434 330h3M398 379h3M475 344h3M323 366h1M352 367h5M497 271h2M620 288h5M343 327h2M351 305h4M338 342h1M295 409h1M307 392h2M363 322h1M507 315h1M363 302h1M321 415h2M675 253h3M382 339h3M345 374h2M301 330h2M813 178h1M309 347h2M676 209h2M654 248h2M411 312h2M311 383h3M834 161h1M404 305h3M316 311h4M369 353h4M349 302h2M401 283h2M515 299h4M401 327h1M319 290h1M706 209h1M332 387h1M453 274h2M454 335h1M386 344h2M364 354h4M288 371h3M522 293h4M301 317h2M378 333h1M366 295h2M343 379h5M500 274h1M501 303h1M298 337h2M309 389h3M293 399h5M393 357h1M568 225h2M287 417h5M363 319h5M404 274h1M289 390h3M346 355h3M660 253h2M296 416h2M444 271h1M302 315h1M288 335h4M684 195h3M414 282h3M377 280h1M395 353h1M753 199h5M327 392h3M582 272h2M412 315h2M420 343h2M301 321h2M611 293h1M553 284h3M337 381h3M458 315h3M346 281h1M388 393h1M549 289h3M376 345h1M710 182h2M292 318h2M709 246h2M355 396h2M529 257h1M826 190h2M580 279h2M377 281h1M352 341h2M624 204h1M471 286h1M861 177h1M459 280h5M508 250h2M400 268h1M295 377h3M448 303h2M885 177h1M450 279h3M459 286h2M398 293h1M487 332h3M532 292h1M420 374h1M389 357h3M685 233h4M737 199h4M437 306h3M516 265h1M614 246h2M397 337h3M427 299h4M504 286h1M321 418h5M468 341h2M429 260h4M566 231h3M289 331h3M610 237h3M553 247h3M309 345h3M710 219h1M313 380h5M345 354h3M428 297h2M578 290h1M515 303h3M310 328h2M375 284h1M404 321h4M307 303h3M499 327h4M381 371h1M331 351h5M342 311h2M593 227h3M302 343h5M596 270h2M330 355h1M505 306h4M363 391h1M327 300h2M395 351h2M563 309h5M579 258h2M526 262h1M295 381h2M350 301h2M394 261h1M336 372h2M312 320h2M351 367h3M376 386h1M501 262h1M494 280h5M419 358h1M350 351h2M672 191h1M402 340h3M557 304h4M729 177h5M581 298h3M308 330h1M327 287h4M433 254h1M617 244h3M339 350h1M339 274h3M343 347h1M718 247h2M375 267h1M438 329h5M558 276h2M573 301h3M415 355h2M560 294h3M394 353h5M689 252h2M443 268h1M782 164h2M844 145h3M311 377h3M533 327h2M326 384h1M466 317h1M579 236h2M534 309h1M369 311h5M332 382h2M566 249h2M398 362h2M420 352h3M418 321h4M349 355h5M561 238h3M522 316h2M289 392h1M565 261h2M305 344h4M401 350h2M460 339h1M419 353h2M474 329h1M563 293h1M372 294h2M482 312h5M338 342h3M350 289h1M289 367h5M395 350h1M292 364h1M455 252h2M355 402h1M427 302h2M494 301h5M575 263h3M596 236h3M384 334h5M384 361h1M470 340h2M393 370h1M425 305h2M297 382h2M693 224h3M438 313h3M436 278h1M448 291h2M349 304h2M511 309h1M397 293h4M490 273h2M343 317h2M860 156h1M364 324h2M322 353h2M519 261h1M320 359h2M471 267h2M300 370h4M317 408h2M321 294h1M287 319h1M325 390h2M516 251h5M453 297h3M333 370h4M303 328h1M344 373h1M470 298h3M373 381h2M639 219h3M295 405h1M558 312h1M557 313h4M455 295h2M417 316h2M706 248h3M345 343h3M712 229h1M332 301h2M355 296h5M795 199h3M438 277h3M327 401h2M292 326h3M373 295h3M620 286h1M344 315h4M313 357h5M331 368h3M459 271h1M307 289h1M432 305h3M785 173h2M350 384h1M289 402h1M322 319h2M375 308h4M481 329h4M348 374h2M408 371h2M323 348h3M517 255h3M510 342h3M536 234h1M366 349h2M707 199h2M321 308h2M347 342h2M506 295h2M294 360h3M498 305h4M301 343h3M593 217h3M355 282h1M292 368h2M380 306h3M466 348h4M491 307h5M402 311h5M515 242h3M321 412h2M339 370h2M411 262h1M341 288h2M616 297h1M332 326h2M326 301h4M378 302h2M404 271h5M321 420h4M529 277h4M319 381h2M422 333h2M332 302h2M363 336h2M475 287h2M457 317h2M365 336h2M319 403h1M297 369h1M619 241h3M461 317h1M433 344h1M480 283h3M384 351h4M398 352h1M641 249h4M473 289h2M310 323h2M317 311h1M631 256h2M289 382h2M546 236h5M311 357h3M388 279h3M479 330h3M555 292h4M399 311h3M402 273h3M697 203h3M463 272h2M328 284h2M477 265h2M645 267h5M497 287h4M631 231h2M390 376h2M359 350h3M373 303h1M413 334h4M378 297h2M444 321h5M437 340h1M438 290h2M624 204h2M329 295h3M527 263h2M500 259h3M452 338h2M816 169h3M290 417h1M389 295h2M444 315h1M317 382h2M529 229h3M307 288h2M301 417h3M289 332h1M574 225h1M446 327h2M370 324h2M385 333h2M577 252h2M440 268h4M407 376h5M893 150h3M1080 158h1M901 156h4M736 160h6M992 162h6M958 141h4M770 185h6M818 191h6M794 173h4M1061 158h2M860 140h2M860 183h6M1001 149h1M1049 196h1M807 162h6M957 130h6M1147 165h3M765 158h1M898 147h1M1179 164h1M826 158h1M798 168h4M1045 171h1M776 187h6M988 157h6M1197 177h3M1196 175h3M1061 173h6M731 158h1M734 171h6M845 189h2M1116 167h2M872 143h6M947 140h6M1031 173h2M1039 136h1M899 133h1M862 135h1M986 140h2M716 175h4M1100 151h2M857 136h2M718 146h1M874 170h2M1074 161h6M1066 150h1M988 198h1M1188 193h4M865 152h3M764 143h3M880 150h2M1149 171h1M870 192h6M1000 172h2M964 134h1M895 182h1M1030 182h1M876 141h2M805 187h4M716 167h1M821 173h1M777 178h1M972 138h4M968 135h6M771 170h3M711 190h2M816 179h2M930 136h3M989 143h1M1062 147h6M716 192h3M1063 158h3M895 167h3M1168 187h1M868 149h4M1018 140h2M706 146h6M776 135h6M790 171h2M995 171h1M1007 179h1M834 156h1M736 146h2M718 128h4M820 160h4M785 141h2M927 141h2M1103 187h6M1045 196h2M948 145h3M999 162h6M798 198h1M922 151h2M1083 191h1M735 192h2M824 148h1M718 143h1M1156 177h3M736 146h4M751 182h4M944 150h4M957 148h6M967 161h1M1098 188h3M779 193h6M933 136h1M716 162h1M1096 170h1M931 152h1M951 157h3M951 152h1M1053 163h2M841 159h1M912 135h2M826 191h2M968 180h6M1144 176h6M916 165h3M962 195h2M861 188h1M1166 186h4M918 131h2M728 137h1M927 162h2M1069 174h2M1006 146h1M755 141h2M806 166h2M814 165h6M726 172h6M785 136h2M775 173h6M1130 156h4M1085 186h2M874 170h4M767 193h2M1173 189h2M833 167h4M720 127h2M928 131h6M1061 177h2M850 187h1M881 126h1M1177 175h1M941 140h6M892 145h3M1079 167h1M864 152h4M757 128h4M883 166h1M1108 181h2M962 178h3M1157 178h6M819 195h3M1168 161h2M1056 147h2M982 152h2M920 148h1M1132 190h1M838 168h1M991 128h1M741 162h6M1132 163h6M787 190h4M1019 149h4M1193 173h2M979 157h4M1125 172h4M990 140h1M1196 173h1M989 157h6M791 137h2M710 168h6M747 174h3M939 155h1M1188 191h1M794 191h1M747 146h6M1080 178h1M735 151h2M715 179h2M997 139h1M985 183h3M1093 149h3M991 181h1M1087 166h2M975 180h2M1175 177h4M888 177h1M760 166h1M801 152h1M807 142h2M984 141h3M794 145h2M892 129h4M932 157h2M1197 197h2M971 138h4M765 156h2M887 183h4M872 129h6M777 174h1M719 146h1M869 186h4M1001 174h2M794 176h1M1044 138h6M1032 169h4" stroke="#333" stroke-width="1" fill="none" transform="translate(0,.5)"/>
<path d="M316 406h2M364 298h2M520 278h2M362 287h3M382 384h3M324 389h3M490 286h1M346 269h1M768 191h2M331 400h3M298 314h3M539 253h2M584 299h1M486 330h2M369 366h3M377 316h2M355 317h2M650 224h3M341 290h2M303 423h3M293 378h2M823 185h3M384 306h1M476 251h1M659 187h2M530 274h3M425 280h3M481 297h2M529 246h1M584 242h1M609 292h2M444 335h3M434 324h1M433 295h3M545 243h3M324 288h2M320 388h3M555 220h1M350 320h1M436 302h3M601 222h1M327 390h2M793 174h2M338 405h2M495 289h3M557 227h1M321 372h2M478 327h2M599 245h1M482 264h2M399 362h1M359 372h2M318 313h3M560 275h2M349 341h1M301 306h1M587 293h2M336 379h1M296 402h3M436 262h3M440 282h3M493 326h2M407 305h2M367 315h2M312 298h2M717 163h3M591 213h2M464 288h1M313 318h3M406 318h3M321 320h1M884 152h3M472 353h2M394 350h2M379 331h1M504 331h2M569 224h1M304 362h3M658 243h3M370 293h3M343 347h2M423 332h3M378 368h1M786 195h1M519 277h3M384 331h3M348 292h3M447 279h3M360 373h3M381 293h1M366 386h1M441 348h1M388 363h2M372 317h2M376 301h3M379 291h2M694 228h3M526 269h3M354 279h2M357 338h1M460 335h2M300 312h1M349 374h2M377 374h3M315 348h1M291 370h3M615 265h1M537 289h3M382 317h3M541 286h3M360 324h2M372 318h1M484 254h2M510 270h3M448 351h3M728 249h1M441 291h2M497 344h2M377 383h3M311 387h3M396 375h3M290 322h1M385 385h3M611 283h1M496 274h3M287 365h1M377 292h2M323 393h3M587 287h3M317 302h1M345 370h3M332 334h3M328 355h1M435 366h2M816 186h3M452 346h2M564 315h3M291 384h1M329 363h3M342 300h1M351 321h2M374 380h1M314 311h3M327 279h3M605 251h3M511 323h2M430 351h2M406 372h1M497 339h3M892 159h3M451 312h3M325 329h3M587 292h2M335 383h1M406 378h2M303 387h1M354 368h1M375 338h2M566 312h1M485 301h2M507 308h2M392 298h3M422 259h2M455 301h1M572 265h3M313 364h2M349 327h1M290 403h3M550 265h1M358 311h1M520 326h3M398 281h3M508 251h3M619 235h1M666 250h1M418 364h3M300 351h1M613 207h2M354 394h2M342 296h1M367 335h1M408 290h2M374 376h2M331 365h3M331 381h2M711 211h1M324 382h2M543 264h3M353 386h2M409 333h1M462 287h2M662 217h1M435 270h3M602 268h3M476 351h2M306 400h2M658 253h2M514 314h1M320 388h2M372 324h2M318 415h1M606 211h2M324 351h1M334 376h1M395 369h3M295 327h1M377 361h2M628 262h2M334 397h1M546 263h1M412 343h3M462 325h3M304 399h3M346 359h2M433 315h2M439 264h1M395 376h2M288 368h2M344 294h3M492 322h3M301 337h3M401 351h2M388 336h2M513 313h3M358 333h3M532 249h2M306 306h3M374 281h3M488 274h2M408 255h1M374 338h1M309 331h2M358 360h1M299 395h3M458 344h1M550 227h1M330 306h2M414 270h3M422 363h2M295 383h1M355 346h3M359 356h3M364 368h2M347 332h2M297 421h1M547 251h3M330 350h3M353 301h2M419 322h1M394 377h2M738 158h3M402 339h2M454 324h1M385 378h2M296 365h1M318 372h1M395 265h3M590 276h3M341 389h1M294 325h1M429 311h2M672 196h1M352 359h2M452 273h1M540 292h2M395 313h1M612 248h3M316 317h3M301 332h3M716 199h3M374 309h3M332 394h1M291 409h2M321 302h3M505 298h2M480 265h2M296 297h2M399 344h1M332 332h2M356 379h1M357 401h1M614 291h1M745 222h2M301 343h2M692 219h3M443 341h3M312 419h3M526 250h3M454 319h3M309 402h2M439 325h1M321 334h3M290 417h1M356 262h2M392 325h1M557 237h3M542 292h1M301 382h3M326 325h3M567 230h2M443 267h1M307 402h3M529 244h3M353 327h3M380 317h1M557 300h2M316 408h1M295 393h3M881 160h3M311 374h3M414 326h2M349 353h2M703 224h2M317 394h3M301 398h2M413 366h2M593 263h1M382 349h1M461 293h1M1106 161h2M915 165h2M981 136h1M801 156h1M932 149h3M1032 144h2M936 143h1M703 196h4M796 148h4M759 131h4M902 170h2M926 165h2M742 173h2M1028 132h2M796 171h1M798 135h3M986 133h4M805 151h3M887 155h1M849 186h2M716 161h3M929 157h2M1140 182h3M738 160h4M768 146h4M897 145h2M887 172h4M1034 165h1M806 142h2M1124 184h4M843 175h4M1051 191h3M793 176h1M777 136h4M944 138h4M704 178h3M1070 164h4M1021 161h4M1072 198h4M931 165h3M1005 149h2M750 159h3M935 165h1M876 140h2M703 137h1M721 134h4M1062 162h1M1032 132h1M1062 191h3M1087 198h3M1179 191h4M819 175h1M834 126h4M869 158h1M776 135h2M890 144h4M794 184h4M978 145h4M718 146h4M859 191h1M711 132h4M726 155h4M709 185h4M706 192h1M882 156h1M776 156h2M867 145h1M1131 185h3M1110 187h3M1155 187h3M815 194h4M1127 194h4" stroke="#00f" stroke-width="1" fill="none" transform="translate(0,.5)"/>
<path d="M277.8 450.3L286.8 446.5L273.3 446.5ZM304.2 439.1L313.2 435.3L299.7 435.3ZM330.1 428.2L339.1 424.4L325.6 424.4ZM355.6 417.4L364.6 413.6L351.1 413.6ZM380.6 406.8L389.6 403L376.1 403ZM405.1 396.5L414.1 392.6L400.6 392.6ZM429.3 386.2L438.3 382.4L424.8 382.4ZM453 376.2L462 372.4L448.5 372.4ZM476.3 366.4L485.3 362.6L471.8 362.6ZM499.2 356.7L508.2 352.9L494.7 352.9ZM521.7 347.2L530.7 343.4L517.2 343.4ZM543.8 337.8L552.8 334L539.3 334ZM565.5 328.6L574.5 324.8L561 324.8ZM586.9 319.6L595.9 315.8L582.4 315.8ZM607.9 310.7L616.9 306.9L603.4 306.9ZM628.5 302L637.5 298.2L624 298.2ZM648.7 293.5L657.7 289.7L644.2 289.7ZM668.6 285.1L677.6 281.3L664.1 281.3ZM688.1 276.8L697.1 273L683.6 273ZM707.4 268.7L716.4 264.9L702.9 264.9ZM726.2 260.7L735.2 256.9L721.7 256.9ZM744.8 252.9L753.8 249.1L740.3 249.1ZM763 245.2L772 241.4L758.5 241.4ZM780.9 237.6L789.9 233.8L776.4 233.8ZM798.5 230.2L807.5 226.3L794 226.3ZM815.7 222.8L824.7 219L811.2 219ZM832.7 215.7L841.7 211.9L828.2 211.9ZM849.4 208.6L858.4 204.8L844.9 204.8ZM865.8 201.7L874.8 197.9L861.3 197.9ZM881.9 194.9L890.9 191.1L877.4 191.1ZM897.7 188.2L906.7 184.4L893.2 184.4ZM913.3 181.6L922.3 177.8L908.8 177.8ZM928.6 175.2L937.6 171.3L924.1 171.3ZM943.6 168.8L952.6 165L939.1 165ZM958.3 162.6L967.3 158.8L953.8 158.8ZM972.8 156.4L981.8 152.6L968.3 152.6ZM987 150.4L996 146.6L982.5 146.6Z" fill="#333"/>
<clipPath id="ctr"><polygon points="287,451 600,317 908,184.5 968,184.5 968,881 287,881"/></clipPath>
<g clip-path="url(#ctr)"><path d="M262 457.6L236.3 495.6L264 517.5L307.6 497.3L280 475.4L236.3 495.6M262 457.6L264 517.5M262 457.6L307.6 497.3M262 457.6L280 475.4M288.8 446.2L263.6 483.6L290.8 505.2L333.7 485.3L306.5 463.8L263.6 483.6M288.8 446.2L290.8 505.2M288.8 446.2L333.7 485.3M288.8 446.2L306.5 463.8M315.2 435.1L290.4 471.8L317.1 493L359.3 473.5L332.6 452.3L290.4 471.8M315.2 435.1L317.1 493M315.2 435.1L359.3 473.5M315.2 435.1L332.6 452.3M341.1 424.1L316.7 460.2L343 481L384.4 461.8L358.2 441.1L316.7 460.2M341.1 424.1L343 481M341.1 424.1L384.4 461.8M341.1 424.1L358.2 441.1M366.6 413.4L342.6 448.8L368.4 469.3L409.1 450.4L383.3 430L342.6 448.8M366.6 413.4L368.4 469.3M366.6 413.4L409.1 450.4M366.6 413.4L383.3 430M391.6 402.8L368 437.7L393.4 457.7L433.3 439.2L408 419.1L368 437.7M391.6 402.8L393.4 457.7M391.6 402.8L433.3 439.2M391.6 402.8L408 419.1M416.1 392.4L393 426.7L417.9 446.4L457.2 428.2L432.3 408.5L393 426.7M416.1 392.4L417.9 446.4M416.1 392.4L457.2 428.2M416.1 392.4L432.3 408.5M440.3 382.2L417.6 415.9L442 435.2L480.6 417.4L456.2 398L417.6 415.9M440.3 382.2L442 435.2M440.3 382.2L480.6 417.4M440.3 382.2L456.2 398M464 372.2L441.7 405.2L465.7 424.3L503.6 406.7L479.6 387.7L441.7 405.2M464 372.2L465.7 424.3M464 372.2L503.6 406.7M464 372.2L479.6 387.7M510.2 352.6L488.7 384.6L511.8 402.9L548.5 386L525.3 367.6L488.7 384.6M510.2 352.6L511.8 402.9M510.2 352.6L548.5 386M510.2 352.6L525.3 367.6M532.7 343.1L511.5 374.5L534.3 392.5L570.3 375.9L547.5 357.8L511.5 374.5M532.7 343.1L534.3 392.5M532.7 343.1L570.3 375.9M532.7 343.1L547.5 357.8M554.8 333.8L534 364.6L556.4 382.3L591.8 366L569.4 348.2L534 364.6M554.8 333.8L556.4 382.3M554.8 333.8L591.8 366M554.8 333.8L569.4 348.2M576.5 324.6L556.1 354.9L578.1 372.3L612.8 356.2L590.9 338.8L556.1 354.9M576.5 324.6L578.1 372.3M576.5 324.6L612.8 356.2M576.5 324.6L590.9 338.8M597.9 315.6L577.8 345.3L599.4 362.4L633.5 346.6L611.9 329.5L577.8 345.3M597.9 315.6L599.4 362.4M597.9 315.6L633.5 346.6M597.9 315.6L611.9 329.5M618.9 306.7L599.1 335.9L620.4 352.7L653.9 337.2L632.7 320.4L599.1 335.9M618.9 306.7L620.4 352.7M618.9 306.7L653.9 337.2M618.9 306.7L632.7 320.4M639.5 298L620.1 326.7L640.9 343.2L673.9 328L653 311.5L620.1 326.7M639.5 298L640.9 343.2M639.5 298L673.9 328M639.5 298L653 311.5M659.7 289.4L640.7 317.6L661.2 333.9L693.5 318.9L673 302.7L640.7 317.6M659.7 289.4L661.2 333.9M659.7 289.4L693.5 318.9M659.7 289.4L673 302.7M679.6 281L660.9 308.7L681 324.7L712.8 310L692.7 294L660.9 308.7M679.6 281L681 324.7M679.6 281L712.8 310M679.6 281L692.7 294M699.1 272.7L680.8 300L700.5 315.7L731.8 301.2L712 285.5L680.8 300M699.1 272.7L700.5 315.7M699.1 272.7L731.8 301.2M699.1 272.7L712 285.5M718.4 264.6L700.3 291.4L719.7 306.8L750.4 292.6L731 277.2L700.3 291.4M718.4 264.6L719.7 306.8M718.4 264.6L750.4 292.6M718.4 264.6L731 277.2M737.2 256.6L719.5 283L738.6 298.1L768.8 284.1L749.7 269L719.5 283M737.2 256.6L738.6 298.1M737.2 256.6L768.8 284.1M737.2 256.6L749.7 269M755.8 248.8L738.3 274.7L757.1 289.5L786.7 275.8L768 260.9L738.3 274.7M755.8 248.8L757.1 289.5M755.8 248.8L786.7 275.8M755.8 248.8L768 260.9M774 241.1L756.8 266.5L775.3 281.1L804.4 267.6L786 253L756.8 266.5M774 241.1L775.3 281.1M774 241.1L804.4 267.6M774 241.1L786 253M791.9 233.5L775 258.5L793.2 272.8L821.8 259.6L803.7 245.2L775 258.5M791.9 233.5L793.2 272.8M791.9 233.5L821.8 259.6M791.9 233.5L803.7 245.2M809.5 226.1L792.9 250.6L810.7 264.7L838.9 251.7L821.1 237.6L792.9 250.6M809.5 226.1L810.7 264.7M809.5 226.1L838.9 251.7M809.5 226.1L821.1 237.6M826.7 218.8L810.5 242.9L828 256.7L855.6 244L838.1 230.1L810.5 242.9M826.7 218.8L828 256.7M826.7 218.8L855.6 244M826.7 218.8L838.1 230.1M843.7 211.6L827.8 235.3L844.9 248.9L872.1 236.3L854.9 222.7L827.8 235.3M843.7 211.6L844.9 248.9M843.7 211.6L872.1 236.3M843.7 211.6L854.9 222.7M860.4 204.6L844.7 227.8L861.6 241.2L888.3 228.9L871.4 215.5L844.7 227.8M860.4 204.6L861.6 241.2M860.4 204.6L888.3 228.9M860.4 204.6L871.4 215.5M876.8 197.6L861.4 220.5L878 233.6L904.2 221.5L887.6 208.4L861.4 220.5M876.8 197.6L878 233.6M876.8 197.6L904.2 221.5M876.8 197.6L887.6 208.4M892.9 190.8L877.8 213.3L894.1 226.2L919.8 214.3L903.5 201.4L877.8 213.3M892.9 190.8L894.1 226.2M892.9 190.8L919.8 214.3M892.9 190.8L903.5 201.4M908.7 184.1L893.8 206.2L909.9 218.9L935.2 207.2L919.2 194.5L893.8 206.2M908.7 184.1L909.9 218.9M908.7 184.1L935.2 207.2M908.7 184.1L919.2 194.5M924.3 177.6L909.7 199.2L925.4 211.7L950.3 200.2L934.5 187.7L909.7 199.2M924.3 177.6L925.4 211.7M924.3 177.6L950.3 200.2M924.3 177.6L934.5 187.7M939.6 171.1L925.2 192.4L940.6 204.7L965.1 193.3L949.6 181.1L925.2 192.4M939.6 171.1L940.6 204.7M939.6 171.1L965.1 193.3M939.6 171.1L949.6 181.1M954.6 164.8L940.4 185.7L955.6 197.7L979.6 186.6L964.5 174.6L940.4 185.7M954.6 164.8L955.6 197.7M954.6 164.8L979.6 186.6M954.6 164.8L964.5 174.6M969.3 158.5L955.4 179.1L970.4 190.9L994 180L979 168.2L955.4 179.1M969.3 158.5L970.4 190.9M969.3 158.5L994 180M969.3 158.5L979 168.2M983.8 152.4L970.2 172.6L984.8 184.2L1008 173.5L993.3 161.9L970.2 172.6M983.8 152.4L984.8 184.2M983.8 152.4L1008 173.5M983.8 152.4L993.3 161.9M998 146.4L984.6 166.2L999.1 177.6L1021.8 167.1L1007.4 155.7L984.6 166.2M998 146.4L999.1 177.6M998 146.4L1021.8 167.1M998 146.4L1007.4 155.7M1012 140.5L998.9 160L1013 171.2L1035.4 160.8L1021.2 149.6L998.9 160M1012 140.5L1013 171.2M1012 140.5L1035.4 160.8M1012 140.5L1021.2 149.6" stroke="#00f" stroke-width="1" fill="none"/></g>
<g fill="none" stroke-width="1" transform="translate(0,.5)">
<path d="M927 185h41M968 185h57M905 186h42M895 190h50M1010 190h36M1046 190h49M915 191h19M1004 191h79M1076 194h38M884 195h94M1053 195h22M879 197h52M1022 197h73M894 199h29M1127 199h68M872 200h110M1018 201h90M1108 201h76M860 205h20M1145 205h52M1134 206h58M930 207h66M881 208h27M850 209h100M950 209h92M935 210h59M843 212h86" stroke="#0ff"/>
<path d="M902 187h52M881 196h88M982 199h105" stroke="#00f"/>
<path d="M893 191h22M933 192h68M1069 193h79M886 194h84M1075 195h77M969 196h77M1099 196h41M1095 197h74M876 198h76M1087 199h40M982 200h32M1014 200h82M1096 200h96M1192 200h24M869 201h44M1184 201h32M1057 202h30M1087 202h60M1147 202h28M1175 202h41M1045 203h30M1075 203h61M1136 203h57M1193 203h23M862 204h67M929 204h87M1016 204h59M1076 204h91M1167 204h44M1211 204h5M880 205h93M1011 205h108M1120 205h25M1197 205h19M957 206h25M982 206h41M1023 206h72M1096 206h38M1192 206h24M1128 207h85M1213 207h3M908 208h79M987 208h45M1128 208h29M1157 208h24M1181 208h25M1206 208h10M1115 209h39M1154 209h62M875 210h60M1038 210h29M1067 210h104M1171 210h45M949 211h37M1062 211h75M1137 211h56M1193 211h23M987 212h39M1113 212h60M1173 212h35M1208 212h8M841 213h107M1140 213h75M1215 213h1" stroke="#f00"/>
<path d="M982 200h32M1014 200h82M869 201h44M1087 202h60M1045 203h30M1075 203h61M1136 203h57M862 204h67M929 204h87M1016 204h59M880 205h93M908 208h79M987 208h45M875 210h60M949 211h37M1062 211h75M1137 211h56M987 212h39M841 213h107" stroke="#0ff" stroke-dasharray="1 1"/>
<path d="M832 215H929" stroke="#0ff"/>
<path d="M834 214H1042" stroke="#0ff" stroke-dasharray="5 2"/>
<path d="M839 214H1042" stroke="#f00" stroke-dasharray="2 5"/>
<path d="M1040 213H1216M846 209H1216M905 185H962" stroke="#f00"/>
<path d="M886 191H1030M872 197H1010M880 203H1000" stroke="#0ff"/>
</g>
<path d="M1216 200 L1216 214 L1168 214 L1182 206 L1198 200Z" fill="#f00"/>
<g stroke="#f00" stroke-width="1" fill="none"><path d="M1158.3 185.8L1082.4 158.3" stroke-dasharray="1 5 2 4 1 3"/><path d="M1196.2 203.7L1057.7 186.2" stroke-dasharray="1 5 2 4 1 3"/><path d="M1122.8 196.6L980.6 182" stroke-dasharray="1 4 1 9 1 2"/><path d="M1130.8 190.8L1011.5 169" stroke-dasharray="1 3 2 9 1 2"/><path d="M1175.2 200L1001.3 173.3" stroke-dasharray="1 4 2 4 1 8"/><path d="M1171.5 192.2L1118.5 174.9" stroke-dasharray="1 4 1 4 1 2"/><path d="M1172.4 195.5L1104.2 178.3" stroke-dasharray="1 7 1 6 1 3"/><path d="M1181.4 193.2L1061.9 146.3" stroke-dasharray="1 3 1 9 1 3"/><path d="M1188.6 192.8L1103.6 148.9" stroke-dasharray="1 7 2 9 1 8"/><path d="M1159 199L1021 181.4" stroke-dasharray="1 7 2 6 1 3"/><path d="M1187.8 203.1L994.2 181.6" stroke-dasharray="1 7 1 4 1 8"/><path d="M1178.6 199.9L1014.7 171.6" stroke-dasharray="1 3 2 6 1 8"/><path d="M1201.2 198.3L1124.6 152.6" stroke-dasharray="1 3 1 4 1 8"/><path d="M1167.2 186L1079.1 148.4" stroke-dasharray="1 4 2 9 1 3"/><path d="M1193.1 198.7L1079.9 159" stroke-dasharray="1 4 2 6 1 3"/><path d="M1174.8 188.9L1082.9 148.9" stroke-dasharray="1 3 1 6 1 8"/><path d="M1158 200.3L1043.3 188.7" stroke-dasharray="1 3 2 9 1 2"/><path d="M1200.1 198.3L1125.2 156.8" stroke-dasharray="1 7 2 6 1 8"/><path d="M1207 202.8L1064.9 138.1" stroke-dasharray="1 4 1 4 1 8"/><path d="M1174 194.8L1062.6 163.6" stroke-dasharray="1 5 2 9 1 2"/><path d="M1181.1 186.9L1121.2 152.2" stroke-dasharray="1 3 1 4 1 2"/><path d="M1201.6 204.1L1005.1 173.8" stroke-dasharray="1 5 1 9 1 2"/><path d="M1155.5 186.9L1034.6 147.4" stroke-dasharray="1 5 2 6 1 3"/><path d="M1147.3 198.2L976.1 178.2" stroke-dasharray="1 3 1 9 1 3"/><path d="M1188.3 194.2L1105.3 156" stroke-dasharray="1 3 1 9 1 2"/><path d="M1141.9 189.8L1046.8 168.4" stroke-dasharray="1 5 1 6 1 8"/><path d="M1180.9 202.7L1031.5 187.6" stroke-dasharray="1 7 1 4 1 8"/><path d="M1153.2 182.9L1075.8 153.6" stroke-dasharray="1 5 2 4 1 2"/><path d="M1171.9 197.6L1049 173" stroke-dasharray="1 4 2 4 1 3"/><path d="M1170.4 189.8L1111.7 168" stroke-dasharray="1 3 2 4 1 8"/></g>
<path d="M1203 184h1M1128 172h1M1171 177h1M1192 168h1M1094 182h1M1196 192h2M1173 196h1M1153 196h1M1084 166h1M1047 170h1M1133 180h2M1116 183h2M1167 197h3M1107 164h2M1025 165h1M1165 188h2M1174 197h2M1195 199h1M1105 182h2M1188 180h2M1148 189h2M1171 195h2M1140 174h1M1118 190h1M1106 169h2M1170 196h3M1111 190h3M1188 167h1M1039 187h1M1074 176h2M1118 175h1M1188 179h2M1183 188h1M1203 199h1M1191 190h1M1211 179h1M1108 187h2M1071 192h2M1049 173h1M1107 163h1M1115 182h2M1050 191h3M1205 193h1M1037 197h1M1113 182h1M1136 197h2M1114 191h1M1093 195h2M1202 189h2M1127 198h2M1181 185h1M1047 192h2M1000 171h1M1156 197h1M1113 168h2M1073 162h1M1027 174h1M1198 172h1M1210 178h2M1123 166h2M1174 182h1M1061 197h1M1193 192h3M1179 199h3M1085 170h3M1063 197h1M1151 169h1M1210 182h2M1114 188h1M1078 183h3M1141 191h1M1181 177h1" stroke="#f00" stroke-width="1" fill="none" transform="translate(0,.5)"/>
<path d="M1086 199h3M1194 173h3M1104 163h1M1191 197h1M1158 199h3M1171 192h3M1077 187h1M1117 183h3M1098 193h2M1128 193h2M1074 192h1M1099 191h2M1023 187h2M1202 177h1M1208 196h2M1105 163h2M1202 189h3" stroke="#00f" stroke-width="1" fill="none" transform="translate(0,.5)"/>
<path d="M1000 189h8M1147 194h4M926 198h3M984 199h2M1015 194h8M1082 182h14M1093 198h6M933 191h4M1044 178h2M1158 198h3M940 195h4M957 193h4M1063 177h14M1110 195h4M989 169h2M1059 195h2M949 175h14M977 178h2M929 187h14M1046 198h8M1122 195h6M1068 192h8M962 198h8M1158 176h10M1137 198h14M994 192h14M1119 191h14M939 180h10M934 192h2M963 196h6M945 193h14M969 196h10M1050 183h5M1135 197h4M929 192h3M961 186h5M1134 179h8M982 196h2M1105 188h2M969 198h14M1087 184h5M929 190h5M1037 183h6M988 173h4M1035 179h10M1015 180h2M1094 188h5M993 191h6M1092 190h10M1078 184h2M1155 196h5M931 185h14M1087 195h2M980 193h10M1089 197h5M981 191h14M1011 177h5M1152 184h10M1069 198h10M1154 196h8M971 190h3M942 191h6M1131 178h10M1047 194h5M931 190h10M1072 184h4M925 188h6M953 187h10M974 196h8M1002 195h8M1034 195h3M1151 190h6M1095 194h2M973 191h10M960 193h8M1038 189h10M940 197h4M1081 178h10M1077 180h8M957 190h14M1049 197h8M1029 194h2M968 182h4M1102 198h5M981 189h6M1062 198h10M954 195h10M1082 192h8M1004 198h5M1003 184h6M1154 198h5M945 196h14M967 199h3M1016 198h5M1130 189h3M927 187h4M1063 197h8M1062 193h6M987 197h4M971 194h5M1044 195h14M1042 194h5M1100 189h2M978 181h8M972 187h4M1147 197h4M941 195h10M1032 194h2M1007 198h8M959 177h2M1004 194h6M1072 198h6M1020 177h6M1145 179h8M1003 192h2M1143 180h4M1065 199h3M980 191h4M958 196h4M1158 196h3M960 180h14M1080 182h5M1157 199h2M1024 199h4M995 180h6M1001 179h4M977 187h3M1082 185h8M1009 185h14M1122 198h4M1060 187h14M1060 188h10M993 194h2M1002 179h2M1021 184h8M1034 185h14M1077 186h3M933 195h3M1150 192h14M943 197h2M944 192h6M1075 195h8M1054 184h4M975 192h6M959 190h2M1066 197h3M1011 187h4M952 199h10M1046 185h14M1157 167h14M1092 188h14M999 185h8M1016 185h6M1135 175h6M1132 190h8M935 182h2M1034 193h5M930 193h5M1008 183h14M1080 192h14M1128 191h10M944 189h8M957 193h8M996 192h5M1042 198h2M982 197h8M926 172h6M1055 193h14M1014 186h2M956 172h3M1082 192h10" stroke="#333" stroke-width="1" fill="none" transform="translate(0,.5)"/>
<path d="M1076 211h2M1066 208h1M1156 211h3M1042 211h3M1164 203h1M1052 206h1M1087 206h2M1056 206h2M1063 201h1M1148 211h2M1050 209h3M1071 210h1M1113 206h1M1066 206h1M1055 209h2M1093 206h2M1132 209h1M1104 212h3M1129 205h1M1129 208h3M1109 204h1M1094 204h1M1090 205h1M1127 204h3M1129 212h1M1040 206h3M1056 201h1M1051 207h3M1123 212h2M1068 209h1M1071 205h1M1073 203h1M1065 203h2M1110 205h2M1042 209h1M1081 201h1M1174 204h3M1133 210h2M1133 210h1M1113 202h2M1076 211h2M1137 202h1M1138 209h1M1054 211h1M1085 203h1M1049 212h1M1044 204h1M1116 206h1M1091 205h2M1063 212h1M1164 204h1M1071 212h1M1130 203h3M1078 207h1M1115 203h3M1187 209h3M1099 203h2M1042 209h1M1075 204h2M1141 207h1M1070 203h3M1096 201h1M1070 205h3M1108 212h3M1090 201h3M1097 206h2M1078 205h3M1040 204h1M1128 204h1M1054 204h2M1186 202h1M1041 212h3M1046 210h1M1106 208h3M1067 211h1M1082 209h3M1107 206h2M1127 206h1M1052 211h2M1065 201h2M1078 205h2M1083 205h1M1073 203h1M1139 205h3M1180 212h3M1191 207h1M1112 205h1M1058 202h2M1090 204h1M1141 212h1M1165 205h1M1127 212h1M1081 206h1M1043 205h1M1049 212h1M1106 207h2M1115 209h1M1133 210h1M1125 205h2M1072 201h3M1087 201h1M1161 201h1M1071 211h1M1094 210h3M1153 202h3M1069 210h1M1115 204h1M1075 205h1M1089 209h1M1070 209h1M1168 211h2M1133 201h1M1101 205h1M1137 205h1M1056 204h3M1058 203h3M1107 209h1M1047 212h1M1061 211h1M1058 206h1M1105 201h1M1040 201h3M1135 210h2M1113 211h1M1095 211h2M1122 207h2M1084 207h1M1075 207h1M1160 201h1M1147 205h3M1092 211h3M1084 202h1M1067 205h3M1076 206h3M1075 206h1M1111 205h1M1076 206h1M1075 210h3M1070 202h1M1115 210h1M1167 212h1M1067 212h3M1063 203h3M1137 208h3M1128 203h1M1099 208h1M1097 203h1M1054 208h1M1044 210h2M1095 210h3M1056 206h1M1147 209h3M1068 209h3M1047 203h2M1077 212h1M1133 207h3M1053 209h3M1094 209h3M1087 205h2M1099 204h3M1181 209h1M1128 205h3M1152 211h3M1106 210h2M1064 209h3M1043 209h1M1187 211h3M1143 204h2M1091 209h1M1086 209h1M1150 210h2M1060 203h1M1116 201h3M1060 202h1M1129 202h1M1057 208h2M1083 204h1M1063 203h1M1051 204h1M1060 206h3M1167 205h1M1062 203h2M1070 207h3M1178 205h2M1091 211h1M1040 201h3M1042 207h1M1056 210h3M1069 204h2M1134 205h1M1060 212h3" stroke="#0ff" stroke-width="1" fill="none" transform="translate(0,.5)"/>
<path d="M287 447.3L1023 136" stroke="#ff0" stroke-width="1.2" fill="none" stroke-dasharray="2 1"/>
<path d="M1023 136 L1030 134.5" stroke="#ff0" stroke-width="1" fill="none"/>
<path d="M287 327L444 262L680 161L800 123.3" stroke="#ff0" stroke-width="1" fill="none" stroke-dasharray="2 1 1 2 3 1 1 3 1 5 1 3"/>
<path d="M353 245L706 123.3" stroke="#ff0" stroke-width="1" fill="none" stroke-dasharray="2 2 1 3"/>
<path d="M1021 123L1203 165.3" stroke="#ff0" stroke-width="1" fill="none" stroke-dasharray="3 2"/>
<path d="M1203 165.3 L1211 169.5 L1216.5 176 L1219.5 186 L1219.5 200 L1217 212" stroke="#ff0" stroke-width="1.4" fill="none"/>
<clipPath id="cef"><polygon points="1219.5,180 1260,180 1260,270 1150,270 1150,214.5 1216,214.5"/></clipPath>
<g clip-path="url(#cef)"><path d="M1219.5 186L1202.2 201.8L1221.8 206.9L1228.7 202.2L1209.6 197L1202.2 201.8M1219.5 186L1221.8 206.9M1219.5 186L1228.7 202.2M1219.5 186L1209.6 197M1219.5 192L1200.2 209.7L1222 215.5L1229.8 210.1L1208.4 204.3L1200.2 209.7M1219.5 192L1222 215.5M1219.5 192L1229.8 210.1M1219.5 192L1208.4 204.3M1219.3 198L1197.6 217.9L1222.1 224.4L1230.9 218.3L1206.8 211.9L1197.6 217.9M1219.3 198L1222.1 224.4M1219.3 198L1230.9 218.3M1219.3 198L1206.8 211.9M1218.5 204L1193.7 226.8L1221.7 234.2L1231.7 227.3L1204.2 219.8L1193.7 226.8M1218.5 204L1221.7 234.2M1218.5 204L1231.7 227.3M1218.5 204L1204.2 219.8M1217.5 209L1188.2 235.9L1221.3 244.6L1233.1 236.5L1200.7 227.7L1188.2 235.9M1217.5 209L1221.3 244.6M1217.5 209L1233.1 236.5M1217.5 209L1200.7 227.7" stroke="#00f" stroke-width="1" fill="none"/></g>
<path d="M1181.5 243.6L1220.5 253.9L1234.4 244.3" stroke="#00f" stroke-width="1" fill="none"/>
<path d="M1216 212L1220.5 253.9" stroke="#00f" stroke-width="1" fill="none" stroke-dasharray="3 2"/>
<path d="M1216 212L1181.5 243.6L1196.2 234L1234.4 244.3L1216 212M1216 212L1196.2 234" stroke="#f00" stroke-width="1" fill="none"/>
</svg></div>
<div id="lborder" class="abs"></div><div id="rborder" class="abs"></div>
<div class="abs" style="left:0;top:883px;width:1371px;height:1px;background:#bdbcba"></div>
<div class="abs" style="left:1368px;top:121px;width:1px;height:763px;background:#bdbcba"></div></body></html>
